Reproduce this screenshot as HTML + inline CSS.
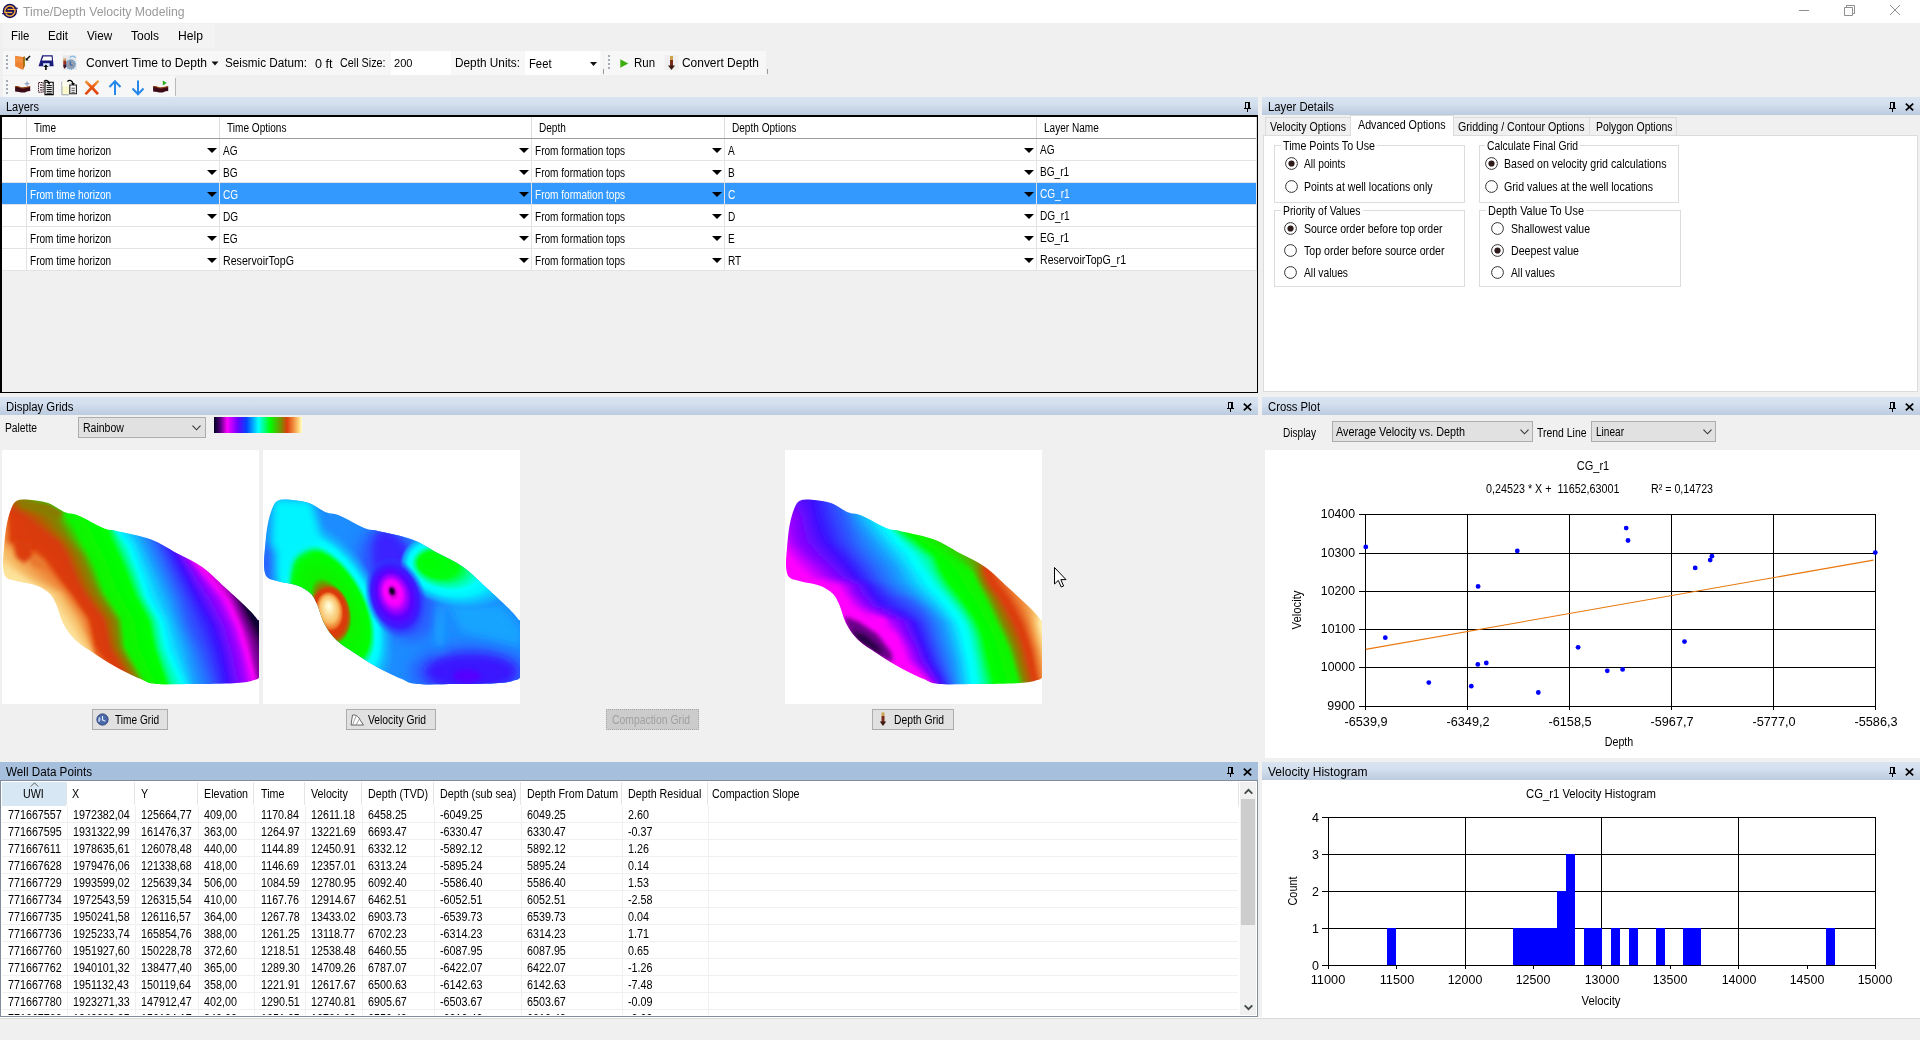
<!DOCTYPE html>
<html><head><meta charset="utf-8"><title>Time/Depth Velocity Modeling</title>
<style>
html,body{margin:0;padding:0;}
html{width:1920px;height:1040px;overflow:hidden;}
body{width:1920px;height:1040px;overflow:hidden;background:#f0f0f0;position:relative;
font-family:"Liberation Sans",sans-serif;font-size:11px;color:#000;}
body div{position:absolute;box-sizing:border-box;}
.t{white-space:nowrap;}
svg{position:absolute;overflow:visible;}
.hdr{background:linear-gradient(#d9e4f1,#d3dfee 40%,#bccbdf 100%);}
.hdra{background:#a6bfdd;}
#r{left:0;top:0;width:1920px;height:1040px;overflow:hidden;}
</style></head><body><div id="r">
<div style="left:0px;top:0px;width:1920px;height:23px;background:#fff;"></div>
<svg style="left:0px;top:0px" width="22" height="22" viewBox="0 0 22 22">
<circle cx="9.9" cy="11" r="7.2" fill="#15105c"/>
<circle cx="9.9" cy="11" r="5" fill="none" stroke="#f6aa3c" stroke-width="1.5"/>
<rect x="14" y="7.7" width="3.8" height="1.1" fill="#15105c"/>
<rect x="2" y="13.1" width="3.8" height="1.1" fill="#15105c"/>
<rect x="7.4" y="8.8" width="8" height="1.4" fill="#f6aa3c"/>
<rect x="5.8" y="10.2" width="8.4" height="1.6" fill="#15105c"/>
<rect x="4.4" y="11.8" width="8" height="1.4" fill="#f6aa3c"/>
</svg>
<div class="t" style="left:23.2px;top:3.8px;font-size:12px;line-height:16px;color:#9a9a9a;transform:scaleX(1.0203);transform-origin:0 50%;">Time/Depth Velocity Modeling</div>
<svg style="left:1790px;top:0px" width="130" height="23" viewBox="0 0 130 23">
<path d="M9 10.5 H19" stroke="#8e8e8e" stroke-width="1"/>
<path d="M54.5 7.5 H62.5 V15.5 H54.5 Z M56.5 7.5 V5.5 H64.5 V13.5 H62.5" fill="none" stroke="#8e8e8e" stroke-width="1"/>
<path d="M100 5 L110 15 M110 5 L100 15" stroke="#8e8e8e" stroke-width="1"/>
</svg>
<div style="left:3px;top:24px;width:212px;height:24px;background:#f3f3f3;"></div>
<div class="t" style="left:11.2px;top:28px;font-size:12px;line-height:16px;color:#000;transform:scaleX(0.9472);transform-origin:0 50%;">File</div>
<div class="t" style="left:48.3px;top:28px;font-size:12px;line-height:16px;color:#000;transform:scaleX(0.9634);transform-origin:0 50%;">Edit</div>
<div class="t" style="left:86.7px;top:28px;font-size:12px;line-height:16px;color:#000;transform:scaleX(0.9761);transform-origin:0 50%;">View</div>
<div class="t" style="left:131.3px;top:28px;font-size:12px;line-height:16px;color:#000;transform:scaleX(1.0014);transform-origin:0 50%;">Tools</div>
<div class="t" style="left:178.3px;top:28px;font-size:12px;line-height:16px;color:#000;transform:scaleX(1.0113);transform-origin:0 50%;">Help</div>
<div style="left:3px;top:51px;width:600px;height:24px;background:#f7f7f7;"></div>
<div style="left:603px;top:69px;width:1px;height:5px;background:#9a9a9a;"></div>
<div style="left:604px;top:51px;width:162px;height:24px;background:#f7f7f7;"></div>
<div style="left:767px;top:69px;width:1px;height:5px;background:#9a9a9a;"></div>
<div style="left:6px;top:55px;width:2px;height:2px;background:#a4aab6;"></div>
<div style="left:6px;top:59px;width:2px;height:2px;background:#a4aab6;"></div>
<div style="left:6px;top:63px;width:2px;height:2px;background:#a4aab6;"></div>
<div style="left:6px;top:67px;width:2px;height:2px;background:#a4aab6;"></div>
<div style="left:608px;top:55px;width:2px;height:2px;background:#a4aab6;"></div>
<div style="left:608px;top:59px;width:2px;height:2px;background:#a4aab6;"></div>
<div style="left:608px;top:63px;width:2px;height:2px;background:#a4aab6;"></div>
<div style="left:608px;top:67px;width:2px;height:2px;background:#a4aab6;"></div>
<svg style="left:14px;top:54px" width="18" height="18" viewBox="0 0 18 18">
<path d="M1.1 1.8 L8.9 3.1 L8.9 15.9 L1.1 12.2 Z" fill="#ee8230"/>
<path d="M2 3 L8 4.2 L8 9 L2 7.5 Z" fill="#f59a4a" opacity="0.6"/>
<path d="M8.9 3.1 L11 2.3 L11 11.7 L8.9 15.9 Z" fill="#b8640e"/>
<path d="M10.3 3 V11" stroke="#8a9a20" stroke-width="0.7"/>
<path d="M16 2 L12.3 5.8" stroke="#111" stroke-width="1.5"/>
<path d="M11.6 3.4 V6.6 H14.8 Z" fill="#111"/>
</svg>
<svg style="left:37px;top:54px" width="18" height="18" viewBox="0 0 18 18">
<path d="M5.2 1.3 H15.6 L16.6 12.2 H1.5 Z" fill="#1a1a7c"/>
<path d="M6.3 2.4 H14.6 L15 6.4 H4.8 Z" fill="#fff"/>
<path d="M6.2 9.2 H12.6 V12.2 H6.2 Z" fill="#dcecff"/>
<path d="M8.9 11.5 V15.9" stroke="#0a0a0a" stroke-width="1.7"/>
<path d="M6.4 13 L8.9 10.4 L11.4 13 Z" fill="#0a0a0a"/>
</svg>
<svg style="left:60px;top:53px" width="19" height="19" viewBox="0 0 19 19">
<rect x="2.5" y="2.3" width="14.2" height="14.6" fill="#e9e9e9"/>
<circle cx="10.8" cy="11.4" r="4.6" fill="#9a9ea8" stroke="#4a9be0" stroke-width="1.3" stroke-dasharray="1 0.9"/>
<path d="M10.3 8.2 V11.8 L12.6 12.6" stroke="#2a64b8" stroke-width="1.1" fill="none"/>
<path d="M9.8 4.6 C11.5 2.4 14.5 2.6 15.6 5" stroke="#7fb8ea" stroke-width="1.3" fill="none"/>
<rect x="3.3" y="5.4" width="2.9" height="2.2" fill="#c8a262"/>
<rect x="3.3" y="7.6" width="2.9" height="3.6" fill="#9c3020"/>
<path d="M3.3 11.2 H6.2 V13.6 L4.75 15.9 L3.3 13.6 Z" fill="#401020"/>
</svg>
<div class="t" style="left:86.3px;top:55px;font-size:12px;line-height:16px;color:#000;transform:scaleX(1.0083);transform-origin:0 50%;">Convert Time to Depth</div>
<svg style="left:211px;top:61px" width="8" height="5" viewBox="0 0 8 5"><path d="M0.5 0.5 H7.5 L4 4.5 Z" fill="#111"/></svg>
<div class="t" style="left:225.0px;top:55px;font-size:12px;line-height:16px;color:#000;transform:scaleX(0.9762);transform-origin:0 50%;">Seismic Datum:</div>
<div class="t" style="left:315.4px;top:56px;font-size:12px;line-height:16px;color:#000;transform:scaleX(1.0492);transform-origin:0 50%;">0 ft</div>
<div class="t" style="left:340.4px;top:55px;font-size:12px;line-height:16px;color:#000;transform:scaleX(0.8985);transform-origin:0 50%;">Cell Size:</div>
<div style="left:391px;top:51px;width:60px;height:24px;background:#fff;"></div>
<div class="t" style="left:394.0px;top:55px;font-size:11px;line-height:16px;color:#000;transform:scaleX(1.0071);transform-origin:0 50%;">200</div>
<div class="t" style="left:455.0px;top:55px;font-size:12px;line-height:16px;color:#000;transform:scaleX(0.9848);transform-origin:0 50%;">Depth Units:</div>
<div style="left:525px;top:51px;width:75px;height:24px;background:#fff;"></div>
<div class="t" style="left:529.0px;top:56px;font-size:12px;line-height:16px;color:#000;transform:scaleX(0.9375);transform-origin:0 50%;">Feet</div>
<svg style="left:590px;top:62px" width="7" height="4" viewBox="0 0 7 4"><path d="M0 0 H7 L3.5 4 Z" fill="#111"/></svg>
<svg style="left:619.5px;top:58.5px" width="9" height="9" viewBox="0 0 9 9"><path d="M0.3 0.2 L8.3 4.5 L0.3 8.8 Z" fill="#3fae12"/></svg>
<div class="t" style="left:634.0px;top:55px;font-size:12px;line-height:16px;color:#000;transform:scaleX(0.9563);transform-origin:0 50%;">Run</div>
<svg style="left:665px;top:54px" width="13" height="18" viewBox="0 0 12 18">
<rect x="-1" y="1" width="14" height="15" fill="#efefef"/>
<rect x="4.5" y="2" width="3" height="4" fill="#c9a24a"/>
<rect x="4.5" y="6" width="3" height="6" fill="#7a2c1c"/>
<path d="M2.5 11.5 H9.5 L6 16 Z" fill="#3a1a12"/>
</svg>
<div class="t" style="left:682.0px;top:55px;font-size:12px;line-height:16px;color:#000;transform:scaleX(0.9948);transform-origin:0 50%;">Convert Depth</div>
<div style="left:3px;top:76px;width:172px;height:21px;background:#f7f7f7;"></div>
<div style="left:175px;top:78px;width:1px;height:18px;background:#b9b9b9;"></div>
<div style="left:6px;top:80px;width:2px;height:2px;background:#a4aab6;"></div>
<div style="left:6px;top:84px;width:2px;height:2px;background:#a4aab6;"></div>
<div style="left:6px;top:88px;width:2px;height:2px;background:#a4aab6;"></div>
<div style="left:6px;top:92px;width:2px;height:2px;background:#a4aab6;"></div>
<svg style="left:14px;top:78px" width="18" height="18" viewBox="0 0 18 18">
<rect x="1" y="2" width="15.5" height="15" fill="#f6f6f6"/><path d="M1.1 8.6 C3.5 7.6 5.5 9.4 8 9.8 C10.5 10.2 12.5 8.6 16.2 8.6 V13 C13.5 12.6 11.5 14.8 9 14.6 C6.5 14.4 4 13.4 1.1 13.4 Z" fill="#3c0a18"/><path d="M1.1 8.8 C3.5 7.8 5.5 9.6 8 10 C10.5 10.4 12.5 8.8 16.2 8.8" stroke="#9a4210" stroke-width="1.1" fill="none"/>
<path d="M13 3.4 V8 M10.7 5.7 H15.3" stroke="#8ea4c4" stroke-width="1.2"/>
</svg>
<svg style="left:37px;top:78px" width="18" height="18" viewBox="0 0 18 18">
<path d="M1.6 4.5 H6.2 V14.2 H1.6 Z" fill="#fff" stroke="#3a1018" stroke-width="1" stroke-dasharray="1.6 0.6"/>
<path d="M3 7 H5.4 M3 9.6 H5.4 M3 12 H5.4" stroke="#3a1018" stroke-width="1"/>
<path d="M8 4.2 H16.2 V16.6 H8 Z" fill="#fff" stroke="#000" stroke-width="1.1"/>
<path d="M9.6 7.4 H14.8 M9.6 9.4 H14.8 M9.6 11.4 H14.8 M9.6 13.4 H14.8 M9.6 15.2 H14.8" stroke="#000" stroke-width="1"/>
<path d="M7 3.4 C9 1.6 11.4 2.4 12 5" stroke="#000" stroke-width="1.3" fill="none"/>
<path d="M10.2 4.6 L12.2 6.8 L13.6 4.2 Z" fill="#000"/>
</svg>
<svg style="left:60px;top:78px" width="18" height="18" viewBox="0 0 18 18">
<path d="M1.9 3.6 H9.2 V16.8 H1.9 Z" fill="#fbf8cc"/>
<path d="M1.9 3.6 V16.8 H9.2" fill="none" stroke="#8c98aa" stroke-width="0.9"/>
<path d="M2.4 3.8 H8.8 V8.5 H2.4 Z" fill="#fdfdf0"/>
<path d="M9.8 7 H16.4 V15.8 H9.8 Z" fill="#fff" stroke="#222" stroke-width="1.1"/>
<path d="M11.4 10.2 H14.8 M11.4 12.3 H14.8 M11.4 14.3 H14.8" stroke="#222" stroke-width="0.8"/>
<path d="M7.4 3.4 C9.6 1.4 12.6 2.4 13 6" stroke="#000" stroke-width="1.3" fill="none"/>
<path d="M11 5.2 L13.2 7.6 L15 5 Z" fill="#000"/>
</svg>
<svg style="left:83px;top:78px" width="18" height="18" viewBox="0 0 18 18">
<defs><linearGradient id="gx" x1="0" y1="0" x2="0" y2="1"><stop offset="0" stop-color="#f4a844"/><stop offset="0.45" stop-color="#e85a14"/><stop offset="1" stop-color="#dc3c0c"/></linearGradient></defs>
<path d="M1.6 4 L3.6 2.2 L8.9 7.6 L14.6 2 L16.4 3.4 L10.8 9.6 L16 15.2 L14 17 L8.8 11.6 L3.4 17 L1.6 15.4 L6.9 9.6 Z" fill="url(#gx)"/>
</svg>
<svg style="left:107px;top:78.5px" width="16" height="18" viewBox="0 0 16 18">
<path d="M8 16 V3 M2.5 8 L8 2.2 L13.5 8" stroke="#2688e8" stroke-width="2" fill="none"/>
</svg>
<svg style="left:130px;top:78.5px" width="16" height="18" viewBox="0 0 16 18">
<path d="M8 1.5 V14.5 M2.5 9.5 L8 15.3 L13.5 9.5" stroke="#2688e8" stroke-width="2" fill="none"/>
</svg>
<svg style="left:152px;top:78px" width="18" height="18" viewBox="0 0 18 18">
<rect x="1" y="2" width="15.5" height="15" fill="#f6f6f6"/><path d="M1.1 8.6 C3.5 7.6 5.5 9.4 8 9.8 C10.5 10.2 12.5 8.6 16.2 8.6 V13 C13.5 12.6 11.5 14.8 9 14.6 C6.5 14.4 4 13.4 1.1 13.4 Z" fill="#3c0a18"/><path d="M1.1 8.8 C3.5 7.8 5.5 9.6 8 10 C10.5 10.4 12.5 8.8 16.2 8.8" stroke="#9a4210" stroke-width="1.1" fill="none"/>
<path d="M10.8 2.6 L14.8 5 L10.8 7.6 Z" fill="#2cb01c"/>
</svg>
<div class="hdr" style="left:0px;top:97px;width:1258px;height:18px;"></div>
<div class="t" style="left:6.3px;top:98.5px;font-size:12px;line-height:16px;color:#000;transform:scaleX(0.9167);transform-origin:0 50%;">Layers</div>
<svg style="left:1244px;top:102px" width="7" height="10" viewBox="0 0 7 10"><g shape-rendering="crispEdges" fill="#000"><rect x="1" y="0" width="5" height="1"/><rect x="1" y="0" width="1" height="6"/><rect x="4" y="0" width="2" height="6"/><rect x="0" y="6" width="7" height="1"/><rect x="3" y="7" width="1" height="3"/></g></svg>
<div style="left:0px;top:115px;width:1258px;height:278px;background:#f0f0f0;border:1px solid #000;border-left-width:2px;border-top-width:2px;"></div>
<div style="left:2px;top:117px;width:1255px;height:22px;background:#fff;border-bottom:1px solid #9d9d9d;"></div>
<div style="left:26px;top:117px;width:1px;height:21px;background:#dcdcdc;"></div>
<div style="left:219px;top:117px;width:1px;height:21px;background:#dcdcdc;"></div>
<div style="left:531px;top:117px;width:1px;height:21px;background:#dcdcdc;"></div>
<div style="left:724px;top:117px;width:1px;height:21px;background:#dcdcdc;"></div>
<div style="left:1036px;top:117px;width:1px;height:21px;background:#dcdcdc;"></div>
<div style="left:1256px;top:117px;width:1px;height:22px;background:#dcdcdc;"></div>
<div class="t" style="left:34.0px;top:121px;font-size:12px;line-height:14px;color:#000;transform:scaleX(0.839);transform-origin:0 50%;">Time</div>
<div class="t" style="left:227.0px;top:121px;font-size:12px;line-height:14px;color:#000;transform:scaleX(0.839);transform-origin:0 50%;">Time Options</div>
<div class="t" style="left:539.0px;top:121px;font-size:12px;line-height:14px;color:#000;transform:scaleX(0.839);transform-origin:0 50%;">Depth</div>
<div class="t" style="left:732.0px;top:121px;font-size:12px;line-height:14px;color:#000;transform:scaleX(0.839);transform-origin:0 50%;">Depth Options</div>
<div class="t" style="left:1044.0px;top:121px;font-size:12px;line-height:14px;color:#000;transform:scaleX(0.839);transform-origin:0 50%;">Layer Name</div>
<div style="left:2px;top:139px;width:1255px;height:22px;background:#fff;border-bottom:1px solid #e3e3e3;"></div>
<div style="left:26px;top:139px;width:1px;height:21px;background:#e3e3e3;"></div>
<div style="left:219px;top:139px;width:1px;height:21px;background:#e3e3e3;"></div>
<div style="left:531px;top:139px;width:1px;height:21px;background:#e3e3e3;"></div>
<div style="left:724px;top:139px;width:1px;height:21px;background:#e3e3e3;"></div>
<div style="left:1036px;top:139px;width:1px;height:21px;background:#e3e3e3;"></div>
<div style="left:1256px;top:139px;width:1px;height:22px;background:#e3e3e3;"></div>
<div class="t" style="left:30.0px;top:143.5px;font-size:12px;line-height:14px;color:#000;transform:scaleX(0.839);transform-origin:0 50%;">From time horizon</div>
<svg style="left:207px;top:147.5px" width="10" height="5" viewBox="0 0 10 5"><path d="M0 0 H10 L5 5 Z" fill="#000"/></svg>
<div class="t" style="left:223.0px;top:143.5px;font-size:12px;line-height:14px;color:#000;transform:scaleX(0.839);transform-origin:0 50%;">AG</div>
<svg style="left:519px;top:147.5px" width="10" height="5" viewBox="0 0 10 5"><path d="M0 0 H10 L5 5 Z" fill="#000"/></svg>
<div class="t" style="left:535.0px;top:143.5px;font-size:12px;line-height:14px;color:#000;transform:scaleX(0.839);transform-origin:0 50%;">From formation tops</div>
<svg style="left:712px;top:147.5px" width="10" height="5" viewBox="0 0 10 5"><path d="M0 0 H10 L5 5 Z" fill="#000"/></svg>
<div class="t" style="left:728.0px;top:143.5px;font-size:12px;line-height:14px;color:#000;transform:scaleX(0.839);transform-origin:0 50%;">A</div>
<svg style="left:1024px;top:147.5px" width="10" height="5" viewBox="0 0 10 5"><path d="M0 0 H10 L5 5 Z" fill="#000"/></svg>
<div class="t" style="left:1040.0px;top:142.5px;font-size:12px;line-height:14px;color:#000;transform:scaleX(0.839);transform-origin:0 50%;">AG</div>
<div style="left:2px;top:161px;width:1255px;height:22px;background:#fff;border-bottom:1px solid #e3e3e3;"></div>
<div style="left:26px;top:161px;width:1px;height:21px;background:#e3e3e3;"></div>
<div style="left:219px;top:161px;width:1px;height:21px;background:#e3e3e3;"></div>
<div style="left:531px;top:161px;width:1px;height:21px;background:#e3e3e3;"></div>
<div style="left:724px;top:161px;width:1px;height:21px;background:#e3e3e3;"></div>
<div style="left:1036px;top:161px;width:1px;height:21px;background:#e3e3e3;"></div>
<div style="left:1256px;top:161px;width:1px;height:22px;background:#e3e3e3;"></div>
<div class="t" style="left:30.0px;top:165.5px;font-size:12px;line-height:14px;color:#000;transform:scaleX(0.839);transform-origin:0 50%;">From time horizon</div>
<svg style="left:207px;top:169.5px" width="10" height="5" viewBox="0 0 10 5"><path d="M0 0 H10 L5 5 Z" fill="#000"/></svg>
<div class="t" style="left:223.0px;top:165.5px;font-size:12px;line-height:14px;color:#000;transform:scaleX(0.839);transform-origin:0 50%;">BG</div>
<svg style="left:519px;top:169.5px" width="10" height="5" viewBox="0 0 10 5"><path d="M0 0 H10 L5 5 Z" fill="#000"/></svg>
<div class="t" style="left:535.0px;top:165.5px;font-size:12px;line-height:14px;color:#000;transform:scaleX(0.839);transform-origin:0 50%;">From formation tops</div>
<svg style="left:712px;top:169.5px" width="10" height="5" viewBox="0 0 10 5"><path d="M0 0 H10 L5 5 Z" fill="#000"/></svg>
<div class="t" style="left:728.0px;top:165.5px;font-size:12px;line-height:14px;color:#000;transform:scaleX(0.839);transform-origin:0 50%;">B</div>
<svg style="left:1024px;top:169.5px" width="10" height="5" viewBox="0 0 10 5"><path d="M0 0 H10 L5 5 Z" fill="#000"/></svg>
<div class="t" style="left:1040.0px;top:164.5px;font-size:12px;line-height:14px;color:#000;transform:scaleX(0.839);transform-origin:0 50%;">BG_r1</div>
<div style="left:2px;top:183px;width:1255px;height:22px;background:#3399ff;border-bottom:1px solid #e3e3e3;"></div>
<div style="left:26px;top:183px;width:1px;height:21px;background:#e3e3e3;"></div>
<div style="left:219px;top:183px;width:1px;height:21px;background:#e3e3e3;"></div>
<div style="left:531px;top:183px;width:1px;height:21px;background:#e3e3e3;"></div>
<div style="left:724px;top:183px;width:1px;height:21px;background:#e3e3e3;"></div>
<div style="left:1036px;top:183px;width:1px;height:21px;background:#e3e3e3;"></div>
<div style="left:1256px;top:183px;width:1px;height:22px;background:#e3e3e3;"></div>
<div class="t" style="left:30.0px;top:187.5px;font-size:12px;line-height:14px;color:#fff;transform:scaleX(0.839);transform-origin:0 50%;">From time horizon</div>
<svg style="left:207px;top:191.5px" width="10" height="5" viewBox="0 0 10 5"><path d="M0 0 H10 L5 5 Z" fill="#000"/></svg>
<div class="t" style="left:223.0px;top:187.5px;font-size:12px;line-height:14px;color:#fff;transform:scaleX(0.839);transform-origin:0 50%;">CG</div>
<svg style="left:519px;top:191.5px" width="10" height="5" viewBox="0 0 10 5"><path d="M0 0 H10 L5 5 Z" fill="#000"/></svg>
<div class="t" style="left:535.0px;top:187.5px;font-size:12px;line-height:14px;color:#fff;transform:scaleX(0.839);transform-origin:0 50%;">From formation tops</div>
<svg style="left:712px;top:191.5px" width="10" height="5" viewBox="0 0 10 5"><path d="M0 0 H10 L5 5 Z" fill="#000"/></svg>
<div class="t" style="left:728.0px;top:187.5px;font-size:12px;line-height:14px;color:#fff;transform:scaleX(0.839);transform-origin:0 50%;">C</div>
<svg style="left:1024px;top:191.5px" width="10" height="5" viewBox="0 0 10 5"><path d="M0 0 H10 L5 5 Z" fill="#000"/></svg>
<div class="t" style="left:1040.0px;top:186.5px;font-size:12px;line-height:14px;color:#fff;transform:scaleX(0.839);transform-origin:0 50%;">CG_r1</div>
<div style="left:2px;top:205px;width:1255px;height:22px;background:#fff;border-bottom:1px solid #e3e3e3;"></div>
<div style="left:26px;top:205px;width:1px;height:21px;background:#e3e3e3;"></div>
<div style="left:219px;top:205px;width:1px;height:21px;background:#e3e3e3;"></div>
<div style="left:531px;top:205px;width:1px;height:21px;background:#e3e3e3;"></div>
<div style="left:724px;top:205px;width:1px;height:21px;background:#e3e3e3;"></div>
<div style="left:1036px;top:205px;width:1px;height:21px;background:#e3e3e3;"></div>
<div style="left:1256px;top:205px;width:1px;height:22px;background:#e3e3e3;"></div>
<div class="t" style="left:30.0px;top:209.5px;font-size:12px;line-height:14px;color:#000;transform:scaleX(0.839);transform-origin:0 50%;">From time horizon</div>
<svg style="left:207px;top:213.5px" width="10" height="5" viewBox="0 0 10 5"><path d="M0 0 H10 L5 5 Z" fill="#000"/></svg>
<div class="t" style="left:223.0px;top:209.5px;font-size:12px;line-height:14px;color:#000;transform:scaleX(0.839);transform-origin:0 50%;">DG</div>
<svg style="left:519px;top:213.5px" width="10" height="5" viewBox="0 0 10 5"><path d="M0 0 H10 L5 5 Z" fill="#000"/></svg>
<div class="t" style="left:535.0px;top:209.5px;font-size:12px;line-height:14px;color:#000;transform:scaleX(0.839);transform-origin:0 50%;">From formation tops</div>
<svg style="left:712px;top:213.5px" width="10" height="5" viewBox="0 0 10 5"><path d="M0 0 H10 L5 5 Z" fill="#000"/></svg>
<div class="t" style="left:728.0px;top:209.5px;font-size:12px;line-height:14px;color:#000;transform:scaleX(0.839);transform-origin:0 50%;">D</div>
<svg style="left:1024px;top:213.5px" width="10" height="5" viewBox="0 0 10 5"><path d="M0 0 H10 L5 5 Z" fill="#000"/></svg>
<div class="t" style="left:1040.0px;top:208.5px;font-size:12px;line-height:14px;color:#000;transform:scaleX(0.839);transform-origin:0 50%;">DG_r1</div>
<div style="left:2px;top:227px;width:1255px;height:22px;background:#fff;border-bottom:1px solid #e3e3e3;"></div>
<div style="left:26px;top:227px;width:1px;height:21px;background:#e3e3e3;"></div>
<div style="left:219px;top:227px;width:1px;height:21px;background:#e3e3e3;"></div>
<div style="left:531px;top:227px;width:1px;height:21px;background:#e3e3e3;"></div>
<div style="left:724px;top:227px;width:1px;height:21px;background:#e3e3e3;"></div>
<div style="left:1036px;top:227px;width:1px;height:21px;background:#e3e3e3;"></div>
<div style="left:1256px;top:227px;width:1px;height:22px;background:#e3e3e3;"></div>
<div class="t" style="left:30.0px;top:231.5px;font-size:12px;line-height:14px;color:#000;transform:scaleX(0.839);transform-origin:0 50%;">From time horizon</div>
<svg style="left:207px;top:235.5px" width="10" height="5" viewBox="0 0 10 5"><path d="M0 0 H10 L5 5 Z" fill="#000"/></svg>
<div class="t" style="left:223.0px;top:231.5px;font-size:12px;line-height:14px;color:#000;transform:scaleX(0.839);transform-origin:0 50%;">EG</div>
<svg style="left:519px;top:235.5px" width="10" height="5" viewBox="0 0 10 5"><path d="M0 0 H10 L5 5 Z" fill="#000"/></svg>
<div class="t" style="left:535.0px;top:231.5px;font-size:12px;line-height:14px;color:#000;transform:scaleX(0.839);transform-origin:0 50%;">From formation tops</div>
<svg style="left:712px;top:235.5px" width="10" height="5" viewBox="0 0 10 5"><path d="M0 0 H10 L5 5 Z" fill="#000"/></svg>
<div class="t" style="left:728.0px;top:231.5px;font-size:12px;line-height:14px;color:#000;transform:scaleX(0.839);transform-origin:0 50%;">E</div>
<svg style="left:1024px;top:235.5px" width="10" height="5" viewBox="0 0 10 5"><path d="M0 0 H10 L5 5 Z" fill="#000"/></svg>
<div class="t" style="left:1040.0px;top:230.5px;font-size:12px;line-height:14px;color:#000;transform:scaleX(0.839);transform-origin:0 50%;">EG_r1</div>
<div style="left:2px;top:249px;width:1255px;height:22px;background:#fff;border-bottom:1px solid #e3e3e3;"></div>
<div style="left:26px;top:249px;width:1px;height:21px;background:#e3e3e3;"></div>
<div style="left:219px;top:249px;width:1px;height:21px;background:#e3e3e3;"></div>
<div style="left:531px;top:249px;width:1px;height:21px;background:#e3e3e3;"></div>
<div style="left:724px;top:249px;width:1px;height:21px;background:#e3e3e3;"></div>
<div style="left:1036px;top:249px;width:1px;height:21px;background:#e3e3e3;"></div>
<div style="left:1256px;top:249px;width:1px;height:22px;background:#e3e3e3;"></div>
<div class="t" style="left:30.0px;top:253.5px;font-size:12px;line-height:14px;color:#000;transform:scaleX(0.839);transform-origin:0 50%;">From time horizon</div>
<svg style="left:207px;top:257.5px" width="10" height="5" viewBox="0 0 10 5"><path d="M0 0 H10 L5 5 Z" fill="#000"/></svg>
<div class="t" style="left:223.0px;top:253.5px;font-size:12px;line-height:14px;color:#000;transform:scaleX(0.8871);transform-origin:0 50%;">ReservoirTopG</div>
<svg style="left:519px;top:257.5px" width="10" height="5" viewBox="0 0 10 5"><path d="M0 0 H10 L5 5 Z" fill="#000"/></svg>
<div class="t" style="left:535.0px;top:253.5px;font-size:12px;line-height:14px;color:#000;transform:scaleX(0.839);transform-origin:0 50%;">From formation tops</div>
<svg style="left:712px;top:257.5px" width="10" height="5" viewBox="0 0 10 5"><path d="M0 0 H10 L5 5 Z" fill="#000"/></svg>
<div class="t" style="left:728.0px;top:253.5px;font-size:12px;line-height:14px;color:#000;transform:scaleX(0.839);transform-origin:0 50%;">RT</div>
<svg style="left:1024px;top:257.5px" width="10" height="5" viewBox="0 0 10 5"><path d="M0 0 H10 L5 5 Z" fill="#000"/></svg>
<div class="t" style="left:1040.0px;top:252.5px;font-size:12px;line-height:14px;color:#000;transform:scaleX(0.8837);transform-origin:0 50%;">ReservoirTopG_r1</div>
<div class="hdr" style="left:1262px;top:97px;width:658px;height:18px;"></div>
<div class="t" style="left:1268.3px;top:98.5px;font-size:12px;line-height:16px;color:#000;transform:scaleX(0.9418);transform-origin:0 50%;">Layer Details</div>
<svg style="left:1889px;top:102px" width="7" height="10" viewBox="0 0 7 10"><g shape-rendering="crispEdges" fill="#000"><rect x="1" y="0" width="5" height="1"/><rect x="1" y="0" width="1" height="6"/><rect x="4" y="0" width="2" height="6"/><rect x="0" y="6" width="7" height="1"/><rect x="3" y="7" width="1" height="3"/></g></svg>
<svg style="left:1905px;top:103px" width="9" height="8" viewBox="0 0 9 8"><path d="M0.8 0.6 L8.2 7.4 M8.2 0.6 L0.8 7.4" stroke="#000" stroke-width="1.7"/></svg>
<div style="left:1263px;top:135px;width:655px;height:257px;background:#fff;border:1px solid #dcdcdc;"></div>
<div style="left:1265px;top:117px;width:86px;height:18px;background:#f0f0f0;border:1px solid #dcdcdc;border-bottom:none;"></div>
<div class="t" style="left:1269.6px;top:119.8px;font-size:12px;line-height:14px;color:#000;transform:scaleX(0.8833);transform-origin:0 50%;">Velocity Options</div>
<div style="left:1453px;top:117px;width:137px;height:18px;background:#f0f0f0;border:1px solid #dcdcdc;border-bottom:none;"></div>
<div class="t" style="left:1457.6px;top:119.8px;font-size:12px;line-height:14px;color:#000;transform:scaleX(0.8866);transform-origin:0 50%;">Gridding / Contour Options</div>
<div style="left:1589px;top:117px;width:88px;height:18px;background:#f0f0f0;border:1px solid #dcdcdc;border-bottom:none;"></div>
<div class="t" style="left:1596.0px;top:119.8px;font-size:12px;line-height:14px;color:#000;transform:scaleX(0.8685);transform-origin:0 50%;">Polygon Options</div>
<div style="left:1350px;top:115px;width:104px;height:21px;background:#fff;border:1px solid #dcdcdc;border-bottom:none;"></div>
<div class="t" style="left:1358.2px;top:117.8px;font-size:12px;line-height:14px;color:#000;transform:scaleX(0.8925);transform-origin:0 50%;">Advanced Options</div>
<div style="left:1274px;top:145px;width:191px;height:58px;border:1px solid #dcdcdc;"></div>
<div style="left:1281px;top:139px;width:96px;height:12px;background:#fff;"></div>
<div class="t" style="left:1283.0px;top:139px;font-size:12px;line-height:14px;color:#000;transform:scaleX(0.8904);transform-origin:0 50%;">Time Points To Use</div>
<svg style="left:1285px;top:157px" width="13" height="13" viewBox="0 0 13 13"><circle cx="6.5" cy="6.5" r="5.9" fill="#fff" stroke="#333" stroke-width="1"/><circle cx="6.5" cy="6.5" r="3.1" fill="#2e1c1c"/></svg>
<div class="t" style="left:1304.0px;top:157px;font-size:12px;line-height:14px;color:#000;transform:scaleX(0.8518);transform-origin:0 50%;">All points</div>
<svg style="left:1285px;top:180px" width="13" height="13" viewBox="0 0 13 13"><circle cx="6.5" cy="6.5" r="5.9" fill="#fff" stroke="#333" stroke-width="1"/></svg>
<div class="t" style="left:1304.0px;top:180px;font-size:12px;line-height:14px;color:#000;transform:scaleX(0.8756);transform-origin:0 50%;">Points at well locations only</div>
<div style="left:1479px;top:145px;width:200px;height:58px;border:1px solid #dcdcdc;"></div>
<div style="left:1485px;top:139px;width:95px;height:12px;background:#fff;"></div>
<div class="t" style="left:1487.0px;top:139px;font-size:12px;line-height:14px;color:#000;transform:scaleX(0.8637);transform-origin:0 50%;">Calculate Final Grid</div>
<svg style="left:1485px;top:157px" width="13" height="13" viewBox="0 0 13 13"><circle cx="6.5" cy="6.5" r="5.9" fill="#fff" stroke="#333" stroke-width="1"/><circle cx="6.5" cy="6.5" r="3.1" fill="#2e1c1c"/></svg>
<div class="t" style="left:1504.0px;top:157px;font-size:12px;line-height:14px;color:#000;transform:scaleX(0.8857);transform-origin:0 50%;">Based on velocity grid calculations</div>
<svg style="left:1485px;top:180px" width="13" height="13" viewBox="0 0 13 13"><circle cx="6.5" cy="6.5" r="5.9" fill="#fff" stroke="#333" stroke-width="1"/></svg>
<div class="t" style="left:1503.5px;top:180px;font-size:12px;line-height:14px;color:#000;transform:scaleX(0.8831);transform-origin:0 50%;">Grid values at the well locations</div>
<div style="left:1274px;top:210px;width:191px;height:77px;border:1px solid #dcdcdc;"></div>
<div style="left:1281px;top:204px;width:81.5px;height:12px;background:#fff;"></div>
<div class="t" style="left:1283.0px;top:204px;font-size:12px;line-height:14px;color:#000;transform:scaleX(0.8634);transform-origin:0 50%;">Priority of Values</div>
<svg style="left:1284px;top:222px" width="13" height="13" viewBox="0 0 13 13"><circle cx="6.5" cy="6.5" r="5.9" fill="#fff" stroke="#333" stroke-width="1"/><circle cx="6.5" cy="6.5" r="3.1" fill="#2e1c1c"/></svg>
<div class="t" style="left:1303.5px;top:221.5px;font-size:12px;line-height:14px;color:#000;transform:scaleX(0.8764);transform-origin:0 50%;">Source order before top order</div>
<svg style="left:1284px;top:244px" width="13" height="13" viewBox="0 0 13 13"><circle cx="6.5" cy="6.5" r="5.9" fill="#fff" stroke="#333" stroke-width="1"/></svg>
<div class="t" style="left:1303.5px;top:243.5px;font-size:12px;line-height:14px;color:#000;transform:scaleX(0.885);transform-origin:0 50%;">Top order before source order</div>
<svg style="left:1284px;top:266px" width="13" height="13" viewBox="0 0 13 13"><circle cx="6.5" cy="6.5" r="5.9" fill="#fff" stroke="#333" stroke-width="1"/></svg>
<div class="t" style="left:1303.5px;top:265.5px;font-size:12px;line-height:14px;color:#000;transform:scaleX(0.8567);transform-origin:0 50%;">All values</div>
<div style="left:1479px;top:210px;width:202px;height:77px;border:1px solid #dcdcdc;"></div>
<div style="left:1486px;top:204px;width:100px;height:12px;background:#fff;"></div>
<div class="t" style="left:1488.0px;top:204px;font-size:12px;line-height:14px;color:#000;transform:scaleX(0.9091);transform-origin:0 50%;">Depth Value To Use</div>
<svg style="left:1491px;top:222px" width="13" height="13" viewBox="0 0 13 13"><circle cx="6.5" cy="6.5" r="5.9" fill="#fff" stroke="#333" stroke-width="1"/></svg>
<div class="t" style="left:1510.5px;top:221.5px;font-size:12px;line-height:14px;color:#000;transform:scaleX(0.8778);transform-origin:0 50%;">Shallowest value</div>
<svg style="left:1491px;top:244px" width="13" height="13" viewBox="0 0 13 13"><circle cx="6.5" cy="6.5" r="5.9" fill="#fff" stroke="#333" stroke-width="1"/><circle cx="6.5" cy="6.5" r="3.1" fill="#2e1c1c"/></svg>
<div class="t" style="left:1510.5px;top:243.5px;font-size:12px;line-height:14px;color:#000;transform:scaleX(0.8868);transform-origin:0 50%;">Deepest value</div>
<svg style="left:1491px;top:266px" width="13" height="13" viewBox="0 0 13 13"><circle cx="6.5" cy="6.5" r="5.9" fill="#fff" stroke="#333" stroke-width="1"/></svg>
<div class="t" style="left:1510.5px;top:265.5px;font-size:12px;line-height:14px;color:#000;transform:scaleX(0.8567);transform-origin:0 50%;">All values</div>
<div class="hdr" style="left:0px;top:397px;width:1258px;height:18px;"></div>
<div class="t" style="left:6.3px;top:398.5px;font-size:12px;line-height:16px;color:#000;transform:scaleX(0.9454);transform-origin:0 50%;">Display Grids</div>
<svg style="left:1227px;top:402px" width="7" height="10" viewBox="0 0 7 10"><g shape-rendering="crispEdges" fill="#000"><rect x="1" y="0" width="5" height="1"/><rect x="1" y="0" width="1" height="6"/><rect x="4" y="0" width="2" height="6"/><rect x="0" y="6" width="7" height="1"/><rect x="3" y="7" width="1" height="3"/></g></svg>
<svg style="left:1243px;top:403px" width="9" height="8" viewBox="0 0 9 8"><path d="M0.8 0.6 L8.2 7.4 M8.2 0.6 L0.8 7.4" stroke="#000" stroke-width="1.7"/></svg>
<div class="t" style="left:5.0px;top:420px;font-size:12px;line-height:16px;color:#000;transform:scaleX(0.8574);transform-origin:0 50%;">Palette</div>
<div style="left:78px;top:417px;width:128px;height:21px;background:#e1e1e1;border:1px solid #adadad;"></div>
<div class="t" style="left:83.0px;top:419.5px;font-size:12px;line-height:16px;color:#000;transform:scaleX(0.8761);transform-origin:0 50%;">Rainbow</div>
<svg style="left:192px;top:425px" width="9" height="6" viewBox="0 0 9 6"><path d="M0.5 0.7 L4.5 4.8 L8.5 0.7" fill="none" stroke="#333" stroke-width="1.1"/></svg>
<div style="left:214px;top:417px;width:88px;height:16px;background:linear-gradient(90deg,#000020 0%,#50007a 7%,#ff00ff 15%,#6a00ff 27%,#0044ff 37%,#00ffff 50.5%,#00ff00 64%,#7c8a00 76.5%,#dd3c0a 83%,#f08a3c 90%,#ffd27a 96%,#ffffc8 100%);"></div>
<div style="left:2px;top:450px;width:257px;height:254px;background:#fff;"></div>
<svg style="left:2px;top:450px;overflow:hidden" width="257" height="254" viewBox="0 0 257 254"><defs><clipPath id="cpgT"><path d="M16.2 50.2C19.9 49.0 26.7 49.7 31.7 50.2C36.7 50.7 40.8 51.1 46.0 53.1C51.2 55.1 57.9 60.2 62.9 62.2C67.9 64.2 69.4 62.6 75.9 65.3C82.4 68.0 95.3 75.7 101.8 78.3C108.3 80.9 107.0 79.1 114.8 80.9C122.6 82.7 138.7 85.5 148.6 89.2C158.5 92.9 165.8 98.2 174.5 102.9C183.2 107.6 191.8 110.9 200.5 117.2C209.2 123.5 218.7 133.5 226.5 140.6C234.3 147.7 242.4 155.2 247.2 160.0C251.9 164.8 253.1 166.3 255.0 169.1C256.9 171.9 257.9 168.2 258.5 177.0C259.1 185.8 259.8 213.1 258.5 222.0C257.2 230.9 255.0 228.7 250.5 230.6C246.0 232.5 241.2 232.6 231.6 233.2C222.0 233.8 205.7 233.9 192.7 234.0C179.7 234.1 162.9 234.9 153.8 234.0C144.7 233.1 145.1 231.8 138.2 228.8C131.3 225.8 120.0 220.2 112.2 215.9C104.4 211.6 98.0 207.2 91.5 202.9C85.0 198.6 78.3 194.7 73.3 189.9C68.3 185.1 64.8 180.4 61.6 174.3C58.4 168.2 56.2 158.7 53.8 153.5C51.4 148.3 50.5 146.2 47.3 143.2C44.0 140.2 39.5 137.3 34.3 135.4C29.1 133.5 21.2 132.8 16.2 131.5C11.2 130.2 7.0 130.0 4.5 127.6C2.0 125.2 1.5 122.0 1.1 117.2C0.7 112.4 1.3 105.9 1.9 99.0C2.5 92.1 3.2 82.6 4.5 75.7C5.8 68.8 7.7 61.8 9.7 57.5C11.6 53.2 12.5 51.4 16.2 50.2Z"/></clipPath><filter id="b2gT" x="-30%" y="-30%" width="160%" height="160%"><feGaussianBlur stdDeviation="2"/></filter><filter id="b4gT" x="-30%" y="-30%" width="160%" height="160%"><feGaussianBlur stdDeviation="4"/></filter><filter id="b7gT" x="-30%" y="-30%" width="160%" height="160%"><feGaussianBlur stdDeviation="7"/></filter><filter id="vbgT" x="-5%" y="-5%" width="110%" height="110%"><feGaussianBlur stdDeviation="1.2 2.2"/></filter><linearGradient id="gTr0" gradientUnits="userSpaceOnUse" x1="-80" y1="0" x2="340" y2="0"><stop offset="0.0000" stop-color="#fde29a"/><stop offset="0.0980" stop-color="#f6bc66"/><stop offset="0.1943" stop-color="#ec7a2e"/><stop offset="0.1958" stop-color="#dd3c0a"/><stop offset="0.1972" stop-color="#d83a0a"/><stop offset="0.1986" stop-color="#b06004"/><stop offset="0.2399" stop-color="#7c8a00"/><stop offset="0.3033" stop-color="#0cf400"/><stop offset="0.4121" stop-color="#00ff00"/><stop offset="0.4207" stop-color="#00ff98"/><stop offset="0.4221" stop-color="#00ffff"/><stop offset="0.4786" stop-color="#18a0ff"/><stop offset="0.5099" stop-color="#2a64ff"/><stop offset="0.5339" stop-color="#3a12ff"/><stop offset="0.5354" stop-color="#a000ff"/><stop offset="0.5368" stop-color="#ff00ff"/><stop offset="0.6388" stop-color="#8c00a8"/><stop offset="0.6405" stop-color="#100030"/></linearGradient><linearGradient id="gTr1" gradientUnits="userSpaceOnUse" x1="-80" y1="0" x2="340" y2="0"><stop offset="0.0000" stop-color="#fde29a"/><stop offset="0.1053" stop-color="#f6bc66"/><stop offset="0.1951" stop-color="#ec7a2e"/><stop offset="0.1965" stop-color="#dd3c0a"/><stop offset="0.1979" stop-color="#d83a0a"/><stop offset="0.2097" stop-color="#b06004"/><stop offset="0.2575" stop-color="#7c8a00"/><stop offset="0.3121" stop-color="#0cf400"/><stop offset="0.4158" stop-color="#00ff00"/><stop offset="0.4251" stop-color="#00ff98"/><stop offset="0.4265" stop-color="#00ffff"/><stop offset="0.4828" stop-color="#18a0ff"/><stop offset="0.5140" stop-color="#2a64ff"/><stop offset="0.5387" stop-color="#3a12ff"/><stop offset="0.5401" stop-color="#a000ff"/><stop offset="0.5416" stop-color="#ff00ff"/><stop offset="0.6429" stop-color="#8c00a8"/><stop offset="0.6452" stop-color="#100030"/></linearGradient><linearGradient id="gTr2" gradientUnits="userSpaceOnUse" x1="-80" y1="0" x2="340" y2="0"><stop offset="0.0000" stop-color="#fde29a"/><stop offset="0.1126" stop-color="#f6bc66"/><stop offset="0.1958" stop-color="#ec7a2e"/><stop offset="0.1972" stop-color="#dd3c0a"/><stop offset="0.1986" stop-color="#d83a0a"/><stop offset="0.2280" stop-color="#b06004"/><stop offset="0.2751" stop-color="#7c8a00"/><stop offset="0.3209" stop-color="#0cf400"/><stop offset="0.4194" stop-color="#00ff00"/><stop offset="0.4295" stop-color="#00ff98"/><stop offset="0.4309" stop-color="#00ffff"/><stop offset="0.4871" stop-color="#18a0ff"/><stop offset="0.5182" stop-color="#2a64ff"/><stop offset="0.5435" stop-color="#3a12ff"/><stop offset="0.5449" stop-color="#a000ff"/><stop offset="0.5464" stop-color="#ff00ff"/><stop offset="0.6469" stop-color="#8c00a8"/><stop offset="0.6500" stop-color="#100030"/></linearGradient><linearGradient id="gTr3" gradientUnits="userSpaceOnUse" x1="-80" y1="0" x2="340" y2="0"><stop offset="0.0000" stop-color="#fde29a"/><stop offset="0.1200" stop-color="#f6bc66"/><stop offset="0.1965" stop-color="#ec7a2e"/><stop offset="0.1979" stop-color="#dd3c0a"/><stop offset="0.2102" stop-color="#d83a0a"/><stop offset="0.2463" stop-color="#b06004"/><stop offset="0.2927" stop-color="#7c8a00"/><stop offset="0.3297" stop-color="#0cf400"/><stop offset="0.4231" stop-color="#00ff00"/><stop offset="0.4339" stop-color="#00ff98"/><stop offset="0.4353" stop-color="#00ffff"/><stop offset="0.4914" stop-color="#18a0ff"/><stop offset="0.5223" stop-color="#2a64ff"/><stop offset="0.5483" stop-color="#3a12ff"/><stop offset="0.5510" stop-color="#a000ff"/><stop offset="0.5524" stop-color="#ff00ff"/><stop offset="0.6510" stop-color="#8c00a8"/><stop offset="0.6548" stop-color="#100030"/></linearGradient><linearGradient id="gTr4" gradientUnits="userSpaceOnUse" x1="-80" y1="0" x2="340" y2="0"><stop offset="0.0022" stop-color="#fde29a"/><stop offset="0.1273" stop-color="#f6bc66"/><stop offset="0.1973" stop-color="#ec7a2e"/><stop offset="0.2037" stop-color="#dd3c0a"/><stop offset="0.2269" stop-color="#d83a0a"/><stop offset="0.2647" stop-color="#b06004"/><stop offset="0.3103" stop-color="#7c8a00"/><stop offset="0.3385" stop-color="#0cf400"/><stop offset="0.4267" stop-color="#00ff00"/><stop offset="0.4383" stop-color="#00ff98"/><stop offset="0.4397" stop-color="#00ffff"/><stop offset="0.4956" stop-color="#18a0ff"/><stop offset="0.5264" stop-color="#2a64ff"/><stop offset="0.5531" stop-color="#3a12ff"/><stop offset="0.5578" stop-color="#a000ff"/><stop offset="0.5592" stop-color="#ff00ff"/><stop offset="0.6551" stop-color="#8c00a8"/><stop offset="0.6595" stop-color="#100030"/></linearGradient><linearGradient id="gTr5" gradientUnits="userSpaceOnUse" x1="-80" y1="0" x2="340" y2="0"><stop offset="0.0168" stop-color="#fde29a"/><stop offset="0.1346" stop-color="#f6bc66"/><stop offset="0.1980" stop-color="#ec7a2e"/><stop offset="0.2110" stop-color="#dd3c0a"/><stop offset="0.2419" stop-color="#d83a0a"/><stop offset="0.2782" stop-color="#b06004"/><stop offset="0.3212" stop-color="#7c8a00"/><stop offset="0.3465" stop-color="#0cf400"/><stop offset="0.4304" stop-color="#00ff00"/><stop offset="0.4427" stop-color="#00ff98"/><stop offset="0.4441" stop-color="#00ffff"/><stop offset="0.4999" stop-color="#18a0ff"/><stop offset="0.5306" stop-color="#2a64ff"/><stop offset="0.5579" stop-color="#3a12ff"/><stop offset="0.5646" stop-color="#a000ff"/><stop offset="0.5660" stop-color="#ff00ff"/><stop offset="0.6592" stop-color="#8c00a8"/><stop offset="0.6643" stop-color="#100030"/></linearGradient><linearGradient id="gTr6" gradientUnits="userSpaceOnUse" x1="-80" y1="0" x2="340" y2="0"><stop offset="0.0315" stop-color="#fde29a"/><stop offset="0.1419" stop-color="#f6bc66"/><stop offset="0.1987" stop-color="#ec7a2e"/><stop offset="0.2119" stop-color="#dd3c0a"/><stop offset="0.2552" stop-color="#d83a0a"/><stop offset="0.2870" stop-color="#b06004"/><stop offset="0.3256" stop-color="#7c8a00"/><stop offset="0.3538" stop-color="#0cf400"/><stop offset="0.4341" stop-color="#00ff00"/><stop offset="0.4471" stop-color="#00ff98"/><stop offset="0.4485" stop-color="#00ffff"/><stop offset="0.5042" stop-color="#18a0ff"/><stop offset="0.5347" stop-color="#2a64ff"/><stop offset="0.5626" stop-color="#3a12ff"/><stop offset="0.5714" stop-color="#a000ff"/><stop offset="0.5728" stop-color="#ff00ff"/><stop offset="0.6633" stop-color="#8c00a8"/><stop offset="0.6690" stop-color="#100030"/></linearGradient><linearGradient id="gTr7" gradientUnits="userSpaceOnUse" x1="-80" y1="0" x2="340" y2="0"><stop offset="0.0462" stop-color="#fde29a"/><stop offset="0.1493" stop-color="#f6bc66"/><stop offset="0.1995" stop-color="#ec7a2e"/><stop offset="0.2129" stop-color="#dd3c0a"/><stop offset="0.2686" stop-color="#d83a0a"/><stop offset="0.2958" stop-color="#b06004"/><stop offset="0.3300" stop-color="#7c8a00"/><stop offset="0.3612" stop-color="#0cf400"/><stop offset="0.4377" stop-color="#00ff00"/><stop offset="0.4515" stop-color="#00ff98"/><stop offset="0.4529" stop-color="#00ffff"/><stop offset="0.5084" stop-color="#18a0ff"/><stop offset="0.5388" stop-color="#2a64ff"/><stop offset="0.5674" stop-color="#3a12ff"/><stop offset="0.5782" stop-color="#a000ff"/><stop offset="0.5796" stop-color="#ff00ff"/><stop offset="0.6673" stop-color="#8c00a8"/><stop offset="0.6738" stop-color="#100030"/></linearGradient><linearGradient id="gTr8" gradientUnits="userSpaceOnUse" x1="-80" y1="0" x2="340" y2="0"><stop offset="0.0608" stop-color="#fde29a"/><stop offset="0.1566" stop-color="#f6bc66"/><stop offset="0.2002" stop-color="#ec7a2e"/><stop offset="0.2136" stop-color="#dd3c0a"/><stop offset="0.2819" stop-color="#d83a0a"/><stop offset="0.3049" stop-color="#b06004"/><stop offset="0.3350" stop-color="#7c8a00"/><stop offset="0.3678" stop-color="#0cf400"/><stop offset="0.4414" stop-color="#00ff00"/><stop offset="0.4559" stop-color="#00ff98"/><stop offset="0.4602" stop-color="#00ffff"/><stop offset="0.5127" stop-color="#18a0ff"/><stop offset="0.5429" stop-color="#2a64ff"/><stop offset="0.5722" stop-color="#3a12ff"/><stop offset="0.5850" stop-color="#a000ff"/><stop offset="0.5864" stop-color="#ff00ff"/><stop offset="0.6714" stop-color="#8c00a8"/><stop offset="0.6786" stop-color="#100030"/></linearGradient><linearGradient id="gTr9" gradientUnits="userSpaceOnUse" x1="-80" y1="0" x2="340" y2="0"><stop offset="0.0755" stop-color="#fde29a"/><stop offset="0.1639" stop-color="#f6bc66"/><stop offset="0.2009" stop-color="#ec7a2e"/><stop offset="0.2136" stop-color="#dd3c0a"/><stop offset="0.2951" stop-color="#d83a0a"/><stop offset="0.3152" stop-color="#b06004"/><stop offset="0.3416" stop-color="#7c8a00"/><stop offset="0.3722" stop-color="#0cf400"/><stop offset="0.4451" stop-color="#00ff00"/><stop offset="0.4603" stop-color="#00ff98"/><stop offset="0.4683" stop-color="#00ffff"/><stop offset="0.5170" stop-color="#18a0ff"/><stop offset="0.5471" stop-color="#2a64ff"/><stop offset="0.5770" stop-color="#3a12ff"/><stop offset="0.5918" stop-color="#a000ff"/><stop offset="0.5932" stop-color="#ff00ff"/><stop offset="0.6755" stop-color="#8c00a8"/><stop offset="0.6833" stop-color="#100030"/></linearGradient><linearGradient id="gTr10" gradientUnits="userSpaceOnUse" x1="-80" y1="0" x2="340" y2="0"><stop offset="0.0901" stop-color="#fde29a"/><stop offset="0.1712" stop-color="#f6bc66"/><stop offset="0.2016" stop-color="#ec7a2e"/><stop offset="0.2136" stop-color="#dd3c0a"/><stop offset="0.3082" stop-color="#d83a0a"/><stop offset="0.3255" stop-color="#b06004"/><stop offset="0.3482" stop-color="#7c8a00"/><stop offset="0.3766" stop-color="#0cf400"/><stop offset="0.4487" stop-color="#00ff00"/><stop offset="0.4647" stop-color="#00ff98"/><stop offset="0.4764" stop-color="#00ffff"/><stop offset="0.5212" stop-color="#18a0ff"/><stop offset="0.5512" stop-color="#2a64ff"/><stop offset="0.5818" stop-color="#3a12ff"/><stop offset="0.5986" stop-color="#a000ff"/><stop offset="0.6000" stop-color="#ff00ff"/><stop offset="0.6796" stop-color="#8c00a8"/><stop offset="0.6881" stop-color="#100030"/></linearGradient><linearGradient id="gTr11" gradientUnits="userSpaceOnUse" x1="-80" y1="0" x2="340" y2="0"><stop offset="0.1048" stop-color="#fde29a"/><stop offset="0.1786" stop-color="#f6bc66"/><stop offset="0.2024" stop-color="#ec7a2e"/><stop offset="0.2136" stop-color="#dd3c0a"/><stop offset="0.3214" stop-color="#d83a0a"/><stop offset="0.3357" stop-color="#b06004"/><stop offset="0.3548" stop-color="#7c8a00"/><stop offset="0.3810" stop-color="#0cf400"/><stop offset="0.4524" stop-color="#00ff00"/><stop offset="0.4690" stop-color="#00ff98"/><stop offset="0.4845" stop-color="#00ffff"/><stop offset="0.5255" stop-color="#18a0ff"/><stop offset="0.5553" stop-color="#2a64ff"/><stop offset="0.5866" stop-color="#3a12ff"/><stop offset="0.6054" stop-color="#a000ff"/><stop offset="0.6069" stop-color="#ff00ff"/><stop offset="0.6837" stop-color="#8c00a8"/><stop offset="0.6929" stop-color="#100030"/></linearGradient><linearGradient id="gTr12" gradientUnits="userSpaceOnUse" x1="-80" y1="0" x2="340" y2="0"><stop offset="0.1194" stop-color="#fde29a"/><stop offset="0.1859" stop-color="#f6bc66"/><stop offset="0.2222" stop-color="#ec7a2e"/><stop offset="0.2372" stop-color="#dd3c0a"/><stop offset="0.3272" stop-color="#d83a0a"/><stop offset="0.3419" stop-color="#b06004"/><stop offset="0.3621" stop-color="#7c8a00"/><stop offset="0.3868" stop-color="#0cf400"/><stop offset="0.4568" stop-color="#00ff00"/><stop offset="0.4734" stop-color="#00ff98"/><stop offset="0.4926" stop-color="#00ffff"/><stop offset="0.5298" stop-color="#18a0ff"/><stop offset="0.5594" stop-color="#2a64ff"/><stop offset="0.5914" stop-color="#3a12ff"/><stop offset="0.6122" stop-color="#a000ff"/><stop offset="0.6152" stop-color="#ff00ff"/><stop offset="0.6878" stop-color="#8c00a8"/><stop offset="0.6976" stop-color="#100030"/></linearGradient><linearGradient id="gTr13" gradientUnits="userSpaceOnUse" x1="-80" y1="0" x2="340" y2="0"><stop offset="0.1341" stop-color="#fde29a"/><stop offset="0.1932" stop-color="#f6bc66"/><stop offset="0.2419" stop-color="#ec7a2e"/><stop offset="0.2609" stop-color="#dd3c0a"/><stop offset="0.3330" stop-color="#d83a0a"/><stop offset="0.3482" stop-color="#b06004"/><stop offset="0.3694" stop-color="#7c8a00"/><stop offset="0.3927" stop-color="#0cf400"/><stop offset="0.4612" stop-color="#00ff00"/><stop offset="0.4778" stop-color="#00ff98"/><stop offset="0.4963" stop-color="#00ffff"/><stop offset="0.5340" stop-color="#18a0ff"/><stop offset="0.5636" stop-color="#2a64ff"/><stop offset="0.5961" stop-color="#3a12ff"/><stop offset="0.6190" stop-color="#a000ff"/><stop offset="0.6234" stop-color="#ff00ff"/><stop offset="0.6918" stop-color="#8c00a8"/><stop offset="0.7024" stop-color="#100030"/></linearGradient><linearGradient id="gTr14" gradientUnits="userSpaceOnUse" x1="-80" y1="0" x2="340" y2="0"><stop offset="0.1487" stop-color="#fde29a"/><stop offset="0.2005" stop-color="#f6bc66"/><stop offset="0.2617" stop-color="#ec7a2e"/><stop offset="0.2846" stop-color="#dd3c0a"/><stop offset="0.3388" stop-color="#d83a0a"/><stop offset="0.3544" stop-color="#b06004"/><stop offset="0.3767" stop-color="#7c8a00"/><stop offset="0.3985" stop-color="#0cf400"/><stop offset="0.4656" stop-color="#00ff00"/><stop offset="0.4822" stop-color="#00ff98"/><stop offset="0.5000" stop-color="#00ffff"/><stop offset="0.5383" stop-color="#18a0ff"/><stop offset="0.5677" stop-color="#2a64ff"/><stop offset="0.6009" stop-color="#3a12ff"/><stop offset="0.6258" stop-color="#a000ff"/><stop offset="0.6316" stop-color="#ff00ff"/><stop offset="0.6959" stop-color="#8c00a8"/><stop offset="0.7071" stop-color="#100030"/></linearGradient><linearGradient id="gTr15" gradientUnits="userSpaceOnUse" x1="-80" y1="0" x2="340" y2="0"><stop offset="0.1634" stop-color="#fde29a"/><stop offset="0.2079" stop-color="#f6bc66"/><stop offset="0.2733" stop-color="#ec7a2e"/><stop offset="0.2962" stop-color="#dd3c0a"/><stop offset="0.3430" stop-color="#d83a0a"/><stop offset="0.3590" stop-color="#b06004"/><stop offset="0.3819" stop-color="#7c8a00"/><stop offset="0.4033" stop-color="#0cf400"/><stop offset="0.4700" stop-color="#00ff00"/><stop offset="0.4864" stop-color="#00ff98"/><stop offset="0.5035" stop-color="#00ffff"/><stop offset="0.5426" stop-color="#18a0ff"/><stop offset="0.5718" stop-color="#2a64ff"/><stop offset="0.6057" stop-color="#3a12ff"/><stop offset="0.6326" stop-color="#a000ff"/><stop offset="0.6398" stop-color="#ff00ff"/><stop offset="0.7000" stop-color="#8c00a8"/><stop offset="0.7119" stop-color="#100030"/></linearGradient><linearGradient id="gTr16" gradientUnits="userSpaceOnUse" x1="-80" y1="0" x2="340" y2="0"><stop offset="0.1780" stop-color="#fde29a"/><stop offset="0.2152" stop-color="#f6bc66"/><stop offset="0.2821" stop-color="#ec7a2e"/><stop offset="0.3039" stop-color="#dd3c0a"/><stop offset="0.3468" stop-color="#d83a0a"/><stop offset="0.3630" stop-color="#b06004"/><stop offset="0.3863" stop-color="#7c8a00"/><stop offset="0.4077" stop-color="#0cf400"/><stop offset="0.4744" stop-color="#00ff00"/><stop offset="0.4904" stop-color="#00ff98"/><stop offset="0.5068" stop-color="#00ffff"/><stop offset="0.5468" stop-color="#18a0ff"/><stop offset="0.5760" stop-color="#2a64ff"/><stop offset="0.6105" stop-color="#3a12ff"/><stop offset="0.6394" stop-color="#a000ff"/><stop offset="0.6481" stop-color="#ff00ff"/><stop offset="0.7041" stop-color="#8c00a8"/><stop offset="0.7167" stop-color="#100030"/></linearGradient><linearGradient id="gTr17" gradientUnits="userSpaceOnUse" x1="-80" y1="0" x2="340" y2="0"><stop offset="0.1927" stop-color="#fde29a"/><stop offset="0.2225" stop-color="#f6bc66"/><stop offset="0.2908" stop-color="#ec7a2e"/><stop offset="0.3116" stop-color="#dd3c0a"/><stop offset="0.3505" stop-color="#d83a0a"/><stop offset="0.3670" stop-color="#b06004"/><stop offset="0.3907" stop-color="#7c8a00"/><stop offset="0.4121" stop-color="#0cf400"/><stop offset="0.4788" stop-color="#00ff00"/><stop offset="0.4944" stop-color="#00ff98"/><stop offset="0.5102" stop-color="#00ffff"/><stop offset="0.5511" stop-color="#18a0ff"/><stop offset="0.5801" stop-color="#2a64ff"/><stop offset="0.6153" stop-color="#3a12ff"/><stop offset="0.6462" stop-color="#a000ff"/><stop offset="0.6563" stop-color="#ff00ff"/><stop offset="0.7082" stop-color="#8c00a8"/><stop offset="0.7214" stop-color="#100030"/></linearGradient><linearGradient id="gTr18" gradientUnits="userSpaceOnUse" x1="-80" y1="0" x2="340" y2="0"><stop offset="0.2073" stop-color="#fde29a"/><stop offset="0.2324" stop-color="#f6bc66"/><stop offset="0.2993" stop-color="#ec7a2e"/><stop offset="0.3183" stop-color="#dd3c0a"/><stop offset="0.3543" stop-color="#d83a0a"/><stop offset="0.3711" stop-color="#b06004"/><stop offset="0.3947" stop-color="#7c8a00"/><stop offset="0.4161" stop-color="#0cf400"/><stop offset="0.4828" stop-color="#00ff00"/><stop offset="0.4983" stop-color="#00ff98"/><stop offset="0.5137" stop-color="#00ffff"/><stop offset="0.5554" stop-color="#18a0ff"/><stop offset="0.5842" stop-color="#2a64ff"/><stop offset="0.6201" stop-color="#3a12ff"/><stop offset="0.6530" stop-color="#a000ff"/><stop offset="0.6645" stop-color="#ff00ff"/><stop offset="0.7122" stop-color="#8c00a8"/><stop offset="0.7262" stop-color="#100030"/></linearGradient><linearGradient id="gTr19" gradientUnits="userSpaceOnUse" x1="-80" y1="0" x2="340" y2="0"><stop offset="0.2220" stop-color="#fde29a"/><stop offset="0.2449" stop-color="#f6bc66"/><stop offset="0.3073" stop-color="#ec7a2e"/><stop offset="0.3240" stop-color="#dd3c0a"/><stop offset="0.3582" stop-color="#d83a0a"/><stop offset="0.3751" stop-color="#b06004"/><stop offset="0.3984" stop-color="#7c8a00"/><stop offset="0.4198" stop-color="#0cf400"/><stop offset="0.4864" stop-color="#00ff00"/><stop offset="0.5019" stop-color="#00ff98"/><stop offset="0.5174" stop-color="#00ffff"/><stop offset="0.5596" stop-color="#18a0ff"/><stop offset="0.5883" stop-color="#2a64ff"/><stop offset="0.6248" stop-color="#3a12ff"/><stop offset="0.6598" stop-color="#a000ff"/><stop offset="0.6727" stop-color="#ff00ff"/><stop offset="0.7163" stop-color="#8c00a8"/><stop offset="0.7310" stop-color="#100030"/></linearGradient><linearGradient id="gTr20" gradientUnits="userSpaceOnUse" x1="-80" y1="0" x2="340" y2="0"><stop offset="0.2366" stop-color="#fde29a"/><stop offset="0.2573" stop-color="#f6bc66"/><stop offset="0.3154" stop-color="#ec7a2e"/><stop offset="0.3298" stop-color="#dd3c0a"/><stop offset="0.3621" stop-color="#d83a0a"/><stop offset="0.3791" stop-color="#b06004"/><stop offset="0.4020" stop-color="#7c8a00"/><stop offset="0.4234" stop-color="#0cf400"/><stop offset="0.4901" stop-color="#00ff00"/><stop offset="0.5056" stop-color="#00ff98"/><stop offset="0.5211" stop-color="#00ffff"/><stop offset="0.5639" stop-color="#18a0ff"/><stop offset="0.5925" stop-color="#2a64ff"/><stop offset="0.6296" stop-color="#3a12ff"/><stop offset="0.6666" stop-color="#a000ff"/><stop offset="0.6810" stop-color="#ff00ff"/><stop offset="0.7204" stop-color="#8c00a8"/><stop offset="0.7357" stop-color="#100030"/></linearGradient><linearGradient id="gTr21" gradientUnits="userSpaceOnUse" x1="-80" y1="0" x2="340" y2="0"><stop offset="0.2513" stop-color="#fde29a"/><stop offset="0.2712" stop-color="#f6bc66"/><stop offset="0.3234" stop-color="#ec7a2e"/><stop offset="0.3360" stop-color="#dd3c0a"/><stop offset="0.3664" stop-color="#d83a0a"/><stop offset="0.3833" stop-color="#b06004"/><stop offset="0.4060" stop-color="#7c8a00"/><stop offset="0.4271" stop-color="#0cf400"/><stop offset="0.4938" stop-color="#00ff00"/><stop offset="0.5092" stop-color="#00ff98"/><stop offset="0.5245" stop-color="#00ffff"/><stop offset="0.5682" stop-color="#18a0ff"/><stop offset="0.5966" stop-color="#2a64ff"/><stop offset="0.6344" stop-color="#3a12ff"/><stop offset="0.6734" stop-color="#a000ff"/><stop offset="0.6892" stop-color="#ff00ff"/><stop offset="0.7245" stop-color="#8c00a8"/><stop offset="0.7405" stop-color="#100030"/></linearGradient><linearGradient id="gTr22" gradientUnits="userSpaceOnUse" x1="-80" y1="0" x2="340" y2="0"><stop offset="0.2659" stop-color="#fde29a"/><stop offset="0.2896" stop-color="#f6bc66"/><stop offset="0.3315" stop-color="#ec7a2e"/><stop offset="0.3436" stop-color="#dd3c0a"/><stop offset="0.3721" stop-color="#d83a0a"/><stop offset="0.3881" stop-color="#b06004"/><stop offset="0.4107" stop-color="#7c8a00"/><stop offset="0.4308" stop-color="#0cf400"/><stop offset="0.4974" stop-color="#00ff00"/><stop offset="0.5125" stop-color="#00ff98"/><stop offset="0.5273" stop-color="#00ffff"/><stop offset="0.5724" stop-color="#18a0ff"/><stop offset="0.6007" stop-color="#2a64ff"/><stop offset="0.6392" stop-color="#3a12ff"/><stop offset="0.6802" stop-color="#a000ff"/><stop offset="0.6974" stop-color="#ff00ff"/><stop offset="0.7286" stop-color="#8c00a8"/><stop offset="0.7452" stop-color="#100030"/></linearGradient><linearGradient id="gTr23" gradientUnits="userSpaceOnUse" x1="-80" y1="0" x2="340" y2="0"><stop offset="0.2806" stop-color="#fde29a"/><stop offset="0.3079" stop-color="#f6bc66"/><stop offset="0.3396" stop-color="#ec7a2e"/><stop offset="0.3512" stop-color="#dd3c0a"/><stop offset="0.3777" stop-color="#d83a0a"/><stop offset="0.3929" stop-color="#b06004"/><stop offset="0.4155" stop-color="#7c8a00"/><stop offset="0.4344" stop-color="#0cf400"/><stop offset="0.5011" stop-color="#00ff00"/><stop offset="0.5158" stop-color="#00ff98"/><stop offset="0.5301" stop-color="#00ffff"/><stop offset="0.5767" stop-color="#18a0ff"/><stop offset="0.6048" stop-color="#2a64ff"/><stop offset="0.6440" stop-color="#3a12ff"/><stop offset="0.6870" stop-color="#a000ff"/><stop offset="0.7056" stop-color="#ff00ff"/><stop offset="0.7327" stop-color="#8c00a8"/><stop offset="0.7500" stop-color="#100030"/></linearGradient><linearGradient id="gTr24" gradientUnits="userSpaceOnUse" x1="-80" y1="0" x2="340" y2="0"><stop offset="0.2952" stop-color="#fde29a"/><stop offset="0.3262" stop-color="#f6bc66"/><stop offset="0.3476" stop-color="#ec7a2e"/><stop offset="0.3588" stop-color="#dd3c0a"/><stop offset="0.3833" stop-color="#d83a0a"/><stop offset="0.3976" stop-color="#b06004"/><stop offset="0.4202" stop-color="#7c8a00"/><stop offset="0.4381" stop-color="#0cf400"/><stop offset="0.5048" stop-color="#00ff00"/><stop offset="0.5190" stop-color="#00ff98"/><stop offset="0.5329" stop-color="#00ffff"/><stop offset="0.5810" stop-color="#18a0ff"/><stop offset="0.6090" stop-color="#2a64ff"/><stop offset="0.6488" stop-color="#3a12ff"/><stop offset="0.6938" stop-color="#a000ff"/><stop offset="0.7139" stop-color="#ff00ff"/><stop offset="0.7367" stop-color="#8c00a8"/><stop offset="0.7548" stop-color="#100030"/></linearGradient><linearGradient id="gTr25" gradientUnits="userSpaceOnUse" x1="-80" y1="0" x2="340" y2="0"><stop offset="0.3018" stop-color="#fde29a"/><stop offset="0.3324" stop-color="#f6bc66"/><stop offset="0.3542" stop-color="#ec7a2e"/><stop offset="0.3655" stop-color="#dd3c0a"/><stop offset="0.3905" stop-color="#d83a0a"/><stop offset="0.4044" stop-color="#b06004"/><stop offset="0.4266" stop-color="#7c8a00"/><stop offset="0.4443" stop-color="#0cf400"/><stop offset="0.5099" stop-color="#00ff00"/><stop offset="0.5242" stop-color="#00ff98"/><stop offset="0.5357" stop-color="#00ffff"/><stop offset="0.5852" stop-color="#18a0ff"/><stop offset="0.6131" stop-color="#2a64ff"/><stop offset="0.6536" stop-color="#3a12ff"/><stop offset="0.7006" stop-color="#a000ff"/><stop offset="0.7221" stop-color="#ff00ff"/><stop offset="0.7408" stop-color="#8c00a8"/><stop offset="0.7595" stop-color="#100030"/></linearGradient><linearGradient id="gTr26" gradientUnits="userSpaceOnUse" x1="-80" y1="0" x2="340" y2="0"><stop offset="0.3084" stop-color="#fde29a"/><stop offset="0.3386" stop-color="#f6bc66"/><stop offset="0.3608" stop-color="#ec7a2e"/><stop offset="0.3721" stop-color="#dd3c0a"/><stop offset="0.3976" stop-color="#d83a0a"/><stop offset="0.4112" stop-color="#b06004"/><stop offset="0.4331" stop-color="#7c8a00"/><stop offset="0.4505" stop-color="#0cf400"/><stop offset="0.5150" stop-color="#00ff00"/><stop offset="0.5293" stop-color="#00ff98"/><stop offset="0.5412" stop-color="#00ffff"/><stop offset="0.5886" stop-color="#18a0ff"/><stop offset="0.6159" stop-color="#2a64ff"/><stop offset="0.6586" stop-color="#3a12ff"/><stop offset="0.7064" stop-color="#a000ff"/><stop offset="0.7283" stop-color="#ff00ff"/><stop offset="0.7449" stop-color="#8c00a8"/><stop offset="0.7643" stop-color="#100030"/></linearGradient><linearGradient id="gTr27" gradientUnits="userSpaceOnUse" x1="-80" y1="0" x2="340" y2="0"><stop offset="0.3150" stop-color="#fde29a"/><stop offset="0.3449" stop-color="#f6bc66"/><stop offset="0.3674" stop-color="#ec7a2e"/><stop offset="0.3788" stop-color="#dd3c0a"/><stop offset="0.4048" stop-color="#d83a0a"/><stop offset="0.4179" stop-color="#b06004"/><stop offset="0.4395" stop-color="#7c8a00"/><stop offset="0.4568" stop-color="#0cf400"/><stop offset="0.5201" stop-color="#00ff00"/><stop offset="0.5344" stop-color="#00ff98"/><stop offset="0.5466" stop-color="#00ffff"/><stop offset="0.5919" stop-color="#18a0ff"/><stop offset="0.6187" stop-color="#2a64ff"/><stop offset="0.6638" stop-color="#3a12ff"/><stop offset="0.7111" stop-color="#a000ff"/><stop offset="0.7326" stop-color="#ff00ff"/><stop offset="0.7490" stop-color="#8c00a8"/><stop offset="0.7690" stop-color="#100030"/></linearGradient><linearGradient id="gTr28" gradientUnits="userSpaceOnUse" x1="-80" y1="0" x2="340" y2="0"><stop offset="0.3216" stop-color="#fde29a"/><stop offset="0.3511" stop-color="#f6bc66"/><stop offset="0.3740" stop-color="#ec7a2e"/><stop offset="0.3855" stop-color="#dd3c0a"/><stop offset="0.4119" stop-color="#d83a0a"/><stop offset="0.4247" stop-color="#b06004"/><stop offset="0.4459" stop-color="#7c8a00"/><stop offset="0.4630" stop-color="#0cf400"/><stop offset="0.5253" stop-color="#00ff00"/><stop offset="0.5396" stop-color="#00ff98"/><stop offset="0.5520" stop-color="#00ffff"/><stop offset="0.5952" stop-color="#18a0ff"/><stop offset="0.6215" stop-color="#2a64ff"/><stop offset="0.6690" stop-color="#3a12ff"/><stop offset="0.7158" stop-color="#a000ff"/><stop offset="0.7369" stop-color="#ff00ff"/><stop offset="0.7531" stop-color="#8c00a8"/><stop offset="0.7738" stop-color="#100030"/></linearGradient><linearGradient id="gTr29" gradientUnits="userSpaceOnUse" x1="-80" y1="0" x2="340" y2="0"><stop offset="0.3282" stop-color="#fde29a"/><stop offset="0.3573" stop-color="#f6bc66"/><stop offset="0.3806" stop-color="#ec7a2e"/><stop offset="0.3921" stop-color="#dd3c0a"/><stop offset="0.4190" stop-color="#d83a0a"/><stop offset="0.4315" stop-color="#b06004"/><stop offset="0.4523" stop-color="#7c8a00"/><stop offset="0.4692" stop-color="#0cf400"/><stop offset="0.5304" stop-color="#00ff00"/><stop offset="0.5447" stop-color="#00ff98"/><stop offset="0.5575" stop-color="#00ffff"/><stop offset="0.5986" stop-color="#18a0ff"/><stop offset="0.6243" stop-color="#2a64ff"/><stop offset="0.6742" stop-color="#3a12ff"/><stop offset="0.7205" stop-color="#a000ff"/><stop offset="0.7413" stop-color="#ff00ff"/><stop offset="0.7571" stop-color="#8c00a8"/><stop offset="0.7786" stop-color="#100030"/></linearGradient><linearGradient id="gTr30" gradientUnits="userSpaceOnUse" x1="-80" y1="0" x2="340" y2="0"><stop offset="0.3348" stop-color="#fde29a"/><stop offset="0.3636" stop-color="#f6bc66"/><stop offset="0.3872" stop-color="#ec7a2e"/><stop offset="0.3988" stop-color="#dd3c0a"/><stop offset="0.4262" stop-color="#d83a0a"/><stop offset="0.4383" stop-color="#b06004"/><stop offset="0.4587" stop-color="#7c8a00"/><stop offset="0.4755" stop-color="#0cf400"/><stop offset="0.5355" stop-color="#00ff00"/><stop offset="0.5498" stop-color="#00ff98"/><stop offset="0.5629" stop-color="#00ffff"/><stop offset="0.6019" stop-color="#18a0ff"/><stop offset="0.6271" stop-color="#2a64ff"/><stop offset="0.6794" stop-color="#3a12ff"/><stop offset="0.7252" stop-color="#a000ff"/><stop offset="0.7456" stop-color="#ff00ff"/><stop offset="0.7610" stop-color="#8c00a8"/><stop offset="0.7833" stop-color="#100030"/></linearGradient><linearGradient id="gTr31" gradientUnits="userSpaceOnUse" x1="-80" y1="0" x2="340" y2="0"><stop offset="0.3412" stop-color="#fde29a"/><stop offset="0.3690" stop-color="#f6bc66"/><stop offset="0.3917" stop-color="#ec7a2e"/><stop offset="0.4032" stop-color="#dd3c0a"/><stop offset="0.4306" stop-color="#d83a0a"/><stop offset="0.4428" stop-color="#b06004"/><stop offset="0.4626" stop-color="#7c8a00"/><stop offset="0.4791" stop-color="#0cf400"/><stop offset="0.5391" stop-color="#00ff00"/><stop offset="0.5532" stop-color="#00ff98"/><stop offset="0.5683" stop-color="#00ffff"/><stop offset="0.6052" stop-color="#18a0ff"/><stop offset="0.6298" stop-color="#2a64ff"/><stop offset="0.6847" stop-color="#3a12ff"/><stop offset="0.7299" stop-color="#a000ff"/><stop offset="0.7499" stop-color="#ff00ff"/><stop offset="0.7649" stop-color="#8c00a8"/><stop offset="0.7886" stop-color="#100030"/></linearGradient><linearGradient id="gTr32" gradientUnits="userSpaceOnUse" x1="-80" y1="0" x2="340" y2="0"><stop offset="0.3473" stop-color="#fde29a"/><stop offset="0.3738" stop-color="#f6bc66"/><stop offset="0.3940" stop-color="#ec7a2e"/><stop offset="0.4053" stop-color="#dd3c0a"/><stop offset="0.4323" stop-color="#d83a0a"/><stop offset="0.4450" stop-color="#b06004"/><stop offset="0.4639" stop-color="#7c8a00"/><stop offset="0.4801" stop-color="#0cf400"/><stop offset="0.5412" stop-color="#00ff00"/><stop offset="0.5549" stop-color="#00ff98"/><stop offset="0.5705" stop-color="#00ffff"/><stop offset="0.6086" stop-color="#18a0ff"/><stop offset="0.6326" stop-color="#2a64ff"/><stop offset="0.6899" stop-color="#3a12ff"/><stop offset="0.7345" stop-color="#a000ff"/><stop offset="0.7542" stop-color="#ff00ff"/><stop offset="0.7688" stop-color="#8c00a8"/><stop offset="0.7939" stop-color="#100030"/></linearGradient><linearGradient id="gTr33" gradientUnits="userSpaceOnUse" x1="-80" y1="0" x2="340" y2="0"><stop offset="0.3534" stop-color="#fde29a"/><stop offset="0.3786" stop-color="#f6bc66"/><stop offset="0.3964" stop-color="#ec7a2e"/><stop offset="0.4073" stop-color="#dd3c0a"/><stop offset="0.4340" stop-color="#d83a0a"/><stop offset="0.4472" stop-color="#b06004"/><stop offset="0.4653" stop-color="#7c8a00"/><stop offset="0.4811" stop-color="#0cf400"/><stop offset="0.5432" stop-color="#00ff00"/><stop offset="0.5566" stop-color="#00ff98"/><stop offset="0.5726" stop-color="#00ffff"/><stop offset="0.6119" stop-color="#18a0ff"/><stop offset="0.6366" stop-color="#2a64ff"/><stop offset="0.6933" stop-color="#3a12ff"/><stop offset="0.7379" stop-color="#a000ff"/><stop offset="0.7574" stop-color="#ff00ff"/><stop offset="0.7727" stop-color="#8c00a8"/><stop offset="0.7988" stop-color="#100030"/></linearGradient><linearGradient id="gTr34" gradientUnits="userSpaceOnUse" x1="-80" y1="0" x2="340" y2="0"><stop offset="0.3595" stop-color="#fde29a"/><stop offset="0.3833" stop-color="#f6bc66"/><stop offset="0.3988" stop-color="#ec7a2e"/><stop offset="0.4094" stop-color="#dd3c0a"/><stop offset="0.4357" stop-color="#d83a0a"/><stop offset="0.4494" stop-color="#b06004"/><stop offset="0.4667" stop-color="#7c8a00"/><stop offset="0.4821" stop-color="#0cf400"/><stop offset="0.5452" stop-color="#00ff00"/><stop offset="0.5583" stop-color="#00ff98"/><stop offset="0.5748" stop-color="#00ffff"/><stop offset="0.6152" stop-color="#18a0ff"/><stop offset="0.6409" stop-color="#2a64ff"/><stop offset="0.6962" stop-color="#3a12ff"/><stop offset="0.7408" stop-color="#a000ff"/><stop offset="0.7602" stop-color="#ff00ff"/><stop offset="0.7765" stop-color="#8c00a8"/><stop offset="0.8036" stop-color="#100030"/></linearGradient><linearGradient id="gTr35" gradientUnits="userSpaceOnUse" x1="-80" y1="0" x2="340" y2="0"><stop offset="0.3656" stop-color="#fde29a"/><stop offset="0.3881" stop-color="#f6bc66"/><stop offset="0.4012" stop-color="#ec7a2e"/><stop offset="0.4115" stop-color="#dd3c0a"/><stop offset="0.4374" stop-color="#d83a0a"/><stop offset="0.4516" stop-color="#b06004"/><stop offset="0.4680" stop-color="#7c8a00"/><stop offset="0.4832" stop-color="#0cf400"/><stop offset="0.5473" stop-color="#00ff00"/><stop offset="0.5600" stop-color="#00ff98"/><stop offset="0.5769" stop-color="#00ffff"/><stop offset="0.6186" stop-color="#18a0ff"/><stop offset="0.6452" stop-color="#2a64ff"/><stop offset="0.6990" stop-color="#3a12ff"/><stop offset="0.7437" stop-color="#a000ff"/><stop offset="0.7631" stop-color="#ff00ff"/><stop offset="0.7804" stop-color="#8c00a8"/><stop offset="0.8086" stop-color="#100030"/></linearGradient><linearGradient id="gTr36" gradientUnits="userSpaceOnUse" x1="-80" y1="0" x2="340" y2="0"><stop offset="0.3718" stop-color="#fde29a"/><stop offset="0.3929" stop-color="#f6bc66"/><stop offset="0.4036" stop-color="#ec7a2e"/><stop offset="0.4136" stop-color="#dd3c0a"/><stop offset="0.4391" stop-color="#d83a0a"/><stop offset="0.4538" stop-color="#b06004"/><stop offset="0.4694" stop-color="#7c8a00"/><stop offset="0.4842" stop-color="#0cf400"/><stop offset="0.5493" stop-color="#00ff00"/><stop offset="0.5617" stop-color="#00ff98"/><stop offset="0.5790" stop-color="#00ffff"/><stop offset="0.6219" stop-color="#18a0ff"/><stop offset="0.6495" stop-color="#2a64ff"/><stop offset="0.7019" stop-color="#3a12ff"/><stop offset="0.7466" stop-color="#a000ff"/><stop offset="0.7660" stop-color="#ff00ff"/><stop offset="0.7838" stop-color="#8c00a8"/><stop offset="0.8137" stop-color="#100030"/></linearGradient><linearGradient id="gTr37" gradientUnits="userSpaceOnUse" x1="-80" y1="0" x2="340" y2="0"><stop offset="0.3779" stop-color="#fde29a"/><stop offset="0.3976" stop-color="#f6bc66"/><stop offset="0.4060" stop-color="#ec7a2e"/><stop offset="0.4156" stop-color="#dd3c0a"/><stop offset="0.4408" stop-color="#d83a0a"/><stop offset="0.4560" stop-color="#b06004"/><stop offset="0.4707" stop-color="#7c8a00"/><stop offset="0.4852" stop-color="#0cf400"/><stop offset="0.5514" stop-color="#00ff00"/><stop offset="0.5634" stop-color="#00ff98"/><stop offset="0.5812" stop-color="#00ffff"/><stop offset="0.6252" stop-color="#18a0ff"/><stop offset="0.6538" stop-color="#2a64ff"/><stop offset="0.7048" stop-color="#3a12ff"/><stop offset="0.7495" stop-color="#a000ff"/><stop offset="0.7688" stop-color="#ff00ff"/><stop offset="0.7858" stop-color="#8c00a8"/><stop offset="0.8187" stop-color="#100030"/></linearGradient><linearGradient id="gTr38" gradientUnits="userSpaceOnUse" x1="-80" y1="0" x2="340" y2="0"><stop offset="0.3840" stop-color="#fde29a"/><stop offset="0.4024" stop-color="#f6bc66"/><stop offset="0.4083" stop-color="#ec7a2e"/><stop offset="0.4209" stop-color="#dd3c0a"/><stop offset="0.4447" stop-color="#d83a0a"/><stop offset="0.4599" stop-color="#b06004"/><stop offset="0.4742" stop-color="#7c8a00"/><stop offset="0.4885" stop-color="#0cf400"/><stop offset="0.5540" stop-color="#00ff00"/><stop offset="0.5659" stop-color="#00ff98"/><stop offset="0.5833" stop-color="#00ffff"/><stop offset="0.6286" stop-color="#18a0ff"/><stop offset="0.6581" stop-color="#2a64ff"/><stop offset="0.7076" stop-color="#3a12ff"/><stop offset="0.7523" stop-color="#a000ff"/><stop offset="0.7717" stop-color="#ff00ff"/><stop offset="0.7877" stop-color="#8c00a8"/><stop offset="0.8238" stop-color="#100030"/></linearGradient><linearGradient id="gTr39" gradientUnits="userSpaceOnUse" x1="-80" y1="0" x2="340" y2="0"><stop offset="0.3901" stop-color="#fde29a"/><stop offset="0.4071" stop-color="#f6bc66"/><stop offset="0.4107" stop-color="#ec7a2e"/><stop offset="0.4293" stop-color="#dd3c0a"/><stop offset="0.4507" stop-color="#d83a0a"/><stop offset="0.4654" stop-color="#b06004"/><stop offset="0.4797" stop-color="#7c8a00"/><stop offset="0.4940" stop-color="#0cf400"/><stop offset="0.5573" stop-color="#00ff00"/><stop offset="0.5692" stop-color="#00ff98"/><stop offset="0.5877" stop-color="#00ffff"/><stop offset="0.6310" stop-color="#18a0ff"/><stop offset="0.6624" stop-color="#2a64ff"/><stop offset="0.7105" stop-color="#3a12ff"/><stop offset="0.7552" stop-color="#a000ff"/><stop offset="0.7745" stop-color="#ff00ff"/><stop offset="0.7896" stop-color="#8c00a8"/><stop offset="0.8278" stop-color="#100030"/></linearGradient><linearGradient id="gTr40" gradientUnits="userSpaceOnUse" x1="-80" y1="0" x2="340" y2="0"><stop offset="0.3963" stop-color="#fde29a"/><stop offset="0.4119" stop-color="#f6bc66"/><stop offset="0.4133" stop-color="#ec7a2e"/><stop offset="0.4377" stop-color="#dd3c0a"/><stop offset="0.4568" stop-color="#d83a0a"/><stop offset="0.4709" stop-color="#b06004"/><stop offset="0.4852" stop-color="#7c8a00"/><stop offset="0.4995" stop-color="#0cf400"/><stop offset="0.5606" stop-color="#00ff00"/><stop offset="0.5725" stop-color="#00ff98"/><stop offset="0.5921" stop-color="#00ffff"/><stop offset="0.6333" stop-color="#18a0ff"/><stop offset="0.6656" stop-color="#2a64ff"/><stop offset="0.7124" stop-color="#3a12ff"/><stop offset="0.7572" stop-color="#a000ff"/><stop offset="0.7771" stop-color="#ff00ff"/><stop offset="0.7916" stop-color="#8c00a8"/><stop offset="0.8317" stop-color="#100030"/></linearGradient><linearGradient id="gTr41" gradientUnits="userSpaceOnUse" x1="-80" y1="0" x2="340" y2="0"><stop offset="0.4024" stop-color="#fde29a"/><stop offset="0.4167" stop-color="#f6bc66"/><stop offset="0.4181" stop-color="#ec7a2e"/><stop offset="0.4462" stop-color="#dd3c0a"/><stop offset="0.4628" stop-color="#d83a0a"/><stop offset="0.4764" stop-color="#b06004"/><stop offset="0.4907" stop-color="#7c8a00"/><stop offset="0.5049" stop-color="#0cf400"/><stop offset="0.5639" stop-color="#00ff00"/><stop offset="0.5758" stop-color="#00ff98"/><stop offset="0.5964" stop-color="#00ffff"/><stop offset="0.6357" stop-color="#18a0ff"/><stop offset="0.6689" stop-color="#2a64ff"/><stop offset="0.7143" stop-color="#3a12ff"/><stop offset="0.7591" stop-color="#a000ff"/><stop offset="0.7797" stop-color="#ff00ff"/><stop offset="0.7935" stop-color="#8c00a8"/><stop offset="0.8357" stop-color="#100030"/></linearGradient><linearGradient id="gTr42" gradientUnits="userSpaceOnUse" x1="-80" y1="0" x2="340" y2="0"><stop offset="0.4085" stop-color="#fde29a"/><stop offset="0.4214" stop-color="#f6bc66"/><stop offset="0.4229" stop-color="#ec7a2e"/><stop offset="0.4546" stop-color="#dd3c0a"/><stop offset="0.4689" stop-color="#d83a0a"/><stop offset="0.4819" stop-color="#b06004"/><stop offset="0.4962" stop-color="#7c8a00"/><stop offset="0.5104" stop-color="#0cf400"/><stop offset="0.5672" stop-color="#00ff00"/><stop offset="0.5791" stop-color="#00ff98"/><stop offset="0.6008" stop-color="#00ffff"/><stop offset="0.6381" stop-color="#18a0ff"/><stop offset="0.6721" stop-color="#2a64ff"/><stop offset="0.7162" stop-color="#3a12ff"/><stop offset="0.7611" stop-color="#a000ff"/><stop offset="0.7822" stop-color="#ff00ff"/><stop offset="0.7955" stop-color="#8c00a8"/><stop offset="0.8397" stop-color="#100030"/></linearGradient><linearGradient id="gTr43" gradientUnits="userSpaceOnUse" x1="-80" y1="0" x2="340" y2="0"><stop offset="0.4146" stop-color="#fde29a"/><stop offset="0.4262" stop-color="#f6bc66"/><stop offset="0.4276" stop-color="#ec7a2e"/><stop offset="0.4630" stop-color="#dd3c0a"/><stop offset="0.4749" stop-color="#d83a0a"/><stop offset="0.4874" stop-color="#b06004"/><stop offset="0.5016" stop-color="#7c8a00"/><stop offset="0.5159" stop-color="#0cf400"/><stop offset="0.5705" stop-color="#00ff00"/><stop offset="0.5824" stop-color="#00ff98"/><stop offset="0.6052" stop-color="#00ffff"/><stop offset="0.6405" stop-color="#18a0ff"/><stop offset="0.6753" stop-color="#2a64ff"/><stop offset="0.7181" stop-color="#3a12ff"/><stop offset="0.7630" stop-color="#a000ff"/><stop offset="0.7848" stop-color="#ff00ff"/><stop offset="0.7973" stop-color="#8c00a8"/><stop offset="0.8437" stop-color="#100030"/></linearGradient><linearGradient id="gTr44" gradientUnits="userSpaceOnUse" x1="-80" y1="0" x2="340" y2="0"><stop offset="0.4207" stop-color="#fde29a"/><stop offset="0.4310" stop-color="#f6bc66"/><stop offset="0.4324" stop-color="#ec7a2e"/><stop offset="0.4714" stop-color="#dd3c0a"/><stop offset="0.4810" stop-color="#d83a0a"/><stop offset="0.4929" stop-color="#b06004"/><stop offset="0.5071" stop-color="#7c8a00"/><stop offset="0.5214" stop-color="#0cf400"/><stop offset="0.5738" stop-color="#00ff00"/><stop offset="0.5857" stop-color="#00ff98"/><stop offset="0.6095" stop-color="#00ffff"/><stop offset="0.6429" stop-color="#18a0ff"/><stop offset="0.6786" stop-color="#2a64ff"/><stop offset="0.7200" stop-color="#3a12ff"/><stop offset="0.7650" stop-color="#a000ff"/><stop offset="0.7874" stop-color="#ff00ff"/><stop offset="0.7990" stop-color="#8c00a8"/><stop offset="0.8476" stop-color="#100030"/></linearGradient><linearGradient id="gTr45" gradientUnits="userSpaceOnUse" x1="-80" y1="0" x2="340" y2="0"><stop offset="0.4269" stop-color="#fde29a"/><stop offset="0.4357" stop-color="#f6bc66"/><stop offset="0.4371" stop-color="#ec7a2e"/><stop offset="0.4799" stop-color="#dd3c0a"/><stop offset="0.4870" stop-color="#d83a0a"/><stop offset="0.4984" stop-color="#b06004"/><stop offset="0.5126" stop-color="#7c8a00"/><stop offset="0.5269" stop-color="#0cf400"/><stop offset="0.5771" stop-color="#00ff00"/><stop offset="0.5890" stop-color="#00ff98"/><stop offset="0.6139" stop-color="#00ffff"/><stop offset="0.6452" stop-color="#18a0ff"/><stop offset="0.6818" stop-color="#2a64ff"/><stop offset="0.7219" stop-color="#3a12ff"/><stop offset="0.7670" stop-color="#a000ff"/><stop offset="0.7900" stop-color="#ff00ff"/><stop offset="0.8007" stop-color="#8c00a8"/><stop offset="0.8516" stop-color="#100030"/></linearGradient><linearGradient id="gTr46" gradientUnits="userSpaceOnUse" x1="-80" y1="0" x2="340" y2="0"><stop offset="0.4330" stop-color="#fde29a"/><stop offset="0.4405" stop-color="#f6bc66"/><stop offset="0.4419" stop-color="#ec7a2e"/><stop offset="0.4883" stop-color="#dd3c0a"/><stop offset="0.4930" stop-color="#d83a0a"/><stop offset="0.5038" stop-color="#b06004"/><stop offset="0.5181" stop-color="#7c8a00"/><stop offset="0.5324" stop-color="#0cf400"/><stop offset="0.5804" stop-color="#00ff00"/><stop offset="0.5923" stop-color="#00ff98"/><stop offset="0.6183" stop-color="#00ffff"/><stop offset="0.6476" stop-color="#18a0ff"/><stop offset="0.6850" stop-color="#2a64ff"/><stop offset="0.7238" stop-color="#3a12ff"/><stop offset="0.7689" stop-color="#a000ff"/><stop offset="0.7925" stop-color="#ff00ff"/><stop offset="0.8024" stop-color="#8c00a8"/><stop offset="0.8556" stop-color="#100030"/></linearGradient><linearGradient id="gTr47" gradientUnits="userSpaceOnUse" x1="-80" y1="0" x2="340" y2="0"><stop offset="0.4391" stop-color="#fde29a"/><stop offset="0.4452" stop-color="#f6bc66"/><stop offset="0.4467" stop-color="#ec7a2e"/><stop offset="0.4967" stop-color="#dd3c0a"/><stop offset="0.4991" stop-color="#d83a0a"/><stop offset="0.5093" stop-color="#b06004"/><stop offset="0.5236" stop-color="#7c8a00"/><stop offset="0.5379" stop-color="#0cf400"/><stop offset="0.5837" stop-color="#00ff00"/><stop offset="0.5956" stop-color="#00ff98"/><stop offset="0.6226" stop-color="#00ffff"/><stop offset="0.6500" stop-color="#18a0ff"/><stop offset="0.6883" stop-color="#2a64ff"/><stop offset="0.7257" stop-color="#3a12ff"/><stop offset="0.7709" stop-color="#a000ff"/><stop offset="0.7951" stop-color="#ff00ff"/><stop offset="0.8041" stop-color="#8c00a8"/><stop offset="0.8595" stop-color="#100030"/></linearGradient></defs><g clip-path="url(#cpgT)"><g filter="url(#vbgT)"><rect x="-4" y="45.5" width="266" height="5" fill="url(#gTr0)"/><rect x="-4" y="49.5" width="266" height="5" fill="url(#gTr1)"/><rect x="-4" y="53.5" width="266" height="5" fill="url(#gTr2)"/><rect x="-4" y="57.5" width="266" height="5" fill="url(#gTr3)"/><rect x="-4" y="61.5" width="266" height="5" fill="url(#gTr4)"/><rect x="-4" y="65.5" width="266" height="5" fill="url(#gTr5)"/><rect x="-4" y="69.5" width="266" height="5" fill="url(#gTr6)"/><rect x="-4" y="73.5" width="266" height="5" fill="url(#gTr7)"/><rect x="-4" y="77.5" width="266" height="5" fill="url(#gTr8)"/><rect x="-4" y="81.5" width="266" height="5" fill="url(#gTr9)"/><rect x="-4" y="85.5" width="266" height="5" fill="url(#gTr10)"/><rect x="-4" y="89.5" width="266" height="5" fill="url(#gTr11)"/><rect x="-4" y="93.5" width="266" height="5" fill="url(#gTr12)"/><rect x="-4" y="97.5" width="266" height="5" fill="url(#gTr13)"/><rect x="-4" y="101.5" width="266" height="5" fill="url(#gTr14)"/><rect x="-4" y="105.5" width="266" height="5" fill="url(#gTr15)"/><rect x="-4" y="109.5" width="266" height="5" fill="url(#gTr16)"/><rect x="-4" y="113.5" width="266" height="5" fill="url(#gTr17)"/><rect x="-4" y="117.5" width="266" height="5" fill="url(#gTr18)"/><rect x="-4" y="121.5" width="266" height="5" fill="url(#gTr19)"/><rect x="-4" y="125.5" width="266" height="5" fill="url(#gTr20)"/><rect x="-4" y="129.5" width="266" height="5" fill="url(#gTr21)"/><rect x="-4" y="133.5" width="266" height="5" fill="url(#gTr22)"/><rect x="-4" y="137.5" width="266" height="5" fill="url(#gTr23)"/><rect x="-4" y="141.5" width="266" height="5" fill="url(#gTr24)"/><rect x="-4" y="145.5" width="266" height="5" fill="url(#gTr25)"/><rect x="-4" y="149.5" width="266" height="5" fill="url(#gTr26)"/><rect x="-4" y="153.5" width="266" height="5" fill="url(#gTr27)"/><rect x="-4" y="157.5" width="266" height="5" fill="url(#gTr28)"/><rect x="-4" y="161.5" width="266" height="5" fill="url(#gTr29)"/><rect x="-4" y="165.5" width="266" height="5" fill="url(#gTr30)"/><rect x="-4" y="169.5" width="266" height="5" fill="url(#gTr31)"/><rect x="-4" y="173.5" width="266" height="5" fill="url(#gTr32)"/><rect x="-4" y="177.5" width="266" height="5" fill="url(#gTr33)"/><rect x="-4" y="181.5" width="266" height="5" fill="url(#gTr34)"/><rect x="-4" y="185.5" width="266" height="5" fill="url(#gTr35)"/><rect x="-4" y="189.5" width="266" height="5" fill="url(#gTr36)"/><rect x="-4" y="193.5" width="266" height="5" fill="url(#gTr37)"/><rect x="-4" y="197.5" width="266" height="5" fill="url(#gTr38)"/><rect x="-4" y="201.5" width="266" height="5" fill="url(#gTr39)"/><rect x="-4" y="205.5" width="266" height="5" fill="url(#gTr40)"/><rect x="-4" y="209.5" width="266" height="5" fill="url(#gTr41)"/><rect x="-4" y="213.5" width="266" height="5" fill="url(#gTr42)"/><rect x="-4" y="217.5" width="266" height="5" fill="url(#gTr43)"/><rect x="-4" y="221.5" width="266" height="5" fill="url(#gTr44)"/><rect x="-4" y="225.5" width="266" height="5" fill="url(#gTr45)"/><rect x="-4" y="229.5" width="266" height="5" fill="url(#gTr46)"/><rect x="-4" y="233.5" width="266" height="5" fill="url(#gTr47)"/></g><g filter="url(#b2gT)"><path d="M11 90 L31 92 L30 107 L22 113 L14 107 Z" fill="#dc3c0a"/><ellipse cx="36" cy="113" rx="8" ry="4.5" transform="rotate(25 36 113)" fill="#e8782e"/><path d="M16 51 L46 53 L62 62 L56 70 L40 62 L20 58 Z" fill="#8a7a00"/></g></g></svg>
<div style="left:263px;top:450px;width:257px;height:254px;background:#fff;"></div>
<svg style="left:263px;top:450px;overflow:hidden" width="257" height="254" viewBox="0 0 257 254"><defs><clipPath id="cpgV"><path d="M16.2 50.2C19.9 49.0 26.7 49.7 31.7 50.2C36.7 50.7 40.8 51.1 46.0 53.1C51.2 55.1 57.9 60.2 62.9 62.2C67.9 64.2 69.4 62.6 75.9 65.3C82.4 68.0 95.3 75.7 101.8 78.3C108.3 80.9 107.0 79.1 114.8 80.9C122.6 82.7 138.7 85.5 148.6 89.2C158.5 92.9 165.8 98.2 174.5 102.9C183.2 107.6 191.8 110.9 200.5 117.2C209.2 123.5 218.7 133.5 226.5 140.6C234.3 147.7 242.4 155.2 247.2 160.0C251.9 164.8 253.1 166.3 255.0 169.1C256.9 171.9 257.9 168.2 258.5 177.0C259.1 185.8 259.8 213.1 258.5 222.0C257.2 230.9 255.0 228.7 250.5 230.6C246.0 232.5 241.2 232.6 231.6 233.2C222.0 233.8 205.7 233.9 192.7 234.0C179.7 234.1 162.9 234.9 153.8 234.0C144.7 233.1 145.1 231.8 138.2 228.8C131.3 225.8 120.0 220.2 112.2 215.9C104.4 211.6 98.0 207.2 91.5 202.9C85.0 198.6 78.3 194.7 73.3 189.9C68.3 185.1 64.8 180.4 61.6 174.3C58.4 168.2 56.2 158.7 53.8 153.5C51.4 148.3 50.5 146.2 47.3 143.2C44.0 140.2 39.5 137.3 34.3 135.4C29.1 133.5 21.2 132.8 16.2 131.5C11.2 130.2 7.0 130.0 4.5 127.6C2.0 125.2 1.5 122.0 1.1 117.2C0.7 112.4 1.3 105.9 1.9 99.0C2.5 92.1 3.2 82.6 4.5 75.7C5.8 68.8 7.7 61.8 9.7 57.5C11.6 53.2 12.5 51.4 16.2 50.2Z"/></clipPath><filter id="b2gV" x="-30%" y="-30%" width="160%" height="160%"><feGaussianBlur stdDeviation="2"/></filter><filter id="b4gV" x="-30%" y="-30%" width="160%" height="160%"><feGaussianBlur stdDeviation="4"/></filter><filter id="b7gV" x="-30%" y="-30%" width="160%" height="160%"><feGaussianBlur stdDeviation="7"/></filter><radialGradient id="gVo" cx="0.5" cy="0.5" r="0.5"><stop offset="0" stop-color="#7c8a00"/><stop offset="0.24" stop-color="#7c8a00"/><stop offset="0.32" stop-color="#10f000"/><stop offset="0.60" stop-color="#00ff00"/><stop offset="0.655" stop-color="#00ff98"/><stop offset="0.70" stop-color="#00ffff"/><stop offset="0.76" stop-color="#00f4ff"/><stop offset="0.85" stop-color="#10bcff" stop-opacity="0.9"/><stop offset="1" stop-color="#18a0ff" stop-opacity="0"/></radialGradient><radialGradient id="gVc" cx="0.5" cy="0.5" r="0.5" fx="0.5" fy="0.34"><stop offset="0" stop-color="#ffffe8"/><stop offset="0.1" stop-color="#fff6c8"/><stop offset="0.42" stop-color="#f8c068"/><stop offset="0.56" stop-color="#ec7a2e"/><stop offset="0.64" stop-color="#dd3c0a"/><stop offset="0.77" stop-color="#d83a0a"/><stop offset="0.88" stop-color="#a86a04"/><stop offset="1" stop-color="#7c8a00" stop-opacity="0"/></radialGradient><radialGradient id="gVg" cx="0.5" cy="0.5" r="0.5" fx="0.22" fy="0.48"><stop offset="0" stop-color="#00ff00"/><stop offset="0.32" stop-color="#00ff10"/><stop offset="0.45" stop-color="#00ff98"/><stop offset="0.58" stop-color="#00ffff"/><stop offset="0.7" stop-color="#00f0ff"/><stop offset="0.88" stop-color="#14b0ff" stop-opacity="0.8"/><stop offset="1" stop-color="#1c8cff" stop-opacity="0"/></radialGradient><radialGradient id="gVm" cx="0.5" cy="0.5" r="0.5" fx="0.47" fy="0.4"><stop offset="0" stop-color="#0c0018"/><stop offset="0.06" stop-color="#2a0040"/><stop offset="0.12" stop-color="#c800d0"/><stop offset="0.2" stop-color="#ff00ff"/><stop offset="0.29" stop-color="#f400ff"/><stop offset="0.42" stop-color="#a000ff"/><stop offset="0.56" stop-color="#5a00ff"/><stop offset="0.76" stop-color="#3a1cff"/><stop offset="1" stop-color="#2a50ff" stop-opacity="0"/></radialGradient></defs><g clip-path="url(#cpgV)"><rect x="0" y="0" width="257" height="254" fill="#1c8cff"/><g filter="url(#b7gV)"><ellipse cx="134" cy="134" rx="34" ry="60" transform="rotate(-24 134 134)" fill="#2a5cff"/><ellipse cx="207" cy="222" rx="60" ry="27" fill="#2a5cff"/><ellipse cx="5" cy="114" rx="9" ry="20" fill="#2a5cff"/></g><g filter="url(#b4gV)"><ellipse cx="132" cy="120" rx="20" ry="42" transform="rotate(-18 132 120)" fill="#3a20ff"/><ellipse cx="208" cy="222" rx="46" ry="18" fill="#3a12ff"/><ellipse cx="176.5" cy="176" rx="3" ry="24" fill="#12b0ff"/><path d="M184 152 L240 156 L258 180 L258 196 L200 182 Z" fill="#18a4ff"/></g><g filter="url(#b2gV)"><ellipse cx="204" cy="226" rx="14" ry="6.5" fill="#5400ff"/></g><ellipse cx="198" cy="120" rx="62" ry="40" transform="rotate(10 198 120)" fill="url(#gVg)"/><ellipse cx="68" cy="156.8" rx="98" ry="51.7" transform="rotate(63 68 156.8)" fill="url(#gVo)"/><g filter="url(#b4gV)"><path d="M10 48 L48 50 L55 72 L56 92 L44 100 L30 108 L24 134 L18 134 L16 104 L8 94 Z" fill="#00f4ff"/></g><ellipse cx="67" cy="165" rx="21.5" ry="31" transform="rotate(-8 67 165)" fill="url(#gVc)"/><ellipse cx="133" cy="148" rx="30" ry="42" transform="rotate(-18 133 148)" fill="url(#gVm)"/></g></svg>
<div style="left:785px;top:450px;width:257px;height:254px;background:#fff;"></div>
<svg style="left:785px;top:450px;overflow:hidden" width="257" height="254" viewBox="0 0 257 254"><defs><clipPath id="cpgD"><path d="M16.2 50.2C19.9 49.0 26.7 49.7 31.7 50.2C36.7 50.7 40.8 51.1 46.0 53.1C51.2 55.1 57.9 60.2 62.9 62.2C67.9 64.2 69.4 62.6 75.9 65.3C82.4 68.0 95.3 75.7 101.8 78.3C108.3 80.9 107.0 79.1 114.8 80.9C122.6 82.7 138.7 85.5 148.6 89.2C158.5 92.9 165.8 98.2 174.5 102.9C183.2 107.6 191.8 110.9 200.5 117.2C209.2 123.5 218.7 133.5 226.5 140.6C234.3 147.7 242.4 155.2 247.2 160.0C251.9 164.8 253.1 166.3 255.0 169.1C256.9 171.9 257.9 168.2 258.5 177.0C259.1 185.8 259.8 213.1 258.5 222.0C257.2 230.9 255.0 228.7 250.5 230.6C246.0 232.5 241.2 232.6 231.6 233.2C222.0 233.8 205.7 233.9 192.7 234.0C179.7 234.1 162.9 234.9 153.8 234.0C144.7 233.1 145.1 231.8 138.2 228.8C131.3 225.8 120.0 220.2 112.2 215.9C104.4 211.6 98.0 207.2 91.5 202.9C85.0 198.6 78.3 194.7 73.3 189.9C68.3 185.1 64.8 180.4 61.6 174.3C58.4 168.2 56.2 158.7 53.8 153.5C51.4 148.3 50.5 146.2 47.3 143.2C44.0 140.2 39.5 137.3 34.3 135.4C29.1 133.5 21.2 132.8 16.2 131.5C11.2 130.2 7.0 130.0 4.5 127.6C2.0 125.2 1.5 122.0 1.1 117.2C0.7 112.4 1.3 105.9 1.9 99.0C2.5 92.1 3.2 82.6 4.5 75.7C5.8 68.8 7.7 61.8 9.7 57.5C11.6 53.2 12.5 51.4 16.2 50.2Z"/></clipPath><filter id="b2gD" x="-30%" y="-30%" width="160%" height="160%"><feGaussianBlur stdDeviation="2"/></filter><filter id="b4gD" x="-30%" y="-30%" width="160%" height="160%"><feGaussianBlur stdDeviation="4"/></filter><filter id="b7gD" x="-30%" y="-30%" width="160%" height="160%"><feGaussianBlur stdDeviation="7"/></filter><filter id="vbgD" x="-5%" y="-5%" width="110%" height="110%"><feGaussianBlur stdDeviation="1.2 2.2"/></filter><linearGradient id="gDr0" gradientUnits="userSpaceOnUse" x1="-80" y1="0" x2="340" y2="0"><stop offset="0.0176" stop-color="#ff00ff"/><stop offset="0.0908" stop-color="#ff00ff"/><stop offset="0.1667" stop-color="#9000ff"/><stop offset="0.2601" stop-color="#3a12ff"/><stop offset="0.3168" stop-color="#2a64ff"/><stop offset="0.3355" stop-color="#18a0ff"/><stop offset="0.3772" stop-color="#00ffff"/><stop offset="0.3861" stop-color="#00fff0"/><stop offset="0.3875" stop-color="#00ff98"/><stop offset="0.3889" stop-color="#00ff00"/><stop offset="0.3904" stop-color="#0cf400"/><stop offset="0.6636" stop-color="#7c8a00"/><stop offset="0.6802" stop-color="#dd3c0a"/><stop offset="0.6816" stop-color="#dc4010"/><stop offset="0.6831" stop-color="#ec7a2e"/><stop offset="0.7626" stop-color="#f8c068"/><stop offset="0.8668" stop-color="#fff0b0"/></linearGradient><linearGradient id="gDr1" gradientUnits="userSpaceOnUse" x1="-80" y1="0" x2="340" y2="0"><stop offset="0.0264" stop-color="#ff00ff"/><stop offset="0.0982" stop-color="#ff00ff"/><stop offset="0.1762" stop-color="#9000ff"/><stop offset="0.2615" stop-color="#3a12ff"/><stop offset="0.3205" stop-color="#2a64ff"/><stop offset="0.3414" stop-color="#18a0ff"/><stop offset="0.3844" stop-color="#00ffff"/><stop offset="0.3934" stop-color="#00fff0"/><stop offset="0.3948" stop-color="#00ff98"/><stop offset="0.3963" stop-color="#00ff00"/><stop offset="0.4026" stop-color="#0cf400"/><stop offset="0.6628" stop-color="#7c8a00"/><stop offset="0.6795" stop-color="#dd3c0a"/><stop offset="0.6809" stop-color="#dc4010"/><stop offset="0.6823" stop-color="#ec7a2e"/><stop offset="0.7634" stop-color="#f8c068"/><stop offset="0.8647" stop-color="#fff0b0"/></linearGradient><linearGradient id="gDr2" gradientUnits="userSpaceOnUse" x1="-80" y1="0" x2="340" y2="0"><stop offset="0.0352" stop-color="#ff00ff"/><stop offset="0.1055" stop-color="#ff00ff"/><stop offset="0.1857" stop-color="#9000ff"/><stop offset="0.2630" stop-color="#3a12ff"/><stop offset="0.3242" stop-color="#2a64ff"/><stop offset="0.3473" stop-color="#18a0ff"/><stop offset="0.3916" stop-color="#00ffff"/><stop offset="0.4007" stop-color="#00fff0"/><stop offset="0.4022" stop-color="#00ff98"/><stop offset="0.4036" stop-color="#00ff00"/><stop offset="0.4158" stop-color="#0cf400"/><stop offset="0.6621" stop-color="#7c8a00"/><stop offset="0.6788" stop-color="#dd3c0a"/><stop offset="0.6802" stop-color="#dc4010"/><stop offset="0.6816" stop-color="#ec7a2e"/><stop offset="0.7641" stop-color="#f8c068"/><stop offset="0.8625" stop-color="#fff0b0"/></linearGradient><linearGradient id="gDr3" gradientUnits="userSpaceOnUse" x1="-80" y1="0" x2="340" y2="0"><stop offset="0.0440" stop-color="#ff00ff"/><stop offset="0.1128" stop-color="#ff00ff"/><stop offset="0.1952" stop-color="#9000ff"/><stop offset="0.2645" stop-color="#3a12ff"/><stop offset="0.3278" stop-color="#2a64ff"/><stop offset="0.3531" stop-color="#18a0ff"/><stop offset="0.3988" stop-color="#00ffff"/><stop offset="0.4081" stop-color="#00fff0"/><stop offset="0.4095" stop-color="#00ff98"/><stop offset="0.4109" stop-color="#00ff00"/><stop offset="0.4289" stop-color="#0cf400"/><stop offset="0.6614" stop-color="#7c8a00"/><stop offset="0.6780" stop-color="#dd3c0a"/><stop offset="0.6795" stop-color="#dc4010"/><stop offset="0.6809" stop-color="#ec7a2e"/><stop offset="0.7648" stop-color="#f8c068"/><stop offset="0.8603" stop-color="#fff0b0"/></linearGradient><linearGradient id="gDr4" gradientUnits="userSpaceOnUse" x1="-80" y1="0" x2="340" y2="0"><stop offset="0.0527" stop-color="#ff00ff"/><stop offset="0.1201" stop-color="#ff00ff"/><stop offset="0.2048" stop-color="#9000ff"/><stop offset="0.2659" stop-color="#3a12ff"/><stop offset="0.3315" stop-color="#2a64ff"/><stop offset="0.3590" stop-color="#18a0ff"/><stop offset="0.4059" stop-color="#00ffff"/><stop offset="0.4154" stop-color="#00fff0"/><stop offset="0.4168" stop-color="#00ff98"/><stop offset="0.4182" stop-color="#00ff00"/><stop offset="0.4421" stop-color="#0cf400"/><stop offset="0.6606" stop-color="#7c8a00"/><stop offset="0.6773" stop-color="#dd3c0a"/><stop offset="0.6787" stop-color="#dc4010"/><stop offset="0.6801" stop-color="#ec7a2e"/><stop offset="0.7656" stop-color="#f8c068"/><stop offset="0.8581" stop-color="#fff0b0"/></linearGradient><linearGradient id="gDr5" gradientUnits="userSpaceOnUse" x1="-80" y1="0" x2="340" y2="0"><stop offset="0.0615" stop-color="#ff00ff"/><stop offset="0.1275" stop-color="#ff00ff"/><stop offset="0.2099" stop-color="#9000ff"/><stop offset="0.2681" stop-color="#3a12ff"/><stop offset="0.3352" stop-color="#2a64ff"/><stop offset="0.3648" stop-color="#18a0ff"/><stop offset="0.4131" stop-color="#00ffff"/><stop offset="0.4227" stop-color="#00fff0"/><stop offset="0.4241" stop-color="#00ff98"/><stop offset="0.4274" stop-color="#00ff00"/><stop offset="0.4553" stop-color="#0cf400"/><stop offset="0.6599" stop-color="#7c8a00"/><stop offset="0.6766" stop-color="#dd3c0a"/><stop offset="0.6780" stop-color="#dc4010"/><stop offset="0.6794" stop-color="#ec7a2e"/><stop offset="0.7663" stop-color="#f8c068"/><stop offset="0.8559" stop-color="#fff0b0"/></linearGradient><linearGradient id="gDr6" gradientUnits="userSpaceOnUse" x1="-80" y1="0" x2="340" y2="0"><stop offset="0.0703" stop-color="#ff00ff"/><stop offset="0.1348" stop-color="#ff00ff"/><stop offset="0.2106" stop-color="#9000ff"/><stop offset="0.2711" stop-color="#3a12ff"/><stop offset="0.3388" stop-color="#2a64ff"/><stop offset="0.3707" stop-color="#18a0ff"/><stop offset="0.4203" stop-color="#00ffff"/><stop offset="0.4300" stop-color="#00fff0"/><stop offset="0.4315" stop-color="#00ff98"/><stop offset="0.4395" stop-color="#00ff00"/><stop offset="0.4685" stop-color="#0cf400"/><stop offset="0.6592" stop-color="#7c8a00"/><stop offset="0.6758" stop-color="#dd3c0a"/><stop offset="0.6773" stop-color="#dc4010"/><stop offset="0.6787" stop-color="#ec7a2e"/><stop offset="0.7670" stop-color="#f8c068"/><stop offset="0.8537" stop-color="#fff0b0"/></linearGradient><linearGradient id="gDr7" gradientUnits="userSpaceOnUse" x1="-80" y1="0" x2="340" y2="0"><stop offset="0.0791" stop-color="#ff00ff"/><stop offset="0.1421" stop-color="#ff00ff"/><stop offset="0.2114" stop-color="#9000ff"/><stop offset="0.2740" stop-color="#3a12ff"/><stop offset="0.3425" stop-color="#2a64ff"/><stop offset="0.3766" stop-color="#18a0ff"/><stop offset="0.4275" stop-color="#00ffff"/><stop offset="0.4374" stop-color="#00fff0"/><stop offset="0.4388" stop-color="#00ff98"/><stop offset="0.4516" stop-color="#00ff00"/><stop offset="0.4817" stop-color="#0cf400"/><stop offset="0.6584" stop-color="#7c8a00"/><stop offset="0.6751" stop-color="#dd3c0a"/><stop offset="0.6765" stop-color="#dc4010"/><stop offset="0.6779" stop-color="#ec7a2e"/><stop offset="0.7678" stop-color="#f8c068"/><stop offset="0.8515" stop-color="#fff0b0"/></linearGradient><linearGradient id="gDr8" gradientUnits="userSpaceOnUse" x1="-80" y1="0" x2="340" y2="0"><stop offset="0.0879" stop-color="#ff00ff"/><stop offset="0.1495" stop-color="#ff00ff"/><stop offset="0.2125" stop-color="#9000ff"/><stop offset="0.2773" stop-color="#3a12ff"/><stop offset="0.3461" stop-color="#2a64ff"/><stop offset="0.3828" stop-color="#18a0ff"/><stop offset="0.4347" stop-color="#00ffff"/><stop offset="0.4447" stop-color="#00fff0"/><stop offset="0.4482" stop-color="#00ff98"/><stop offset="0.4637" stop-color="#00ff00"/><stop offset="0.4949" stop-color="#0cf400"/><stop offset="0.6577" stop-color="#7c8a00"/><stop offset="0.6744" stop-color="#dd3c0a"/><stop offset="0.6758" stop-color="#dc4010"/><stop offset="0.6772" stop-color="#ec7a2e"/><stop offset="0.7685" stop-color="#f8c068"/><stop offset="0.8493" stop-color="#fff0b0"/></linearGradient><linearGradient id="gDr9" gradientUnits="userSpaceOnUse" x1="-80" y1="0" x2="340" y2="0"><stop offset="0.0967" stop-color="#ff00ff"/><stop offset="0.1568" stop-color="#ff00ff"/><stop offset="0.2147" stop-color="#9000ff"/><stop offset="0.2817" stop-color="#3a12ff"/><stop offset="0.3494" stop-color="#2a64ff"/><stop offset="0.3901" stop-color="#18a0ff"/><stop offset="0.4422" stop-color="#00ffff"/><stop offset="0.4520" stop-color="#00fff0"/><stop offset="0.4599" stop-color="#00ff98"/><stop offset="0.4758" stop-color="#00ff00"/><stop offset="0.5081" stop-color="#0cf400"/><stop offset="0.6570" stop-color="#7c8a00"/><stop offset="0.6736" stop-color="#dd3c0a"/><stop offset="0.6751" stop-color="#dc4010"/><stop offset="0.6765" stop-color="#ec7a2e"/><stop offset="0.7692" stop-color="#f8c068"/><stop offset="0.8471" stop-color="#fff0b0"/></linearGradient><linearGradient id="gDr10" gradientUnits="userSpaceOnUse" x1="-80" y1="0" x2="340" y2="0"><stop offset="0.1055" stop-color="#ff00ff"/><stop offset="0.1641" stop-color="#ff00ff"/><stop offset="0.2168" stop-color="#9000ff"/><stop offset="0.2861" stop-color="#3a12ff"/><stop offset="0.3527" stop-color="#2a64ff"/><stop offset="0.3974" stop-color="#18a0ff"/><stop offset="0.4497" stop-color="#00ffff"/><stop offset="0.4593" stop-color="#00fff0"/><stop offset="0.4716" stop-color="#00ff98"/><stop offset="0.4879" stop-color="#00ff00"/><stop offset="0.5212" stop-color="#0cf400"/><stop offset="0.6562" stop-color="#7c8a00"/><stop offset="0.6729" stop-color="#dd3c0a"/><stop offset="0.6743" stop-color="#dc4010"/><stop offset="0.6758" stop-color="#ec7a2e"/><stop offset="0.7700" stop-color="#f8c068"/><stop offset="0.8449" stop-color="#fff0b0"/></linearGradient><linearGradient id="gDr11" gradientUnits="userSpaceOnUse" x1="-80" y1="0" x2="340" y2="0"><stop offset="0.1143" stop-color="#ff00ff"/><stop offset="0.1714" stop-color="#ff00ff"/><stop offset="0.2190" stop-color="#9000ff"/><stop offset="0.2905" stop-color="#3a12ff"/><stop offset="0.3560" stop-color="#2a64ff"/><stop offset="0.4048" stop-color="#18a0ff"/><stop offset="0.4571" stop-color="#00ffff"/><stop offset="0.4667" stop-color="#00fff0"/><stop offset="0.4833" stop-color="#00ff98"/><stop offset="0.5000" stop-color="#00ff00"/><stop offset="0.5344" stop-color="#0cf400"/><stop offset="0.6555" stop-color="#7c8a00"/><stop offset="0.6722" stop-color="#dd3c0a"/><stop offset="0.6736" stop-color="#dc4010"/><stop offset="0.6750" stop-color="#ec7a2e"/><stop offset="0.7707" stop-color="#f8c068"/><stop offset="0.8427" stop-color="#fff0b0"/></linearGradient><linearGradient id="gDr12" gradientUnits="userSpaceOnUse" x1="-80" y1="0" x2="340" y2="0"><stop offset="0.1231" stop-color="#ff00ff"/><stop offset="0.1788" stop-color="#ff00ff"/><stop offset="0.2264" stop-color="#9000ff"/><stop offset="0.2993" stop-color="#3a12ff"/><stop offset="0.3625" stop-color="#2a64ff"/><stop offset="0.4121" stop-color="#18a0ff"/><stop offset="0.4667" stop-color="#00ffff"/><stop offset="0.4769" stop-color="#00fff0"/><stop offset="0.4951" stop-color="#00ff98"/><stop offset="0.5121" stop-color="#00ff00"/><stop offset="0.5476" stop-color="#0cf400"/><stop offset="0.6548" stop-color="#7c8a00"/><stop offset="0.6714" stop-color="#dd3c0a"/><stop offset="0.6729" stop-color="#dc4010"/><stop offset="0.6743" stop-color="#ec7a2e"/><stop offset="0.7714" stop-color="#f8c068"/><stop offset="0.8405" stop-color="#fff0b0"/></linearGradient><linearGradient id="gDr13" gradientUnits="userSpaceOnUse" x1="-80" y1="0" x2="340" y2="0"><stop offset="0.1319" stop-color="#ff00ff"/><stop offset="0.1861" stop-color="#ff00ff"/><stop offset="0.2337" stop-color="#9000ff"/><stop offset="0.3081" stop-color="#3a12ff"/><stop offset="0.3691" stop-color="#2a64ff"/><stop offset="0.4194" stop-color="#18a0ff"/><stop offset="0.4762" stop-color="#00ffff"/><stop offset="0.4872" stop-color="#00fff0"/><stop offset="0.5068" stop-color="#00ff98"/><stop offset="0.5242" stop-color="#00ff00"/><stop offset="0.5608" stop-color="#0cf400"/><stop offset="0.6540" stop-color="#7c8a00"/><stop offset="0.6707" stop-color="#dd3c0a"/><stop offset="0.6721" stop-color="#dc4010"/><stop offset="0.6789" stop-color="#ec7a2e"/><stop offset="0.7722" stop-color="#f8c068"/><stop offset="0.8383" stop-color="#fff0b0"/></linearGradient><linearGradient id="gDr14" gradientUnits="userSpaceOnUse" x1="-80" y1="0" x2="340" y2="0"><stop offset="0.1407" stop-color="#ff00ff"/><stop offset="0.1934" stop-color="#ff00ff"/><stop offset="0.2410" stop-color="#9000ff"/><stop offset="0.3168" stop-color="#3a12ff"/><stop offset="0.3757" stop-color="#2a64ff"/><stop offset="0.4267" stop-color="#18a0ff"/><stop offset="0.4857" stop-color="#00ffff"/><stop offset="0.4974" stop-color="#00fff0"/><stop offset="0.5185" stop-color="#00ff98"/><stop offset="0.5363" stop-color="#00ff00"/><stop offset="0.5740" stop-color="#0cf400"/><stop offset="0.6533" stop-color="#7c8a00"/><stop offset="0.6700" stop-color="#dd3c0a"/><stop offset="0.6714" stop-color="#dc4010"/><stop offset="0.6841" stop-color="#ec7a2e"/><stop offset="0.7729" stop-color="#f8c068"/><stop offset="0.8361" stop-color="#fff0b0"/></linearGradient><linearGradient id="gDr15" gradientUnits="userSpaceOnUse" x1="-80" y1="0" x2="340" y2="0"><stop offset="0.1495" stop-color="#ff00ff"/><stop offset="0.2007" stop-color="#ff00ff"/><stop offset="0.2516" stop-color="#9000ff"/><stop offset="0.3251" stop-color="#3a12ff"/><stop offset="0.3832" stop-color="#2a64ff"/><stop offset="0.4346" stop-color="#18a0ff"/><stop offset="0.4918" stop-color="#00ffff"/><stop offset="0.5038" stop-color="#00fff0"/><stop offset="0.5312" stop-color="#00ff98"/><stop offset="0.5484" stop-color="#00ff00"/><stop offset="0.5872" stop-color="#0cf400"/><stop offset="0.6526" stop-color="#7c8a00"/><stop offset="0.6692" stop-color="#dd3c0a"/><stop offset="0.6707" stop-color="#dc4010"/><stop offset="0.6892" stop-color="#ec7a2e"/><stop offset="0.7736" stop-color="#f8c068"/><stop offset="0.8339" stop-color="#fff0b0"/></linearGradient><linearGradient id="gDr16" gradientUnits="userSpaceOnUse" x1="-80" y1="0" x2="340" y2="0"><stop offset="0.1582" stop-color="#ff00ff"/><stop offset="0.2081" stop-color="#ff00ff"/><stop offset="0.2634" stop-color="#9000ff"/><stop offset="0.3332" stop-color="#3a12ff"/><stop offset="0.3908" stop-color="#2a64ff"/><stop offset="0.4427" stop-color="#18a0ff"/><stop offset="0.4967" stop-color="#00ffff"/><stop offset="0.5090" stop-color="#00fff0"/><stop offset="0.5370" stop-color="#00ff98"/><stop offset="0.5542" stop-color="#00ff00"/><stop offset="0.6004" stop-color="#0cf400"/><stop offset="0.6518" stop-color="#7c8a00"/><stop offset="0.6685" stop-color="#dd3c0a"/><stop offset="0.6699" stop-color="#dc4010"/><stop offset="0.6943" stop-color="#ec7a2e"/><stop offset="0.7744" stop-color="#f8c068"/><stop offset="0.8317" stop-color="#fff0b0"/></linearGradient><linearGradient id="gDr17" gradientUnits="userSpaceOnUse" x1="-80" y1="0" x2="340" y2="0"><stop offset="0.1670" stop-color="#ff00ff"/><stop offset="0.2154" stop-color="#ff00ff"/><stop offset="0.2751" stop-color="#9000ff"/><stop offset="0.3412" stop-color="#3a12ff"/><stop offset="0.3985" stop-color="#2a64ff"/><stop offset="0.4507" stop-color="#18a0ff"/><stop offset="0.5016" stop-color="#00ffff"/><stop offset="0.5141" stop-color="#00fff0"/><stop offset="0.5403" stop-color="#00ff98"/><stop offset="0.5580" stop-color="#00ff00"/><stop offset="0.6136" stop-color="#0cf400"/><stop offset="0.6511" stop-color="#7c8a00"/><stop offset="0.6678" stop-color="#dd3c0a"/><stop offset="0.6692" stop-color="#dc4010"/><stop offset="0.6995" stop-color="#ec7a2e"/><stop offset="0.7751" stop-color="#f8c068"/><stop offset="0.8295" stop-color="#fff0b0"/></linearGradient><linearGradient id="gDr18" gradientUnits="userSpaceOnUse" x1="-80" y1="0" x2="340" y2="0"><stop offset="0.1766" stop-color="#ff00ff"/><stop offset="0.2242" stop-color="#ff00ff"/><stop offset="0.2857" stop-color="#9000ff"/><stop offset="0.3489" stop-color="#3a12ff"/><stop offset="0.4052" stop-color="#2a64ff"/><stop offset="0.4570" stop-color="#18a0ff"/><stop offset="0.5092" stop-color="#00ffff"/><stop offset="0.5214" stop-color="#00fff0"/><stop offset="0.5436" stop-color="#00ff98"/><stop offset="0.5617" stop-color="#00ff00"/><stop offset="0.6267" stop-color="#0cf400"/><stop offset="0.6504" stop-color="#7c8a00"/><stop offset="0.6670" stop-color="#dd3c0a"/><stop offset="0.6736" stop-color="#dc4010"/><stop offset="0.7046" stop-color="#ec7a2e"/><stop offset="0.7758" stop-color="#f8c068"/><stop offset="0.8273" stop-color="#fff0b0"/></linearGradient><linearGradient id="gDr19" gradientUnits="userSpaceOnUse" x1="-80" y1="0" x2="340" y2="0"><stop offset="0.1868" stop-color="#ff00ff"/><stop offset="0.2344" stop-color="#ff00ff"/><stop offset="0.2952" stop-color="#9000ff"/><stop offset="0.3562" stop-color="#3a12ff"/><stop offset="0.4107" stop-color="#2a64ff"/><stop offset="0.4614" stop-color="#18a0ff"/><stop offset="0.5171" stop-color="#00ffff"/><stop offset="0.5291" stop-color="#00fff0"/><stop offset="0.5481" stop-color="#00ff98"/><stop offset="0.5664" stop-color="#00ff00"/><stop offset="0.6355" stop-color="#0cf400"/><stop offset="0.6518" stop-color="#7c8a00"/><stop offset="0.6689" stop-color="#dd3c0a"/><stop offset="0.6788" stop-color="#dc4010"/><stop offset="0.7097" stop-color="#ec7a2e"/><stop offset="0.7766" stop-color="#f8c068"/><stop offset="0.8251" stop-color="#fff0b0"/></linearGradient><linearGradient id="gDr20" gradientUnits="userSpaceOnUse" x1="-80" y1="0" x2="340" y2="0"><stop offset="0.1971" stop-color="#ff00ff"/><stop offset="0.2447" stop-color="#ff00ff"/><stop offset="0.3048" stop-color="#9000ff"/><stop offset="0.3636" stop-color="#3a12ff"/><stop offset="0.4163" stop-color="#2a64ff"/><stop offset="0.4658" stop-color="#18a0ff"/><stop offset="0.5229" stop-color="#00ffff"/><stop offset="0.5350" stop-color="#00fff0"/><stop offset="0.5537" stop-color="#00ff98"/><stop offset="0.5721" stop-color="#00ff00"/><stop offset="0.6399" stop-color="#0cf400"/><stop offset="0.6555" stop-color="#7c8a00"/><stop offset="0.6733" stop-color="#dd3c0a"/><stop offset="0.6839" stop-color="#dc4010"/><stop offset="0.7148" stop-color="#ec7a2e"/><stop offset="0.7773" stop-color="#f8c068"/><stop offset="0.8229" stop-color="#fff0b0"/></linearGradient><linearGradient id="gDr21" gradientUnits="userSpaceOnUse" x1="-80" y1="0" x2="340" y2="0"><stop offset="0.2333" stop-color="#ff00ff"/><stop offset="0.2798" stop-color="#ff00ff"/><stop offset="0.3298" stop-color="#9000ff"/><stop offset="0.3774" stop-color="#3a12ff"/><stop offset="0.4233" stop-color="#2a64ff"/><stop offset="0.4714" stop-color="#18a0ff"/><stop offset="0.5286" stop-color="#00ffff"/><stop offset="0.5408" stop-color="#00fff0"/><stop offset="0.5593" stop-color="#00ff98"/><stop offset="0.5779" stop-color="#00ff00"/><stop offset="0.6443" stop-color="#0cf400"/><stop offset="0.6592" stop-color="#7c8a00"/><stop offset="0.6777" stop-color="#dd3c0a"/><stop offset="0.6890" stop-color="#dc4010"/><stop offset="0.7200" stop-color="#ec7a2e"/><stop offset="0.7780" stop-color="#f8c068"/><stop offset="0.8207" stop-color="#fff0b0"/></linearGradient><linearGradient id="gDr22" gradientUnits="userSpaceOnUse" x1="-80" y1="0" x2="340" y2="0"><stop offset="0.2684" stop-color="#ff00ff"/><stop offset="0.3123" stop-color="#ff00ff"/><stop offset="0.3502" stop-color="#9000ff"/><stop offset="0.3903" stop-color="#3a12ff"/><stop offset="0.4346" stop-color="#2a64ff"/><stop offset="0.4810" stop-color="#18a0ff"/><stop offset="0.5350" stop-color="#00ffff"/><stop offset="0.5473" stop-color="#00fff0"/><stop offset="0.5655" stop-color="#00ff98"/><stop offset="0.5841" stop-color="#00ff00"/><stop offset="0.6489" stop-color="#0cf400"/><stop offset="0.6634" stop-color="#7c8a00"/><stop offset="0.6828" stop-color="#dd3c0a"/><stop offset="0.6949" stop-color="#dc4010"/><stop offset="0.7251" stop-color="#ec7a2e"/><stop offset="0.7788" stop-color="#f8c068"/><stop offset="0.8185" stop-color="#fff0b0"/></linearGradient><linearGradient id="gDr23" gradientUnits="userSpaceOnUse" x1="-80" y1="0" x2="340" y2="0"><stop offset="0.2771" stop-color="#ff00ff"/><stop offset="0.3193" stop-color="#ff00ff"/><stop offset="0.3537" stop-color="#9000ff"/><stop offset="0.3963" stop-color="#3a12ff"/><stop offset="0.4459" stop-color="#2a64ff"/><stop offset="0.4905" stop-color="#18a0ff"/><stop offset="0.5436" stop-color="#00ffff"/><stop offset="0.5558" stop-color="#00fff0"/><stop offset="0.5730" stop-color="#00ff98"/><stop offset="0.5918" stop-color="#00ff00"/><stop offset="0.6540" stop-color="#0cf400"/><stop offset="0.6692" stop-color="#7c8a00"/><stop offset="0.6901" stop-color="#dd3c0a"/><stop offset="0.7029" stop-color="#dc4010"/><stop offset="0.7302" stop-color="#ec7a2e"/><stop offset="0.7795" stop-color="#f8c068"/><stop offset="0.8163" stop-color="#fff0b0"/></linearGradient><linearGradient id="gDr24" gradientUnits="userSpaceOnUse" x1="-80" y1="0" x2="340" y2="0"><stop offset="0.2857" stop-color="#ff00ff"/><stop offset="0.3262" stop-color="#ff00ff"/><stop offset="0.3571" stop-color="#9000ff"/><stop offset="0.4024" stop-color="#3a12ff"/><stop offset="0.4571" stop-color="#2a64ff"/><stop offset="0.5000" stop-color="#18a0ff"/><stop offset="0.5521" stop-color="#00ffff"/><stop offset="0.5642" stop-color="#00fff0"/><stop offset="0.5805" stop-color="#00ff98"/><stop offset="0.5995" stop-color="#00ff00"/><stop offset="0.6592" stop-color="#0cf400"/><stop offset="0.6751" stop-color="#7c8a00"/><stop offset="0.6974" stop-color="#dd3c0a"/><stop offset="0.7110" stop-color="#dc4010"/><stop offset="0.7353" stop-color="#ec7a2e"/><stop offset="0.7802" stop-color="#f8c068"/><stop offset="0.8141" stop-color="#fff0b0"/></linearGradient><linearGradient id="gDr25" gradientUnits="userSpaceOnUse" x1="-80" y1="0" x2="340" y2="0"><stop offset="0.2930" stop-color="#ff00ff"/><stop offset="0.3328" stop-color="#ff00ff"/><stop offset="0.3659" stop-color="#9000ff"/><stop offset="0.4104" stop-color="#3a12ff"/><stop offset="0.4794" stop-color="#2a64ff"/><stop offset="0.5110" stop-color="#18a0ff"/><stop offset="0.5607" stop-color="#00ffff"/><stop offset="0.5726" stop-color="#00fff0"/><stop offset="0.5881" stop-color="#00ff98"/><stop offset="0.6071" stop-color="#00ff00"/><stop offset="0.6643" stop-color="#0cf400"/><stop offset="0.6810" stop-color="#7c8a00"/><stop offset="0.7048" stop-color="#dd3c0a"/><stop offset="0.7190" stop-color="#dc4010"/><stop offset="0.7405" stop-color="#ec7a2e"/><stop offset="0.7810" stop-color="#f8c068"/><stop offset="0.8119" stop-color="#fff0b0"/></linearGradient><linearGradient id="gDr26" gradientUnits="userSpaceOnUse" x1="-80" y1="0" x2="340" y2="0"><stop offset="0.3004" stop-color="#ff00ff"/><stop offset="0.3394" stop-color="#ff00ff"/><stop offset="0.3747" stop-color="#9000ff"/><stop offset="0.4185" stop-color="#3a12ff"/><stop offset="0.4957" stop-color="#2a64ff"/><stop offset="0.5220" stop-color="#18a0ff"/><stop offset="0.5683" stop-color="#00ffff"/><stop offset="0.5803" stop-color="#00fff0"/><stop offset="0.5958" stop-color="#00ff98"/><stop offset="0.6137" stop-color="#00ff00"/><stop offset="0.6687" stop-color="#0cf400"/><stop offset="0.6853" stop-color="#7c8a00"/><stop offset="0.7106" stop-color="#dd3c0a"/><stop offset="0.7242" stop-color="#dc4010"/><stop offset="0.7456" stop-color="#ec7a2e"/><stop offset="0.7817" stop-color="#f8c068"/><stop offset="0.8097" stop-color="#fff0b0"/></linearGradient><linearGradient id="gDr27" gradientUnits="userSpaceOnUse" x1="-80" y1="0" x2="340" y2="0"><stop offset="0.3077" stop-color="#ff00ff"/><stop offset="0.3460" stop-color="#ff00ff"/><stop offset="0.3835" stop-color="#9000ff"/><stop offset="0.4266" stop-color="#3a12ff"/><stop offset="0.5061" stop-color="#2a64ff"/><stop offset="0.5330" stop-color="#18a0ff"/><stop offset="0.5758" stop-color="#00ffff"/><stop offset="0.5880" stop-color="#00fff0"/><stop offset="0.6035" stop-color="#00ff98"/><stop offset="0.6203" stop-color="#00ff00"/><stop offset="0.6731" stop-color="#0cf400"/><stop offset="0.6897" stop-color="#7c8a00"/><stop offset="0.7165" stop-color="#dd3c0a"/><stop offset="0.7293" stop-color="#dc4010"/><stop offset="0.7507" stop-color="#ec7a2e"/><stop offset="0.7824" stop-color="#f8c068"/><stop offset="0.8075" stop-color="#fff0b0"/></linearGradient><linearGradient id="gDr28" gradientUnits="userSpaceOnUse" x1="-80" y1="0" x2="340" y2="0"><stop offset="0.3229" stop-color="#ff00ff"/><stop offset="0.3582" stop-color="#ff00ff"/><stop offset="0.4015" stop-color="#9000ff"/><stop offset="0.4514" stop-color="#3a12ff"/><stop offset="0.5165" stop-color="#2a64ff"/><stop offset="0.5421" stop-color="#18a0ff"/><stop offset="0.5834" stop-color="#00ffff"/><stop offset="0.5957" stop-color="#00fff0"/><stop offset="0.6112" stop-color="#00ff98"/><stop offset="0.6269" stop-color="#00ff00"/><stop offset="0.6775" stop-color="#0cf400"/><stop offset="0.6941" stop-color="#7c8a00"/><stop offset="0.7223" stop-color="#dd3c0a"/><stop offset="0.7344" stop-color="#dc4010"/><stop offset="0.7559" stop-color="#ec7a2e"/><stop offset="0.7832" stop-color="#f8c068"/><stop offset="0.8053" stop-color="#fff0b0"/></linearGradient><linearGradient id="gDr29" gradientUnits="userSpaceOnUse" x1="-80" y1="0" x2="340" y2="0"><stop offset="0.3406" stop-color="#ff00ff"/><stop offset="0.3721" stop-color="#ff00ff"/><stop offset="0.4208" stop-color="#9000ff"/><stop offset="0.4668" stop-color="#3a12ff"/><stop offset="0.5236" stop-color="#2a64ff"/><stop offset="0.5507" stop-color="#18a0ff"/><stop offset="0.5903" stop-color="#00ffff"/><stop offset="0.6026" stop-color="#00fff0"/><stop offset="0.6174" stop-color="#00ff98"/><stop offset="0.6335" stop-color="#00ff00"/><stop offset="0.6819" stop-color="#0cf400"/><stop offset="0.6985" stop-color="#7c8a00"/><stop offset="0.7277" stop-color="#dd3c0a"/><stop offset="0.7396" stop-color="#dc4010"/><stop offset="0.7599" stop-color="#ec7a2e"/><stop offset="0.7839" stop-color="#f8c068"/><stop offset="0.8031" stop-color="#fff0b0"/></linearGradient><linearGradient id="gDr30" gradientUnits="userSpaceOnUse" x1="-80" y1="0" x2="340" y2="0"><stop offset="0.3584" stop-color="#ff00ff"/><stop offset="0.3859" stop-color="#ff00ff"/><stop offset="0.4402" stop-color="#9000ff"/><stop offset="0.4821" stop-color="#3a12ff"/><stop offset="0.5297" stop-color="#2a64ff"/><stop offset="0.5593" stop-color="#18a0ff"/><stop offset="0.5970" stop-color="#00ffff"/><stop offset="0.6092" stop-color="#00fff0"/><stop offset="0.6231" stop-color="#00ff98"/><stop offset="0.6401" stop-color="#00ff00"/><stop offset="0.6863" stop-color="#0cf400"/><stop offset="0.7029" stop-color="#7c8a00"/><stop offset="0.7328" stop-color="#dd3c0a"/><stop offset="0.7447" stop-color="#dc4010"/><stop offset="0.7636" stop-color="#ec7a2e"/><stop offset="0.7846" stop-color="#f8c068"/><stop offset="0.8009" stop-color="#fff0b0"/></linearGradient><linearGradient id="gDr31" gradientUnits="userSpaceOnUse" x1="-80" y1="0" x2="340" y2="0"><stop offset="0.3762" stop-color="#ff00ff"/><stop offset="0.4095" stop-color="#ff00ff"/><stop offset="0.4595" stop-color="#9000ff"/><stop offset="0.4974" stop-color="#3a12ff"/><stop offset="0.5357" stop-color="#2a64ff"/><stop offset="0.5679" stop-color="#18a0ff"/><stop offset="0.6038" stop-color="#00ffff"/><stop offset="0.6158" stop-color="#00fff0"/><stop offset="0.6288" stop-color="#00ff98"/><stop offset="0.6467" stop-color="#00ff00"/><stop offset="0.6907" stop-color="#0cf400"/><stop offset="0.7073" stop-color="#7c8a00"/><stop offset="0.7379" stop-color="#dd3c0a"/><stop offset="0.7498" stop-color="#dc4010"/><stop offset="0.7672" stop-color="#ec7a2e"/><stop offset="0.7853" stop-color="#f8c068"/><stop offset="0.7987" stop-color="#fff0b0"/></linearGradient><linearGradient id="gDr32" gradientUnits="userSpaceOnUse" x1="-80" y1="0" x2="340" y2="0"><stop offset="0.3923" stop-color="#ff00ff"/><stop offset="0.4227" stop-color="#ff00ff"/><stop offset="0.4639" stop-color="#9000ff"/><stop offset="0.5011" stop-color="#3a12ff"/><stop offset="0.5391" stop-color="#2a64ff"/><stop offset="0.5708" stop-color="#18a0ff"/><stop offset="0.6085" stop-color="#00ffff"/><stop offset="0.6205" stop-color="#00fff0"/><stop offset="0.6336" stop-color="#00ff98"/><stop offset="0.6519" stop-color="#00ff00"/><stop offset="0.6952" stop-color="#0cf400"/><stop offset="0.7117" stop-color="#7c8a00"/><stop offset="0.7425" stop-color="#dd3c0a"/><stop offset="0.7542" stop-color="#dc4010"/><stop offset="0.7703" stop-color="#ec7a2e"/><stop offset="0.7868" stop-color="#f8c068"/><stop offset="0.7991" stop-color="#fff0b0"/></linearGradient><linearGradient id="gDr33" gradientUnits="userSpaceOnUse" x1="-80" y1="0" x2="340" y2="0"><stop offset="0.4084" stop-color="#ff00ff"/><stop offset="0.4359" stop-color="#ff00ff"/><stop offset="0.4683" stop-color="#9000ff"/><stop offset="0.5049" stop-color="#3a12ff"/><stop offset="0.5425" stop-color="#2a64ff"/><stop offset="0.5737" stop-color="#18a0ff"/><stop offset="0.6113" stop-color="#00ffff"/><stop offset="0.6234" stop-color="#00fff0"/><stop offset="0.6374" stop-color="#00ff98"/><stop offset="0.6558" stop-color="#00ff00"/><stop offset="0.7000" stop-color="#0cf400"/><stop offset="0.7161" stop-color="#7c8a00"/><stop offset="0.7465" stop-color="#dd3c0a"/><stop offset="0.7579" stop-color="#dc4010"/><stop offset="0.7729" stop-color="#ec7a2e"/><stop offset="0.7890" stop-color="#f8c068"/><stop offset="0.8020" stop-color="#fff0b0"/></linearGradient><linearGradient id="gDr34" gradientUnits="userSpaceOnUse" x1="-80" y1="0" x2="340" y2="0"><stop offset="0.4245" stop-color="#ff00ff"/><stop offset="0.4491" stop-color="#ff00ff"/><stop offset="0.4727" stop-color="#9000ff"/><stop offset="0.5086" stop-color="#3a12ff"/><stop offset="0.5458" stop-color="#2a64ff"/><stop offset="0.5766" stop-color="#18a0ff"/><stop offset="0.6141" stop-color="#00ffff"/><stop offset="0.6264" stop-color="#00fff0"/><stop offset="0.6412" stop-color="#00ff98"/><stop offset="0.6597" stop-color="#00ff00"/><stop offset="0.7048" stop-color="#0cf400"/><stop offset="0.7205" stop-color="#7c8a00"/><stop offset="0.7505" stop-color="#dd3c0a"/><stop offset="0.7615" stop-color="#dc4010"/><stop offset="0.7755" stop-color="#ec7a2e"/><stop offset="0.7912" stop-color="#f8c068"/><stop offset="0.8049" stop-color="#fff0b0"/></linearGradient><linearGradient id="gDr35" gradientUnits="userSpaceOnUse" x1="-80" y1="0" x2="340" y2="0"><stop offset="0.4319" stop-color="#ff00ff"/><stop offset="0.4557" stop-color="#ff00ff"/><stop offset="0.4782" stop-color="#9000ff"/><stop offset="0.5124" stop-color="#3a12ff"/><stop offset="0.5488" stop-color="#2a64ff"/><stop offset="0.5793" stop-color="#18a0ff"/><stop offset="0.6167" stop-color="#00ffff"/><stop offset="0.6290" stop-color="#00fff0"/><stop offset="0.6445" stop-color="#00ff98"/><stop offset="0.6631" stop-color="#00ff00"/><stop offset="0.7093" stop-color="#0cf400"/><stop offset="0.7248" stop-color="#7c8a00"/><stop offset="0.7544" stop-color="#dd3c0a"/><stop offset="0.7650" stop-color="#dc4010"/><stop offset="0.7781" stop-color="#ec7a2e"/><stop offset="0.7935" stop-color="#f8c068"/><stop offset="0.8079" stop-color="#fff0b0"/></linearGradient><linearGradient id="gDr36" gradientUnits="userSpaceOnUse" x1="-80" y1="0" x2="340" y2="0"><stop offset="0.4363" stop-color="#ff00ff"/><stop offset="0.4601" stop-color="#ff00ff"/><stop offset="0.4841" stop-color="#9000ff"/><stop offset="0.5162" stop-color="#3a12ff"/><stop offset="0.5517" stop-color="#2a64ff"/><stop offset="0.5819" stop-color="#18a0ff"/><stop offset="0.6186" stop-color="#00ffff"/><stop offset="0.6309" stop-color="#00fff0"/><stop offset="0.6463" stop-color="#00ff98"/><stop offset="0.6651" stop-color="#00ff00"/><stop offset="0.7134" stop-color="#0cf400"/><stop offset="0.7288" stop-color="#7c8a00"/><stop offset="0.7577" stop-color="#dd3c0a"/><stop offset="0.7679" stop-color="#dc4010"/><stop offset="0.7810" stop-color="#ec7a2e"/><stop offset="0.7961" stop-color="#f8c068"/><stop offset="0.8108" stop-color="#fff0b0"/></linearGradient><linearGradient id="gDr37" gradientUnits="userSpaceOnUse" x1="-80" y1="0" x2="340" y2="0"><stop offset="0.4407" stop-color="#ff00ff"/><stop offset="0.4645" stop-color="#ff00ff"/><stop offset="0.4899" stop-color="#9000ff"/><stop offset="0.5200" stop-color="#3a12ff"/><stop offset="0.5545" stop-color="#2a64ff"/><stop offset="0.5844" stop-color="#18a0ff"/><stop offset="0.6205" stop-color="#00ffff"/><stop offset="0.6327" stop-color="#00fff0"/><stop offset="0.6482" stop-color="#00ff98"/><stop offset="0.6671" stop-color="#00ff00"/><stop offset="0.7174" stop-color="#0cf400"/><stop offset="0.7329" stop-color="#7c8a00"/><stop offset="0.7610" stop-color="#dd3c0a"/><stop offset="0.7709" stop-color="#dc4010"/><stop offset="0.7840" stop-color="#ec7a2e"/><stop offset="0.7986" stop-color="#f8c068"/><stop offset="0.8137" stop-color="#fff0b0"/></linearGradient><linearGradient id="gDr38" gradientUnits="userSpaceOnUse" x1="-80" y1="0" x2="340" y2="0"><stop offset="0.4462" stop-color="#ff00ff"/><stop offset="0.4681" stop-color="#ff00ff"/><stop offset="0.4947" stop-color="#9000ff"/><stop offset="0.5238" stop-color="#3a12ff"/><stop offset="0.5576" stop-color="#2a64ff"/><stop offset="0.5872" stop-color="#18a0ff"/><stop offset="0.6224" stop-color="#00ffff"/><stop offset="0.6345" stop-color="#00fff0"/><stop offset="0.6500" stop-color="#00ff98"/><stop offset="0.6690" stop-color="#00ff00"/><stop offset="0.7214" stop-color="#0cf400"/><stop offset="0.7369" stop-color="#7c8a00"/><stop offset="0.7643" stop-color="#dd3c0a"/><stop offset="0.7738" stop-color="#dc4010"/><stop offset="0.7869" stop-color="#ec7a2e"/><stop offset="0.8012" stop-color="#f8c068"/><stop offset="0.8167" stop-color="#fff0b0"/></linearGradient><linearGradient id="gDr39" gradientUnits="userSpaceOnUse" x1="-80" y1="0" x2="340" y2="0"><stop offset="0.4527" stop-color="#ff00ff"/><stop offset="0.4711" stop-color="#ff00ff"/><stop offset="0.4984" stop-color="#9000ff"/><stop offset="0.5276" stop-color="#3a12ff"/><stop offset="0.5609" stop-color="#2a64ff"/><stop offset="0.5901" stop-color="#18a0ff"/><stop offset="0.6246" stop-color="#00ffff"/><stop offset="0.6367" stop-color="#00fff0"/><stop offset="0.6520" stop-color="#00ff98"/><stop offset="0.6714" stop-color="#00ff00"/><stop offset="0.7242" stop-color="#0cf400"/><stop offset="0.7395" stop-color="#7c8a00"/><stop offset="0.7667" stop-color="#dd3c0a"/><stop offset="0.7758" stop-color="#dc4010"/><stop offset="0.7887" stop-color="#ec7a2e"/><stop offset="0.8038" stop-color="#f8c068"/><stop offset="0.8196" stop-color="#fff0b0"/></linearGradient><linearGradient id="gDr40" gradientUnits="userSpaceOnUse" x1="-80" y1="0" x2="340" y2="0"><stop offset="0.4593" stop-color="#ff00ff"/><stop offset="0.4740" stop-color="#ff00ff"/><stop offset="0.5020" stop-color="#9000ff"/><stop offset="0.5314" stop-color="#3a12ff"/><stop offset="0.5642" stop-color="#2a64ff"/><stop offset="0.5930" stop-color="#18a0ff"/><stop offset="0.6269" stop-color="#00ffff"/><stop offset="0.6389" stop-color="#00fff0"/><stop offset="0.6540" stop-color="#00ff98"/><stop offset="0.6738" stop-color="#00ff00"/><stop offset="0.7270" stop-color="#0cf400"/><stop offset="0.7421" stop-color="#7c8a00"/><stop offset="0.7690" stop-color="#dd3c0a"/><stop offset="0.7778" stop-color="#dc4010"/><stop offset="0.7905" stop-color="#ec7a2e"/><stop offset="0.8063" stop-color="#f8c068"/><stop offset="0.8225" stop-color="#fff0b0"/></linearGradient><linearGradient id="gDr41" gradientUnits="userSpaceOnUse" x1="-80" y1="0" x2="340" y2="0"><stop offset="0.4659" stop-color="#ff00ff"/><stop offset="0.4788" stop-color="#ff00ff"/><stop offset="0.5066" stop-color="#9000ff"/><stop offset="0.5357" stop-color="#3a12ff"/><stop offset="0.5675" stop-color="#2a64ff"/><stop offset="0.5956" stop-color="#18a0ff"/><stop offset="0.6289" stop-color="#00ffff"/><stop offset="0.6408" stop-color="#00fff0"/><stop offset="0.6560" stop-color="#00ff98"/><stop offset="0.6762" stop-color="#00ff00"/><stop offset="0.7298" stop-color="#0cf400"/><stop offset="0.7446" stop-color="#7c8a00"/><stop offset="0.7714" stop-color="#dd3c0a"/><stop offset="0.7798" stop-color="#dc4010"/><stop offset="0.7923" stop-color="#ec7a2e"/><stop offset="0.8089" stop-color="#f8c068"/><stop offset="0.8255" stop-color="#fff0b0"/></linearGradient><linearGradient id="gDr42" gradientUnits="userSpaceOnUse" x1="-80" y1="0" x2="340" y2="0"><stop offset="0.4725" stop-color="#ff00ff"/><stop offset="0.4890" stop-color="#ff00ff"/><stop offset="0.5139" stop-color="#9000ff"/><stop offset="0.5412" stop-color="#3a12ff"/><stop offset="0.5709" stop-color="#2a64ff"/><stop offset="0.5971" stop-color="#18a0ff"/><stop offset="0.6304" stop-color="#00ffff"/><stop offset="0.6423" stop-color="#00fff0"/><stop offset="0.6579" stop-color="#00ff98"/><stop offset="0.6786" stop-color="#00ff00"/><stop offset="0.7325" stop-color="#0cf400"/><stop offset="0.7472" stop-color="#7c8a00"/><stop offset="0.7738" stop-color="#dd3c0a"/><stop offset="0.7817" stop-color="#dc4010"/><stop offset="0.7940" stop-color="#ec7a2e"/><stop offset="0.8114" stop-color="#f8c068"/><stop offset="0.8284" stop-color="#fff0b0"/></linearGradient><linearGradient id="gDr43" gradientUnits="userSpaceOnUse" x1="-80" y1="0" x2="340" y2="0"><stop offset="0.4791" stop-color="#ff00ff"/><stop offset="0.4993" stop-color="#ff00ff"/><stop offset="0.5212" stop-color="#9000ff"/><stop offset="0.5468" stop-color="#3a12ff"/><stop offset="0.5742" stop-color="#2a64ff"/><stop offset="0.5985" stop-color="#18a0ff"/><stop offset="0.6319" stop-color="#00ffff"/><stop offset="0.6438" stop-color="#00fff0"/><stop offset="0.6599" stop-color="#00ff98"/><stop offset="0.6810" stop-color="#00ff00"/><stop offset="0.7353" stop-color="#0cf400"/><stop offset="0.7498" stop-color="#7c8a00"/><stop offset="0.7762" stop-color="#dd3c0a"/><stop offset="0.7837" stop-color="#dc4010"/><stop offset="0.7958" stop-color="#ec7a2e"/><stop offset="0.8140" stop-color="#f8c068"/><stop offset="0.8313" stop-color="#fff0b0"/></linearGradient><linearGradient id="gDr44" gradientUnits="userSpaceOnUse" x1="-80" y1="0" x2="340" y2="0"><stop offset="0.4857" stop-color="#ff00ff"/><stop offset="0.5095" stop-color="#ff00ff"/><stop offset="0.5286" stop-color="#9000ff"/><stop offset="0.5524" stop-color="#3a12ff"/><stop offset="0.5776" stop-color="#2a64ff"/><stop offset="0.6000" stop-color="#18a0ff"/><stop offset="0.6333" stop-color="#00ffff"/><stop offset="0.6452" stop-color="#00fff0"/><stop offset="0.6619" stop-color="#00ff98"/><stop offset="0.6833" stop-color="#00ff00"/><stop offset="0.7381" stop-color="#0cf400"/><stop offset="0.7524" stop-color="#7c8a00"/><stop offset="0.7786" stop-color="#dd3c0a"/><stop offset="0.7857" stop-color="#dc4010"/><stop offset="0.7976" stop-color="#ec7a2e"/><stop offset="0.8166" stop-color="#f8c068"/><stop offset="0.8342" stop-color="#fff0b0"/></linearGradient><linearGradient id="gDr45" gradientUnits="userSpaceOnUse" x1="-80" y1="0" x2="340" y2="0"><stop offset="0.4923" stop-color="#ff00ff"/><stop offset="0.5198" stop-color="#ff00ff"/><stop offset="0.5359" stop-color="#9000ff"/><stop offset="0.5579" stop-color="#3a12ff"/><stop offset="0.5810" stop-color="#2a64ff"/><stop offset="0.6015" stop-color="#18a0ff"/><stop offset="0.6349" stop-color="#00ffff"/><stop offset="0.6468" stop-color="#00fff0"/><stop offset="0.6639" stop-color="#00ff98"/><stop offset="0.6857" stop-color="#00ff00"/><stop offset="0.7409" stop-color="#0cf400"/><stop offset="0.7550" stop-color="#7c8a00"/><stop offset="0.7810" stop-color="#dd3c0a"/><stop offset="0.7877" stop-color="#dc4010"/><stop offset="0.7994" stop-color="#ec7a2e"/><stop offset="0.8191" stop-color="#f8c068"/><stop offset="0.8372" stop-color="#fff0b0"/></linearGradient><linearGradient id="gDr46" gradientUnits="userSpaceOnUse" x1="-80" y1="0" x2="340" y2="0"><stop offset="0.4989" stop-color="#ff00ff"/><stop offset="0.5300" stop-color="#ff00ff"/><stop offset="0.5432" stop-color="#9000ff"/><stop offset="0.5635" stop-color="#3a12ff"/><stop offset="0.5844" stop-color="#2a64ff"/><stop offset="0.6029" stop-color="#18a0ff"/><stop offset="0.6365" stop-color="#00ffff"/><stop offset="0.6484" stop-color="#00fff0"/><stop offset="0.6659" stop-color="#00ff98"/><stop offset="0.6881" stop-color="#00ff00"/><stop offset="0.7437" stop-color="#0cf400"/><stop offset="0.7575" stop-color="#7c8a00"/><stop offset="0.7833" stop-color="#dd3c0a"/><stop offset="0.7897" stop-color="#dc4010"/><stop offset="0.8012" stop-color="#ec7a2e"/><stop offset="0.8217" stop-color="#f8c068"/><stop offset="0.8401" stop-color="#fff0b0"/></linearGradient><linearGradient id="gDr47" gradientUnits="userSpaceOnUse" x1="-80" y1="0" x2="340" y2="0"><stop offset="0.5055" stop-color="#ff00ff"/><stop offset="0.5403" stop-color="#ff00ff"/><stop offset="0.5505" stop-color="#9000ff"/><stop offset="0.5691" stop-color="#3a12ff"/><stop offset="0.5877" stop-color="#2a64ff"/><stop offset="0.6044" stop-color="#18a0ff"/><stop offset="0.6381" stop-color="#00ffff"/><stop offset="0.6500" stop-color="#00fff0"/><stop offset="0.6679" stop-color="#00ff98"/><stop offset="0.6905" stop-color="#00ff00"/><stop offset="0.7464" stop-color="#0cf400"/><stop offset="0.7601" stop-color="#7c8a00"/><stop offset="0.7857" stop-color="#dd3c0a"/><stop offset="0.7917" stop-color="#dc4010"/><stop offset="0.8030" stop-color="#ec7a2e"/><stop offset="0.8243" stop-color="#f8c068"/><stop offset="0.8430" stop-color="#fff0b0"/></linearGradient></defs><g clip-path="url(#cpgD)"><g filter="url(#vbgD)"><rect x="-4" y="45.5" width="266" height="5" fill="url(#gDr0)"/><rect x="-4" y="49.5" width="266" height="5" fill="url(#gDr1)"/><rect x="-4" y="53.5" width="266" height="5" fill="url(#gDr2)"/><rect x="-4" y="57.5" width="266" height="5" fill="url(#gDr3)"/><rect x="-4" y="61.5" width="266" height="5" fill="url(#gDr4)"/><rect x="-4" y="65.5" width="266" height="5" fill="url(#gDr5)"/><rect x="-4" y="69.5" width="266" height="5" fill="url(#gDr6)"/><rect x="-4" y="73.5" width="266" height="5" fill="url(#gDr7)"/><rect x="-4" y="77.5" width="266" height="5" fill="url(#gDr8)"/><rect x="-4" y="81.5" width="266" height="5" fill="url(#gDr9)"/><rect x="-4" y="85.5" width="266" height="5" fill="url(#gDr10)"/><rect x="-4" y="89.5" width="266" height="5" fill="url(#gDr11)"/><rect x="-4" y="93.5" width="266" height="5" fill="url(#gDr12)"/><rect x="-4" y="97.5" width="266" height="5" fill="url(#gDr13)"/><rect x="-4" y="101.5" width="266" height="5" fill="url(#gDr14)"/><rect x="-4" y="105.5" width="266" height="5" fill="url(#gDr15)"/><rect x="-4" y="109.5" width="266" height="5" fill="url(#gDr16)"/><rect x="-4" y="113.5" width="266" height="5" fill="url(#gDr17)"/><rect x="-4" y="117.5" width="266" height="5" fill="url(#gDr18)"/><rect x="-4" y="121.5" width="266" height="5" fill="url(#gDr19)"/><rect x="-4" y="125.5" width="266" height="5" fill="url(#gDr20)"/><rect x="-4" y="129.5" width="266" height="5" fill="url(#gDr21)"/><rect x="-4" y="133.5" width="266" height="5" fill="url(#gDr22)"/><rect x="-4" y="137.5" width="266" height="5" fill="url(#gDr23)"/><rect x="-4" y="141.5" width="266" height="5" fill="url(#gDr24)"/><rect x="-4" y="145.5" width="266" height="5" fill="url(#gDr25)"/><rect x="-4" y="149.5" width="266" height="5" fill="url(#gDr26)"/><rect x="-4" y="153.5" width="266" height="5" fill="url(#gDr27)"/><rect x="-4" y="157.5" width="266" height="5" fill="url(#gDr28)"/><rect x="-4" y="161.5" width="266" height="5" fill="url(#gDr29)"/><rect x="-4" y="165.5" width="266" height="5" fill="url(#gDr30)"/><rect x="-4" y="169.5" width="266" height="5" fill="url(#gDr31)"/><rect x="-4" y="173.5" width="266" height="5" fill="url(#gDr32)"/><rect x="-4" y="177.5" width="266" height="5" fill="url(#gDr33)"/><rect x="-4" y="181.5" width="266" height="5" fill="url(#gDr34)"/><rect x="-4" y="185.5" width="266" height="5" fill="url(#gDr35)"/><rect x="-4" y="189.5" width="266" height="5" fill="url(#gDr36)"/><rect x="-4" y="193.5" width="266" height="5" fill="url(#gDr37)"/><rect x="-4" y="197.5" width="266" height="5" fill="url(#gDr38)"/><rect x="-4" y="201.5" width="266" height="5" fill="url(#gDr39)"/><rect x="-4" y="205.5" width="266" height="5" fill="url(#gDr40)"/><rect x="-4" y="209.5" width="266" height="5" fill="url(#gDr41)"/><rect x="-4" y="213.5" width="266" height="5" fill="url(#gDr42)"/><rect x="-4" y="217.5" width="266" height="5" fill="url(#gDr43)"/><rect x="-4" y="221.5" width="266" height="5" fill="url(#gDr44)"/><rect x="-4" y="225.5" width="266" height="5" fill="url(#gDr45)"/><rect x="-4" y="229.5" width="266" height="5" fill="url(#gDr46)"/><rect x="-4" y="233.5" width="266" height="5" fill="url(#gDr47)"/></g><g filter="url(#b2gD)"><path d="M59 166 L74 172 L92 184 L106 202 L108 212 L96 208 L78 196 L64 184 Z" fill="#6a0088"/><path d="M66 180 L80 184 L95 197 L98 206 L86 200 L72 191 Z" fill="#260044"/><path d="M82 164 L100 168 L104 176 L90 174 Z" fill="#ff00ff"/></g></g></svg>
<div style="left:92px;top:709px;width:76px;height:21px;background:#e1e1e1;border:1px solid #adadad;"></div>
<div class="t" style="left:114.5px;top:712.5px;font-size:12px;line-height:14px;color:#000;transform:scaleX(0.8429);transform-origin:0 50%;">Time Grid</div>
<svg style="left:96px;top:713px" width="13" height="13" viewBox="0 0 13 13"><circle cx="6.5" cy="6.5" r="5.6" fill="#4a6aa8" stroke="#2b3f78" stroke-width="1"/><path d="M6.5 3 V6.8 L9.3 8.2" stroke="#dfe8f8" stroke-width="1.1" fill="none"/><path d="M2.5 4.5 C4 3.5 5 5 4.5 7 C4 9 3 9.5 2 8.5 Z" fill="#b8c8e8"/></svg>
<div style="left:346px;top:709px;width:90px;height:21px;background:#e1e1e1;border:1px solid #adadad;"></div>
<div class="t" style="left:368.0px;top:712.5px;font-size:12px;line-height:14px;color:#000;transform:scaleX(0.8616);transform-origin:0 50%;">Velocity Grid</div>
<svg style="left:350px;top:713px" width="14" height="13" viewBox="0 0 14 13"><path d="M1 12 L2.5 2 C6 1.5 9 4 10.2 7.2 L13.5 12 Z" fill="#fff" stroke="#555" stroke-width="0.9"/><path d="M2.5 12 L6 3.2 M6 12 L9.2 6.2" stroke="#888" stroke-width="0.8"/></svg>
<div style="left:606px;top:709px;width:93px;height:21px;background:#cccccc;border:1px dotted #a8a8a8;"></div>
<div class="t" style="left:611.5px;top:712.5px;font-size:12px;line-height:14px;color:#a0a0a0;transform:scaleX(0.8667);transform-origin:0 50%;">Compaction Grid</div>
<div style="left:872px;top:709px;width:82px;height:21px;background:#e1e1e1;border:1px solid #adadad;"></div>
<div class="t" style="left:894.0px;top:712.5px;font-size:12px;line-height:14px;color:#000;transform:scaleX(0.8609);transform-origin:0 50%;">Depth Grid</div>
<svg style="left:879px;top:712px" width="8" height="15" viewBox="0 0 8 15"><rect x="2.5" y="0.5" width="3" height="3.5" fill="#c9a24a"/><rect x="2.5" y="4" width="3" height="6" fill="#7a2c1c"/><path d="M0.8 9.5 H7.2 L4 14 Z" fill="#3a1a12"/></svg>
<svg style="left:1054px;top:567px" width="13" height="21" viewBox="0 0 13 21"><path d="M0.5 0.5 V17 L4.3 13.4 L7.2 20 L9.6 19 L6.8 12.6 H12 Z" fill="#fff" stroke="#000" stroke-width="1"/></svg>
<div class="hdr" style="left:1262px;top:397px;width:658px;height:18px;"></div>
<div class="t" style="left:1268.3px;top:398.5px;font-size:12px;line-height:16px;color:#000;transform:scaleX(0.94);transform-origin:0 50%;">Cross Plot</div>
<svg style="left:1889px;top:402px" width="7" height="10" viewBox="0 0 7 10"><g shape-rendering="crispEdges" fill="#000"><rect x="1" y="0" width="5" height="1"/><rect x="1" y="0" width="1" height="6"/><rect x="4" y="0" width="2" height="6"/><rect x="0" y="6" width="7" height="1"/><rect x="3" y="7" width="1" height="3"/></g></svg>
<svg style="left:1905px;top:403px" width="9" height="8" viewBox="0 0 9 8"><path d="M0.8 0.6 L8.2 7.4 M8.2 0.6 L0.8 7.4" stroke="#000" stroke-width="1.7"/></svg>
<div class="t" style="left:1283.0px;top:425.5px;font-size:12px;line-height:14px;color:#000;transform:scaleX(0.8384);transform-origin:0 50%;">Display</div>
<div style="left:1332px;top:421px;width:201px;height:21px;background:#e1e1e1;border:1px solid #adadad;"></div>
<div class="t" style="left:1336.0px;top:424.5px;font-size:12px;line-height:14px;color:#000;transform:scaleX(0.9011);transform-origin:0 50%;">Average Velocity vs. Depth</div>
<svg style="left:1520px;top:429px" width="9" height="6" viewBox="0 0 9 6"><path d="M0.5 0.7 L4.5 4.8 L8.5 0.7" fill="none" stroke="#333" stroke-width="1.1"/></svg>
<div class="t" style="left:1537.0px;top:425.5px;font-size:12px;line-height:14px;color:#000;transform:scaleX(0.8703);transform-origin:0 50%;">Trend Line</div>
<div style="left:1591px;top:421px;width:125px;height:21px;background:#e1e1e1;border:1px solid #adadad;"></div>
<div class="t" style="left:1595.5px;top:424.5px;font-size:12px;line-height:14px;color:#000;transform:scaleX(0.8393);transform-origin:0 50%;">Linear</div>
<svg style="left:1703px;top:429px" width="9" height="6" viewBox="0 0 9 6"><path d="M0.5 0.7 L4.5 4.8 L8.5 0.7" fill="none" stroke="#333" stroke-width="1.1"/></svg>
<div style="left:1265px;top:450px;width:655px;height:308px;background:#fff;"></div>
<div class="t" style="left:1393.47px;top:459px;font-size:12px;line-height:14px;color:#000;width:400px;text-align:center;transform:scaleX(0.9181);transform-origin:50% 50%;">CG_r1</div>
<div class="t" style="left:1486.0px;top:482px;font-size:12px;line-height:14px;color:#000;transform:scaleX(0.8965);transform-origin:0 50%;white-space:pre;">0,24523 * X +  11652,63001</div>
<div class="t" style="left:1650.5px;top:482px;font-size:12px;line-height:14px;color:#000;transform:scaleX(0.8893);transform-origin:0 50%;">R² = 0,14723</div>
<svg style="left:0;top:0" width="1920" height="1040" viewBox="0 0 1920 1040"><g shape-rendering="crispEdges" stroke="#000" stroke-width="1"><path d="M1359 514.5 H1876"/><path d="M1359 553.5 H1876"/><path d="M1359 591.5 H1876"/><path d="M1359 629.5 H1876"/><path d="M1359 667.5 H1876"/><path d="M1359 706.5 H1876"/><path d="M1365.5 514 V710"/><path d="M1467.5 514 V710"/><path d="M1569.5 514 V710"/><path d="M1671.5 514 V710"/><path d="M1773.5 514 V710"/><path d="M1875.5 514 V710"/></g><path d="M1365.7 649.4 L1873.5 560.1" stroke="#e8760a" stroke-width="1.1"/><circle cx="1365.8" cy="546.9" r="2.4" fill="#0000ff"/><circle cx="1385.3" cy="637.7" r="2.4" fill="#0000ff"/><circle cx="1428.8" cy="682.6" r="2.4" fill="#0000ff"/><circle cx="1471.3" cy="686.2" r="2.4" fill="#0000ff"/><circle cx="1477.8" cy="664.4" r="2.4" fill="#0000ff"/><circle cx="1486.3" cy="663" r="2.4" fill="#0000ff"/><circle cx="1478.1" cy="586.4" r="2.4" fill="#0000ff"/><circle cx="1517.3" cy="550.9" r="2.4" fill="#0000ff"/><circle cx="1538.3" cy="692.5" r="2.4" fill="#0000ff"/><circle cx="1578.1" cy="647.3" r="2.4" fill="#0000ff"/><circle cx="1607.3" cy="670.8" r="2.4" fill="#0000ff"/><circle cx="1622.6" cy="669.4" r="2.4" fill="#0000ff"/><circle cx="1626.2" cy="528.1" r="2.4" fill="#0000ff"/><circle cx="1628" cy="540.5" r="2.4" fill="#0000ff"/><circle cx="1684.5" cy="641.6" r="2.4" fill="#0000ff"/><circle cx="1695.2" cy="567.9" r="2.4" fill="#0000ff"/><circle cx="1710.2" cy="560.1" r="2.4" fill="#0000ff"/><circle cx="1711.9" cy="556.2" r="2.4" fill="#0000ff"/><circle cx="1875.3" cy="552.6" r="2.4" fill="#0000ff"/></svg>
<div class="t" style="left:955.31px;top:506px;font-size:13px;line-height:16px;color:#000;width:400px;text-align:right;transform:scaleX(0.9463);transform-origin:100% 50%;">10400</div>
<div class="t" style="left:955.31px;top:545px;font-size:13px;line-height:16px;color:#000;width:400px;text-align:right;transform:scaleX(0.9463);transform-origin:100% 50%;">10300</div>
<div class="t" style="left:955.31px;top:583px;font-size:13px;line-height:16px;color:#000;width:400px;text-align:right;transform:scaleX(0.9463);transform-origin:100% 50%;">10200</div>
<div class="t" style="left:955.31px;top:621px;font-size:13px;line-height:16px;color:#000;width:400px;text-align:right;transform:scaleX(0.9463);transform-origin:100% 50%;">10100</div>
<div class="t" style="left:955.31px;top:659px;font-size:13px;line-height:16px;color:#000;width:400px;text-align:right;transform:scaleX(0.9463);transform-origin:100% 50%;">10000</div>
<div class="t" style="left:955.35px;top:698px;font-size:13px;line-height:16px;color:#000;width:400px;text-align:right;transform:scaleX(0.9563);transform-origin:100% 50%;">9900</div>
<div class="t" style="left:1165.51px;top:713.5px;font-size:13px;line-height:16px;color:#000;width:400px;text-align:center;transform:scaleX(0.9757);transform-origin:50% 50%;">-6539,9</div>
<div class="t" style="left:1267.51px;top:713.5px;font-size:13px;line-height:16px;color:#000;width:400px;text-align:center;transform:scaleX(0.9757);transform-origin:50% 50%;">-6349,2</div>
<div class="t" style="left:1369.51px;top:713.5px;font-size:13px;line-height:16px;color:#000;width:400px;text-align:center;transform:scaleX(0.9757);transform-origin:50% 50%;">-6158,5</div>
<div class="t" style="left:1471.51px;top:713.5px;font-size:13px;line-height:16px;color:#000;width:400px;text-align:center;transform:scaleX(0.9757);transform-origin:50% 50%;">-5967,7</div>
<div class="t" style="left:1573.51px;top:713.5px;font-size:13px;line-height:16px;color:#000;width:400px;text-align:center;transform:scaleX(0.9757);transform-origin:50% 50%;">-5777,0</div>
<div class="t" style="left:1675.51px;top:713.5px;font-size:13px;line-height:16px;color:#000;width:400px;text-align:center;transform:scaleX(0.9757);transform-origin:50% 50%;">-5586,3</div>
<div class="t" style="left:1419.49px;top:735px;font-size:12px;line-height:14px;color:#000;width:400px;text-align:center;transform:scaleX(0.8895);transform-origin:50% 50%;">Depth</div>
<div class="t" style="left:1196.7px;top:603.3px;width:200px;text-align:center;font-size:12px;line-height:14px;transform:rotate(-90deg) scaleX(0.9431);transform-origin:50% 50%;">Velocity</div>
<div class="hdra" style="left:0px;top:762px;width:1258px;height:18px;"></div>
<div class="t" style="left:6.3px;top:763.5px;font-size:12px;line-height:16px;color:#000;transform:scaleX(0.9724);transform-origin:0 50%;">Well Data Points</div>
<svg style="left:1227px;top:767px" width="7" height="10" viewBox="0 0 7 10"><g shape-rendering="crispEdges" fill="#000"><rect x="1" y="0" width="5" height="1"/><rect x="1" y="0" width="1" height="6"/><rect x="4" y="0" width="2" height="6"/><rect x="0" y="6" width="7" height="1"/><rect x="3" y="7" width="1" height="3"/></g></svg>
<svg style="left:1243px;top:768px" width="9" height="8" viewBox="0 0 9 8"><path d="M0.8 0.6 L8.2 7.4 M8.2 0.6 L0.8 7.4" stroke="#000" stroke-width="1.7"/></svg>
<div style="left:0px;top:780px;width:1258px;height:237px;background:#fff;border:1px solid #828c9a;"></div>
<div style="left:2px;top:782px;width:64px;height:24px;background:#d8e7f4;"></div>
<svg style="left:30px;top:782px" width="9" height="5" viewBox="0 0 9 5"><path d="M0.8 4.6 L4.5 0.8 L8.2 4.6" fill="none" stroke="#555" stroke-width="0.9"/></svg>
<div style="left:66px;top:782px;width:1px;height:23px;background:#e5e5e5;"></div>
<div style="left:67px;top:806px;width:1px;height:209px;background:#f0f0f0;"></div>
<div style="left:134px;top:782px;width:1px;height:23px;background:#e5e5e5;"></div>
<div style="left:135px;top:806px;width:1px;height:209px;background:#f0f0f0;"></div>
<div style="left:197px;top:782px;width:1px;height:23px;background:#e5e5e5;"></div>
<div style="left:198px;top:806px;width:1px;height:209px;background:#f0f0f0;"></div>
<div style="left:253px;top:782px;width:1px;height:23px;background:#e5e5e5;"></div>
<div style="left:254px;top:806px;width:1px;height:209px;background:#f0f0f0;"></div>
<div style="left:304px;top:782px;width:1px;height:23px;background:#e5e5e5;"></div>
<div style="left:305px;top:806px;width:1px;height:209px;background:#f0f0f0;"></div>
<div style="left:361px;top:782px;width:1px;height:23px;background:#e5e5e5;"></div>
<div style="left:362px;top:806px;width:1px;height:209px;background:#f0f0f0;"></div>
<div style="left:433px;top:782px;width:1px;height:23px;background:#e5e5e5;"></div>
<div style="left:434px;top:806px;width:1px;height:209px;background:#f0f0f0;"></div>
<div style="left:520px;top:782px;width:1px;height:23px;background:#e5e5e5;"></div>
<div style="left:521px;top:806px;width:1px;height:209px;background:#f0f0f0;"></div>
<div style="left:621px;top:782px;width:1px;height:23px;background:#e5e5e5;"></div>
<div style="left:622px;top:806px;width:1px;height:209px;background:#f0f0f0;"></div>
<div style="left:707px;top:782px;width:1px;height:23px;background:#e5e5e5;"></div>
<div style="left:708px;top:806px;width:1px;height:209px;background:#f0f0f0;"></div>
<div class="t" style="left:23.4px;top:785.5px;font-size:12px;line-height:16px;color:#000;transform:scaleX(0.893);transform-origin:0 50%;">UWI</div>
<div class="t" style="left:71.8px;top:785.5px;font-size:12px;line-height:16px;color:#000;transform:scaleX(0.893);transform-origin:0 50%;">X</div>
<div class="t" style="left:141.0px;top:785.5px;font-size:12px;line-height:16px;color:#000;transform:scaleX(0.893);transform-origin:0 50%;">Y</div>
<div class="t" style="left:204.4px;top:785.5px;font-size:12px;line-height:16px;color:#000;transform:scaleX(0.893);transform-origin:0 50%;">Elevation</div>
<div class="t" style="left:260.7px;top:785.5px;font-size:12px;line-height:16px;color:#000;transform:scaleX(0.893);transform-origin:0 50%;">Time</div>
<div class="t" style="left:311.3px;top:785.5px;font-size:12px;line-height:16px;color:#000;transform:scaleX(0.893);transform-origin:0 50%;">Velocity</div>
<div class="t" style="left:367.7px;top:785.5px;font-size:12px;line-height:16px;color:#000;transform:scaleX(0.893);transform-origin:0 50%;">Depth (TVD)</div>
<div class="t" style="left:440.0px;top:785.5px;font-size:12px;line-height:16px;color:#000;transform:scaleX(0.893);transform-origin:0 50%;">Depth (sub sea)</div>
<div class="t" style="left:526.7px;top:785.5px;font-size:12px;line-height:16px;color:#000;transform:scaleX(0.893);transform-origin:0 50%;">Depth From Datum</div>
<div class="t" style="left:627.6px;top:785.5px;font-size:12px;line-height:16px;color:#000;transform:scaleX(0.893);transform-origin:0 50%;">Depth Residual</div>
<div class="t" style="left:712.3px;top:785.5px;font-size:12px;line-height:16px;color:#000;transform:scaleX(0.893);transform-origin:0 50%;">Compaction Slope</div>
<div style="left:2px;top:806px;width:1236px;height:209px;overflow:hidden;">
<div style="left:0px;top:16px;width:1236px;height:1px;background:#f0f0f0;"></div>
<div class="t" style="left:6.3px;top:0.5px;font-size:12px;line-height:16px;color:#000;transform:scaleX(0.895);transform-origin:0 50%;">771667557</div>
<div class="t" style="left:70.6px;top:0.5px;font-size:12px;line-height:16px;color:#000;transform:scaleX(0.895);transform-origin:0 50%;">1972382,04</div>
<div class="t" style="left:139.2px;top:0.5px;font-size:12px;line-height:16px;color:#000;transform:scaleX(0.895);transform-origin:0 50%;">125664,77</div>
<div class="t" style="left:202.0px;top:0.5px;font-size:12px;line-height:16px;color:#000;transform:scaleX(0.895);transform-origin:0 50%;">409,00</div>
<div class="t" style="left:258.7px;top:0.5px;font-size:12px;line-height:16px;color:#000;transform:scaleX(0.895);transform-origin:0 50%;">1170.84</div>
<div class="t" style="left:309.0px;top:0.5px;font-size:12px;line-height:16px;color:#000;transform:scaleX(0.895);transform-origin:0 50%;">12611.18</div>
<div class="t" style="left:365.7px;top:0.5px;font-size:12px;line-height:16px;color:#000;transform:scaleX(0.895);transform-origin:0 50%;">6458.25</div>
<div class="t" style="left:438.0px;top:0.5px;font-size:12px;line-height:16px;color:#000;transform:scaleX(0.895);transform-origin:0 50%;">-6049.25</div>
<div class="t" style="left:524.7px;top:0.5px;font-size:12px;line-height:16px;color:#000;transform:scaleX(0.895);transform-origin:0 50%;">6049.25</div>
<div class="t" style="left:625.6px;top:0.5px;font-size:12px;line-height:16px;color:#000;transform:scaleX(0.895);transform-origin:0 50%;">2.60</div>
<div style="left:0px;top:33px;width:1236px;height:1px;background:#f0f0f0;"></div>
<div class="t" style="left:6.3px;top:17.5px;font-size:12px;line-height:16px;color:#000;transform:scaleX(0.895);transform-origin:0 50%;">771667595</div>
<div class="t" style="left:70.6px;top:17.5px;font-size:12px;line-height:16px;color:#000;transform:scaleX(0.895);transform-origin:0 50%;">1931322,99</div>
<div class="t" style="left:139.2px;top:17.5px;font-size:12px;line-height:16px;color:#000;transform:scaleX(0.895);transform-origin:0 50%;">161476,37</div>
<div class="t" style="left:202.0px;top:17.5px;font-size:12px;line-height:16px;color:#000;transform:scaleX(0.895);transform-origin:0 50%;">363,00</div>
<div class="t" style="left:258.7px;top:17.5px;font-size:12px;line-height:16px;color:#000;transform:scaleX(0.895);transform-origin:0 50%;">1264.97</div>
<div class="t" style="left:309.0px;top:17.5px;font-size:12px;line-height:16px;color:#000;transform:scaleX(0.895);transform-origin:0 50%;">13221.69</div>
<div class="t" style="left:365.7px;top:17.5px;font-size:12px;line-height:16px;color:#000;transform:scaleX(0.895);transform-origin:0 50%;">6693.47</div>
<div class="t" style="left:438.0px;top:17.5px;font-size:12px;line-height:16px;color:#000;transform:scaleX(0.895);transform-origin:0 50%;">-6330.47</div>
<div class="t" style="left:524.7px;top:17.5px;font-size:12px;line-height:16px;color:#000;transform:scaleX(0.895);transform-origin:0 50%;">6330.47</div>
<div class="t" style="left:625.6px;top:17.5px;font-size:12px;line-height:16px;color:#000;transform:scaleX(0.895);transform-origin:0 50%;">-0.37</div>
<div style="left:0px;top:50px;width:1236px;height:1px;background:#f0f0f0;"></div>
<div class="t" style="left:6.3px;top:34.5px;font-size:12px;line-height:16px;color:#000;transform:scaleX(0.895);transform-origin:0 50%;">771667611</div>
<div class="t" style="left:70.6px;top:34.5px;font-size:12px;line-height:16px;color:#000;transform:scaleX(0.895);transform-origin:0 50%;">1978635,61</div>
<div class="t" style="left:139.2px;top:34.5px;font-size:12px;line-height:16px;color:#000;transform:scaleX(0.895);transform-origin:0 50%;">126078,48</div>
<div class="t" style="left:202.0px;top:34.5px;font-size:12px;line-height:16px;color:#000;transform:scaleX(0.895);transform-origin:0 50%;">440,00</div>
<div class="t" style="left:258.7px;top:34.5px;font-size:12px;line-height:16px;color:#000;transform:scaleX(0.895);transform-origin:0 50%;">1144.89</div>
<div class="t" style="left:309.0px;top:34.5px;font-size:12px;line-height:16px;color:#000;transform:scaleX(0.895);transform-origin:0 50%;">12450.91</div>
<div class="t" style="left:365.7px;top:34.5px;font-size:12px;line-height:16px;color:#000;transform:scaleX(0.895);transform-origin:0 50%;">6332.12</div>
<div class="t" style="left:438.0px;top:34.5px;font-size:12px;line-height:16px;color:#000;transform:scaleX(0.895);transform-origin:0 50%;">-5892.12</div>
<div class="t" style="left:524.7px;top:34.5px;font-size:12px;line-height:16px;color:#000;transform:scaleX(0.895);transform-origin:0 50%;">5892.12</div>
<div class="t" style="left:625.6px;top:34.5px;font-size:12px;line-height:16px;color:#000;transform:scaleX(0.895);transform-origin:0 50%;">1.26</div>
<div style="left:0px;top:67px;width:1236px;height:1px;background:#f0f0f0;"></div>
<div class="t" style="left:6.3px;top:51.5px;font-size:12px;line-height:16px;color:#000;transform:scaleX(0.895);transform-origin:0 50%;">771667628</div>
<div class="t" style="left:70.6px;top:51.5px;font-size:12px;line-height:16px;color:#000;transform:scaleX(0.895);transform-origin:0 50%;">1979476,06</div>
<div class="t" style="left:139.2px;top:51.5px;font-size:12px;line-height:16px;color:#000;transform:scaleX(0.895);transform-origin:0 50%;">121338,68</div>
<div class="t" style="left:202.0px;top:51.5px;font-size:12px;line-height:16px;color:#000;transform:scaleX(0.895);transform-origin:0 50%;">418,00</div>
<div class="t" style="left:258.7px;top:51.5px;font-size:12px;line-height:16px;color:#000;transform:scaleX(0.895);transform-origin:0 50%;">1146.69</div>
<div class="t" style="left:309.0px;top:51.5px;font-size:12px;line-height:16px;color:#000;transform:scaleX(0.895);transform-origin:0 50%;">12357.01</div>
<div class="t" style="left:365.7px;top:51.5px;font-size:12px;line-height:16px;color:#000;transform:scaleX(0.895);transform-origin:0 50%;">6313.24</div>
<div class="t" style="left:438.0px;top:51.5px;font-size:12px;line-height:16px;color:#000;transform:scaleX(0.895);transform-origin:0 50%;">-5895.24</div>
<div class="t" style="left:524.7px;top:51.5px;font-size:12px;line-height:16px;color:#000;transform:scaleX(0.895);transform-origin:0 50%;">5895.24</div>
<div class="t" style="left:625.6px;top:51.5px;font-size:12px;line-height:16px;color:#000;transform:scaleX(0.895);transform-origin:0 50%;">0.14</div>
<div style="left:0px;top:84px;width:1236px;height:1px;background:#f0f0f0;"></div>
<div class="t" style="left:6.3px;top:68.5px;font-size:12px;line-height:16px;color:#000;transform:scaleX(0.895);transform-origin:0 50%;">771667729</div>
<div class="t" style="left:70.6px;top:68.5px;font-size:12px;line-height:16px;color:#000;transform:scaleX(0.895);transform-origin:0 50%;">1993599,02</div>
<div class="t" style="left:139.2px;top:68.5px;font-size:12px;line-height:16px;color:#000;transform:scaleX(0.895);transform-origin:0 50%;">125639,34</div>
<div class="t" style="left:202.0px;top:68.5px;font-size:12px;line-height:16px;color:#000;transform:scaleX(0.895);transform-origin:0 50%;">506,00</div>
<div class="t" style="left:258.7px;top:68.5px;font-size:12px;line-height:16px;color:#000;transform:scaleX(0.895);transform-origin:0 50%;">1084.59</div>
<div class="t" style="left:309.0px;top:68.5px;font-size:12px;line-height:16px;color:#000;transform:scaleX(0.895);transform-origin:0 50%;">12780.95</div>
<div class="t" style="left:365.7px;top:68.5px;font-size:12px;line-height:16px;color:#000;transform:scaleX(0.895);transform-origin:0 50%;">6092.40</div>
<div class="t" style="left:438.0px;top:68.5px;font-size:12px;line-height:16px;color:#000;transform:scaleX(0.895);transform-origin:0 50%;">-5586.40</div>
<div class="t" style="left:524.7px;top:68.5px;font-size:12px;line-height:16px;color:#000;transform:scaleX(0.895);transform-origin:0 50%;">5586.40</div>
<div class="t" style="left:625.6px;top:68.5px;font-size:12px;line-height:16px;color:#000;transform:scaleX(0.895);transform-origin:0 50%;">1.53</div>
<div style="left:0px;top:101px;width:1236px;height:1px;background:#f0f0f0;"></div>
<div class="t" style="left:6.3px;top:85.5px;font-size:12px;line-height:16px;color:#000;transform:scaleX(0.895);transform-origin:0 50%;">771667734</div>
<div class="t" style="left:70.6px;top:85.5px;font-size:12px;line-height:16px;color:#000;transform:scaleX(0.895);transform-origin:0 50%;">1972543,59</div>
<div class="t" style="left:139.2px;top:85.5px;font-size:12px;line-height:16px;color:#000;transform:scaleX(0.895);transform-origin:0 50%;">126315,54</div>
<div class="t" style="left:202.0px;top:85.5px;font-size:12px;line-height:16px;color:#000;transform:scaleX(0.895);transform-origin:0 50%;">410,00</div>
<div class="t" style="left:258.7px;top:85.5px;font-size:12px;line-height:16px;color:#000;transform:scaleX(0.895);transform-origin:0 50%;">1167.76</div>
<div class="t" style="left:309.0px;top:85.5px;font-size:12px;line-height:16px;color:#000;transform:scaleX(0.895);transform-origin:0 50%;">12914.67</div>
<div class="t" style="left:365.7px;top:85.5px;font-size:12px;line-height:16px;color:#000;transform:scaleX(0.895);transform-origin:0 50%;">6462.51</div>
<div class="t" style="left:438.0px;top:85.5px;font-size:12px;line-height:16px;color:#000;transform:scaleX(0.895);transform-origin:0 50%;">-6052.51</div>
<div class="t" style="left:524.7px;top:85.5px;font-size:12px;line-height:16px;color:#000;transform:scaleX(0.895);transform-origin:0 50%;">6052.51</div>
<div class="t" style="left:625.6px;top:85.5px;font-size:12px;line-height:16px;color:#000;transform:scaleX(0.895);transform-origin:0 50%;">-2.58</div>
<div style="left:0px;top:118px;width:1236px;height:1px;background:#f0f0f0;"></div>
<div class="t" style="left:6.3px;top:102.5px;font-size:12px;line-height:16px;color:#000;transform:scaleX(0.895);transform-origin:0 50%;">771667735</div>
<div class="t" style="left:70.6px;top:102.5px;font-size:12px;line-height:16px;color:#000;transform:scaleX(0.895);transform-origin:0 50%;">1950241,58</div>
<div class="t" style="left:139.2px;top:102.5px;font-size:12px;line-height:16px;color:#000;transform:scaleX(0.895);transform-origin:0 50%;">126116,57</div>
<div class="t" style="left:202.0px;top:102.5px;font-size:12px;line-height:16px;color:#000;transform:scaleX(0.895);transform-origin:0 50%;">364,00</div>
<div class="t" style="left:258.7px;top:102.5px;font-size:12px;line-height:16px;color:#000;transform:scaleX(0.895);transform-origin:0 50%;">1267.78</div>
<div class="t" style="left:309.0px;top:102.5px;font-size:12px;line-height:16px;color:#000;transform:scaleX(0.895);transform-origin:0 50%;">13433.02</div>
<div class="t" style="left:365.7px;top:102.5px;font-size:12px;line-height:16px;color:#000;transform:scaleX(0.895);transform-origin:0 50%;">6903.73</div>
<div class="t" style="left:438.0px;top:102.5px;font-size:12px;line-height:16px;color:#000;transform:scaleX(0.895);transform-origin:0 50%;">-6539.73</div>
<div class="t" style="left:524.7px;top:102.5px;font-size:12px;line-height:16px;color:#000;transform:scaleX(0.895);transform-origin:0 50%;">6539.73</div>
<div class="t" style="left:625.6px;top:102.5px;font-size:12px;line-height:16px;color:#000;transform:scaleX(0.895);transform-origin:0 50%;">0.04</div>
<div style="left:0px;top:135px;width:1236px;height:1px;background:#f0f0f0;"></div>
<div class="t" style="left:6.3px;top:119.5px;font-size:12px;line-height:16px;color:#000;transform:scaleX(0.895);transform-origin:0 50%;">771667736</div>
<div class="t" style="left:70.6px;top:119.5px;font-size:12px;line-height:16px;color:#000;transform:scaleX(0.895);transform-origin:0 50%;">1925233,74</div>
<div class="t" style="left:139.2px;top:119.5px;font-size:12px;line-height:16px;color:#000;transform:scaleX(0.895);transform-origin:0 50%;">165854,76</div>
<div class="t" style="left:202.0px;top:119.5px;font-size:12px;line-height:16px;color:#000;transform:scaleX(0.895);transform-origin:0 50%;">388,00</div>
<div class="t" style="left:258.7px;top:119.5px;font-size:12px;line-height:16px;color:#000;transform:scaleX(0.895);transform-origin:0 50%;">1261.25</div>
<div class="t" style="left:309.0px;top:119.5px;font-size:12px;line-height:16px;color:#000;transform:scaleX(0.895);transform-origin:0 50%;">13118.77</div>
<div class="t" style="left:365.7px;top:119.5px;font-size:12px;line-height:16px;color:#000;transform:scaleX(0.895);transform-origin:0 50%;">6702.23</div>
<div class="t" style="left:438.0px;top:119.5px;font-size:12px;line-height:16px;color:#000;transform:scaleX(0.895);transform-origin:0 50%;">-6314.23</div>
<div class="t" style="left:524.7px;top:119.5px;font-size:12px;line-height:16px;color:#000;transform:scaleX(0.895);transform-origin:0 50%;">6314.23</div>
<div class="t" style="left:625.6px;top:119.5px;font-size:12px;line-height:16px;color:#000;transform:scaleX(0.895);transform-origin:0 50%;">1.71</div>
<div style="left:0px;top:152px;width:1236px;height:1px;background:#f0f0f0;"></div>
<div class="t" style="left:6.3px;top:136.5px;font-size:12px;line-height:16px;color:#000;transform:scaleX(0.895);transform-origin:0 50%;">771667760</div>
<div class="t" style="left:70.6px;top:136.5px;font-size:12px;line-height:16px;color:#000;transform:scaleX(0.895);transform-origin:0 50%;">1951927,60</div>
<div class="t" style="left:139.2px;top:136.5px;font-size:12px;line-height:16px;color:#000;transform:scaleX(0.895);transform-origin:0 50%;">150228,78</div>
<div class="t" style="left:202.0px;top:136.5px;font-size:12px;line-height:16px;color:#000;transform:scaleX(0.895);transform-origin:0 50%;">372,60</div>
<div class="t" style="left:258.7px;top:136.5px;font-size:12px;line-height:16px;color:#000;transform:scaleX(0.895);transform-origin:0 50%;">1218.51</div>
<div class="t" style="left:309.0px;top:136.5px;font-size:12px;line-height:16px;color:#000;transform:scaleX(0.895);transform-origin:0 50%;">12538.48</div>
<div class="t" style="left:365.7px;top:136.5px;font-size:12px;line-height:16px;color:#000;transform:scaleX(0.895);transform-origin:0 50%;">6460.55</div>
<div class="t" style="left:438.0px;top:136.5px;font-size:12px;line-height:16px;color:#000;transform:scaleX(0.895);transform-origin:0 50%;">-6087.95</div>
<div class="t" style="left:524.7px;top:136.5px;font-size:12px;line-height:16px;color:#000;transform:scaleX(0.895);transform-origin:0 50%;">6087.95</div>
<div class="t" style="left:625.6px;top:136.5px;font-size:12px;line-height:16px;color:#000;transform:scaleX(0.895);transform-origin:0 50%;">0.65</div>
<div style="left:0px;top:169px;width:1236px;height:1px;background:#f0f0f0;"></div>
<div class="t" style="left:6.3px;top:153.5px;font-size:12px;line-height:16px;color:#000;transform:scaleX(0.895);transform-origin:0 50%;">771667762</div>
<div class="t" style="left:70.6px;top:153.5px;font-size:12px;line-height:16px;color:#000;transform:scaleX(0.895);transform-origin:0 50%;">1940101,32</div>
<div class="t" style="left:139.2px;top:153.5px;font-size:12px;line-height:16px;color:#000;transform:scaleX(0.895);transform-origin:0 50%;">138477,40</div>
<div class="t" style="left:202.0px;top:153.5px;font-size:12px;line-height:16px;color:#000;transform:scaleX(0.895);transform-origin:0 50%;">365,00</div>
<div class="t" style="left:258.7px;top:153.5px;font-size:12px;line-height:16px;color:#000;transform:scaleX(0.895);transform-origin:0 50%;">1289.30</div>
<div class="t" style="left:309.0px;top:153.5px;font-size:12px;line-height:16px;color:#000;transform:scaleX(0.895);transform-origin:0 50%;">14709.26</div>
<div class="t" style="left:365.7px;top:153.5px;font-size:12px;line-height:16px;color:#000;transform:scaleX(0.895);transform-origin:0 50%;">6787.07</div>
<div class="t" style="left:438.0px;top:153.5px;font-size:12px;line-height:16px;color:#000;transform:scaleX(0.895);transform-origin:0 50%;">-6422.07</div>
<div class="t" style="left:524.7px;top:153.5px;font-size:12px;line-height:16px;color:#000;transform:scaleX(0.895);transform-origin:0 50%;">6422.07</div>
<div class="t" style="left:625.6px;top:153.5px;font-size:12px;line-height:16px;color:#000;transform:scaleX(0.895);transform-origin:0 50%;">-1.26</div>
<div style="left:0px;top:186px;width:1236px;height:1px;background:#f0f0f0;"></div>
<div class="t" style="left:6.3px;top:170.5px;font-size:12px;line-height:16px;color:#000;transform:scaleX(0.895);transform-origin:0 50%;">771667768</div>
<div class="t" style="left:70.6px;top:170.5px;font-size:12px;line-height:16px;color:#000;transform:scaleX(0.895);transform-origin:0 50%;">1951132,43</div>
<div class="t" style="left:139.2px;top:170.5px;font-size:12px;line-height:16px;color:#000;transform:scaleX(0.895);transform-origin:0 50%;">150119,64</div>
<div class="t" style="left:202.0px;top:170.5px;font-size:12px;line-height:16px;color:#000;transform:scaleX(0.895);transform-origin:0 50%;">358,00</div>
<div class="t" style="left:258.7px;top:170.5px;font-size:12px;line-height:16px;color:#000;transform:scaleX(0.895);transform-origin:0 50%;">1221.91</div>
<div class="t" style="left:309.0px;top:170.5px;font-size:12px;line-height:16px;color:#000;transform:scaleX(0.895);transform-origin:0 50%;">12617.67</div>
<div class="t" style="left:365.7px;top:170.5px;font-size:12px;line-height:16px;color:#000;transform:scaleX(0.895);transform-origin:0 50%;">6500.63</div>
<div class="t" style="left:438.0px;top:170.5px;font-size:12px;line-height:16px;color:#000;transform:scaleX(0.895);transform-origin:0 50%;">-6142.63</div>
<div class="t" style="left:524.7px;top:170.5px;font-size:12px;line-height:16px;color:#000;transform:scaleX(0.895);transform-origin:0 50%;">6142.63</div>
<div class="t" style="left:625.6px;top:170.5px;font-size:12px;line-height:16px;color:#000;transform:scaleX(0.895);transform-origin:0 50%;">-7.48</div>
<div style="left:0px;top:203px;width:1236px;height:1px;background:#f0f0f0;"></div>
<div class="t" style="left:6.3px;top:187.5px;font-size:12px;line-height:16px;color:#000;transform:scaleX(0.895);transform-origin:0 50%;">771667780</div>
<div class="t" style="left:70.6px;top:187.5px;font-size:12px;line-height:16px;color:#000;transform:scaleX(0.895);transform-origin:0 50%;">1923271,33</div>
<div class="t" style="left:139.2px;top:187.5px;font-size:12px;line-height:16px;color:#000;transform:scaleX(0.895);transform-origin:0 50%;">147912,47</div>
<div class="t" style="left:202.0px;top:187.5px;font-size:12px;line-height:16px;color:#000;transform:scaleX(0.895);transform-origin:0 50%;">402,00</div>
<div class="t" style="left:258.7px;top:187.5px;font-size:12px;line-height:16px;color:#000;transform:scaleX(0.895);transform-origin:0 50%;">1290.51</div>
<div class="t" style="left:309.0px;top:187.5px;font-size:12px;line-height:16px;color:#000;transform:scaleX(0.895);transform-origin:0 50%;">12740.81</div>
<div class="t" style="left:365.7px;top:187.5px;font-size:12px;line-height:16px;color:#000;transform:scaleX(0.895);transform-origin:0 50%;">6905.67</div>
<div class="t" style="left:438.0px;top:187.5px;font-size:12px;line-height:16px;color:#000;transform:scaleX(0.895);transform-origin:0 50%;">-6503.67</div>
<div class="t" style="left:524.7px;top:187.5px;font-size:12px;line-height:16px;color:#000;transform:scaleX(0.895);transform-origin:0 50%;">6503.67</div>
<div class="t" style="left:625.6px;top:187.5px;font-size:12px;line-height:16px;color:#000;transform:scaleX(0.895);transform-origin:0 50%;">-0.09</div>
<div style="left:0px;top:220px;width:1236px;height:1px;background:#f0f0f0;"></div>
<div class="t" style="left:6.3px;top:204.5px;font-size:12px;line-height:16px;color:#000;transform:scaleX(0.895);transform-origin:0 50%;">771667782</div>
<div class="t" style="left:70.6px;top:204.5px;font-size:12px;line-height:16px;color:#000;transform:scaleX(0.895);transform-origin:0 50%;">1949983,35</div>
<div class="t" style="left:139.2px;top:204.5px;font-size:12px;line-height:16px;color:#000;transform:scaleX(0.895);transform-origin:0 50%;">156134,17</div>
<div class="t" style="left:202.0px;top:204.5px;font-size:12px;line-height:16px;color:#000;transform:scaleX(0.895);transform-origin:0 50%;">342,00</div>
<div class="t" style="left:258.7px;top:204.5px;font-size:12px;line-height:16px;color:#000;transform:scaleX(0.895);transform-origin:0 50%;">1251.95</div>
<div class="t" style="left:309.0px;top:204.5px;font-size:12px;line-height:16px;color:#000;transform:scaleX(0.895);transform-origin:0 50%;">12781.99</div>
<div class="t" style="left:365.7px;top:204.5px;font-size:12px;line-height:16px;color:#000;transform:scaleX(0.895);transform-origin:0 50%;">6552.42</div>
<div class="t" style="left:438.0px;top:204.5px;font-size:12px;line-height:16px;color:#000;transform:scaleX(0.895);transform-origin:0 50%;">-6210.42</div>
<div class="t" style="left:524.7px;top:204.5px;font-size:12px;line-height:16px;color:#000;transform:scaleX(0.895);transform-origin:0 50%;">6210.42</div>
<div class="t" style="left:625.6px;top:204.5px;font-size:12px;line-height:16px;color:#000;transform:scaleX(0.895);transform-origin:0 50%;">-2.09</div>
</div>
<div style="left:1240px;top:782px;width:16px;height:233px;background:#f0f0f0;"></div>
<div style="left:1238px;top:782px;width:1px;height:24px;background:#e5e5e5;"></div>
<svg style="left:1242.5px;top:787.5px" width="11" height="7" viewBox="0 0 11 7"><path d="M1.7 5.6 L5.5 1.8 L9.3 5.6" fill="none" stroke="#404848" stroke-width="1.8"/></svg>
<svg style="left:1242.5px;top:1003.5px" width="11" height="7" viewBox="0 0 11 7"><path d="M1.7 1.4 L5.5 5.2 L9.3 1.4" fill="none" stroke="#404848" stroke-width="1.8"/></svg>
<div style="left:1241px;top:799px;width:14px;height:126px;background:#cdcdcd;"></div>
<div style="left:0px;top:1017px;width:1920px;height:1px;background:#fff;"></div>
<div style="left:0px;top:1018px;width:1920px;height:1px;background:#dadada;"></div>
<div class="hdr" style="left:1262px;top:762px;width:658px;height:18px;"></div>
<div class="t" style="left:1268.3px;top:763.5px;font-size:12px;line-height:16px;color:#000;transform:scaleX(1.0014);transform-origin:0 50%;">Velocity Histogram</div>
<svg style="left:1889px;top:767px" width="7" height="10" viewBox="0 0 7 10"><g shape-rendering="crispEdges" fill="#000"><rect x="1" y="0" width="5" height="1"/><rect x="1" y="0" width="1" height="6"/><rect x="4" y="0" width="2" height="6"/><rect x="0" y="6" width="7" height="1"/><rect x="3" y="7" width="1" height="3"/></g></svg>
<svg style="left:1905px;top:768px" width="9" height="8" viewBox="0 0 9 8"><path d="M0.8 0.6 L8.2 7.4 M8.2 0.6 L0.8 7.4" stroke="#000" stroke-width="1.7"/></svg>
<div style="left:1262px;top:780px;width:658px;height:238px;background:#fff;"></div>
<div class="t" style="left:1390.72px;top:786.7px;font-size:12px;line-height:14px;color:#000;width:400px;text-align:center;transform:scaleX(0.942);transform-origin:50% 50%;">CG_r1 Velocity Histogram</div>
<svg style="left:0;top:0" width="1920" height="1040" viewBox="0 0 1920 1040"><g shape-rendering="crispEdges" stroke="#000" stroke-width="1"><path d="M1322 817.5 H1876"/><path d="M1322 854.5 H1876"/><path d="M1322 891.5 H1876"/><path d="M1322 928.5 H1876"/><path d="M1322 965.5 H1876"/><path d="M1328.5 817 V969"/><path d="M1465.5 817 V969"/><path d="M1601.5 817 V969"/><path d="M1738.5 817 V969"/><path d="M1875.5 817 V969"/><path d="M1396.5 965 V969"/><path d="M1533.5 965 V969"/><path d="M1670.5 965 V969"/><path d="M1807.5 965 V969"/></g><g shape-rendering="crispEdges" fill="#0000ff"><rect x="1387" y="928" width="9" height="37"/><rect x="1513" y="928" width="44" height="37"/><rect x="1557" y="891" width="9" height="74"/><rect x="1566" y="854" width="9" height="111"/><rect x="1584" y="928" width="18" height="37"/><rect x="1611" y="928" width="9" height="37"/><rect x="1629" y="928" width="9" height="37"/><rect x="1656" y="928" width="9" height="37"/><rect x="1683" y="928" width="18" height="37"/><rect x="1826" y="928" width="9" height="37"/></g></svg>
<div class="t" style="left:918.95px;top:809.5px;font-size:13px;line-height:16px;color:#000;width:400px;text-align:right;transform:scaleX(0.9615);transform-origin:100% 50%;">4</div>
<div class="t" style="left:918.95px;top:846.5px;font-size:13px;line-height:16px;color:#000;width:400px;text-align:right;transform:scaleX(0.9615);transform-origin:100% 50%;">3</div>
<div class="t" style="left:918.95px;top:883.5px;font-size:13px;line-height:16px;color:#000;width:400px;text-align:right;transform:scaleX(0.9615);transform-origin:100% 50%;">2</div>
<div class="t" style="left:918.95px;top:920.5px;font-size:13px;line-height:16px;color:#000;width:400px;text-align:right;transform:scaleX(0.9615);transform-origin:100% 50%;">1</div>
<div class="t" style="left:918.95px;top:957.5px;font-size:13px;line-height:16px;color:#000;width:400px;text-align:right;transform:scaleX(0.9615);transform-origin:100% 50%;">0</div>
<div class="t" style="left:1128.18px;top:972.3px;font-size:13px;line-height:16px;color:#000;width:400px;text-align:center;transform:scaleX(0.9821);transform-origin:50% 50%;">11000</div>
<div class="t" style="left:1196.58px;top:972.3px;font-size:13px;line-height:16px;color:#000;width:400px;text-align:center;transform:scaleX(0.9821);transform-origin:50% 50%;">11500</div>
<div class="t" style="left:1265.0px;top:972.3px;font-size:13px;line-height:16px;color:#000;width:400px;text-align:center;transform:scaleX(0.9574);transform-origin:50% 50%;">12000</div>
<div class="t" style="left:1333.4px;top:972.3px;font-size:13px;line-height:16px;color:#000;width:400px;text-align:center;transform:scaleX(0.9574);transform-origin:50% 50%;">12500</div>
<div class="t" style="left:1401.8px;top:972.3px;font-size:13px;line-height:16px;color:#000;width:400px;text-align:center;transform:scaleX(0.9574);transform-origin:50% 50%;">13000</div>
<div class="t" style="left:1470.2px;top:972.3px;font-size:13px;line-height:16px;color:#000;width:400px;text-align:center;transform:scaleX(0.9574);transform-origin:50% 50%;">13500</div>
<div class="t" style="left:1538.6px;top:972.3px;font-size:13px;line-height:16px;color:#000;width:400px;text-align:center;transform:scaleX(0.9574);transform-origin:50% 50%;">14000</div>
<div class="t" style="left:1607.0px;top:972.3px;font-size:13px;line-height:16px;color:#000;width:400px;text-align:center;transform:scaleX(0.9574);transform-origin:50% 50%;">14500</div>
<div class="t" style="left:1675.4px;top:972.3px;font-size:13px;line-height:16px;color:#000;width:400px;text-align:center;transform:scaleX(0.9574);transform-origin:50% 50%;">15000</div>
<div class="t" style="left:1401.48px;top:994px;font-size:12px;line-height:14px;color:#000;width:400px;text-align:center;transform:scaleX(0.942);transform-origin:50% 50%;">Velocity</div>
<div class="t" style="left:1193.3px;top:884.3px;width:200px;text-align:center;font-size:12px;line-height:14px;transform:rotate(-90deg) scaleX(0.9057);transform-origin:50% 50%;">Count</div>
</div></body></html>
